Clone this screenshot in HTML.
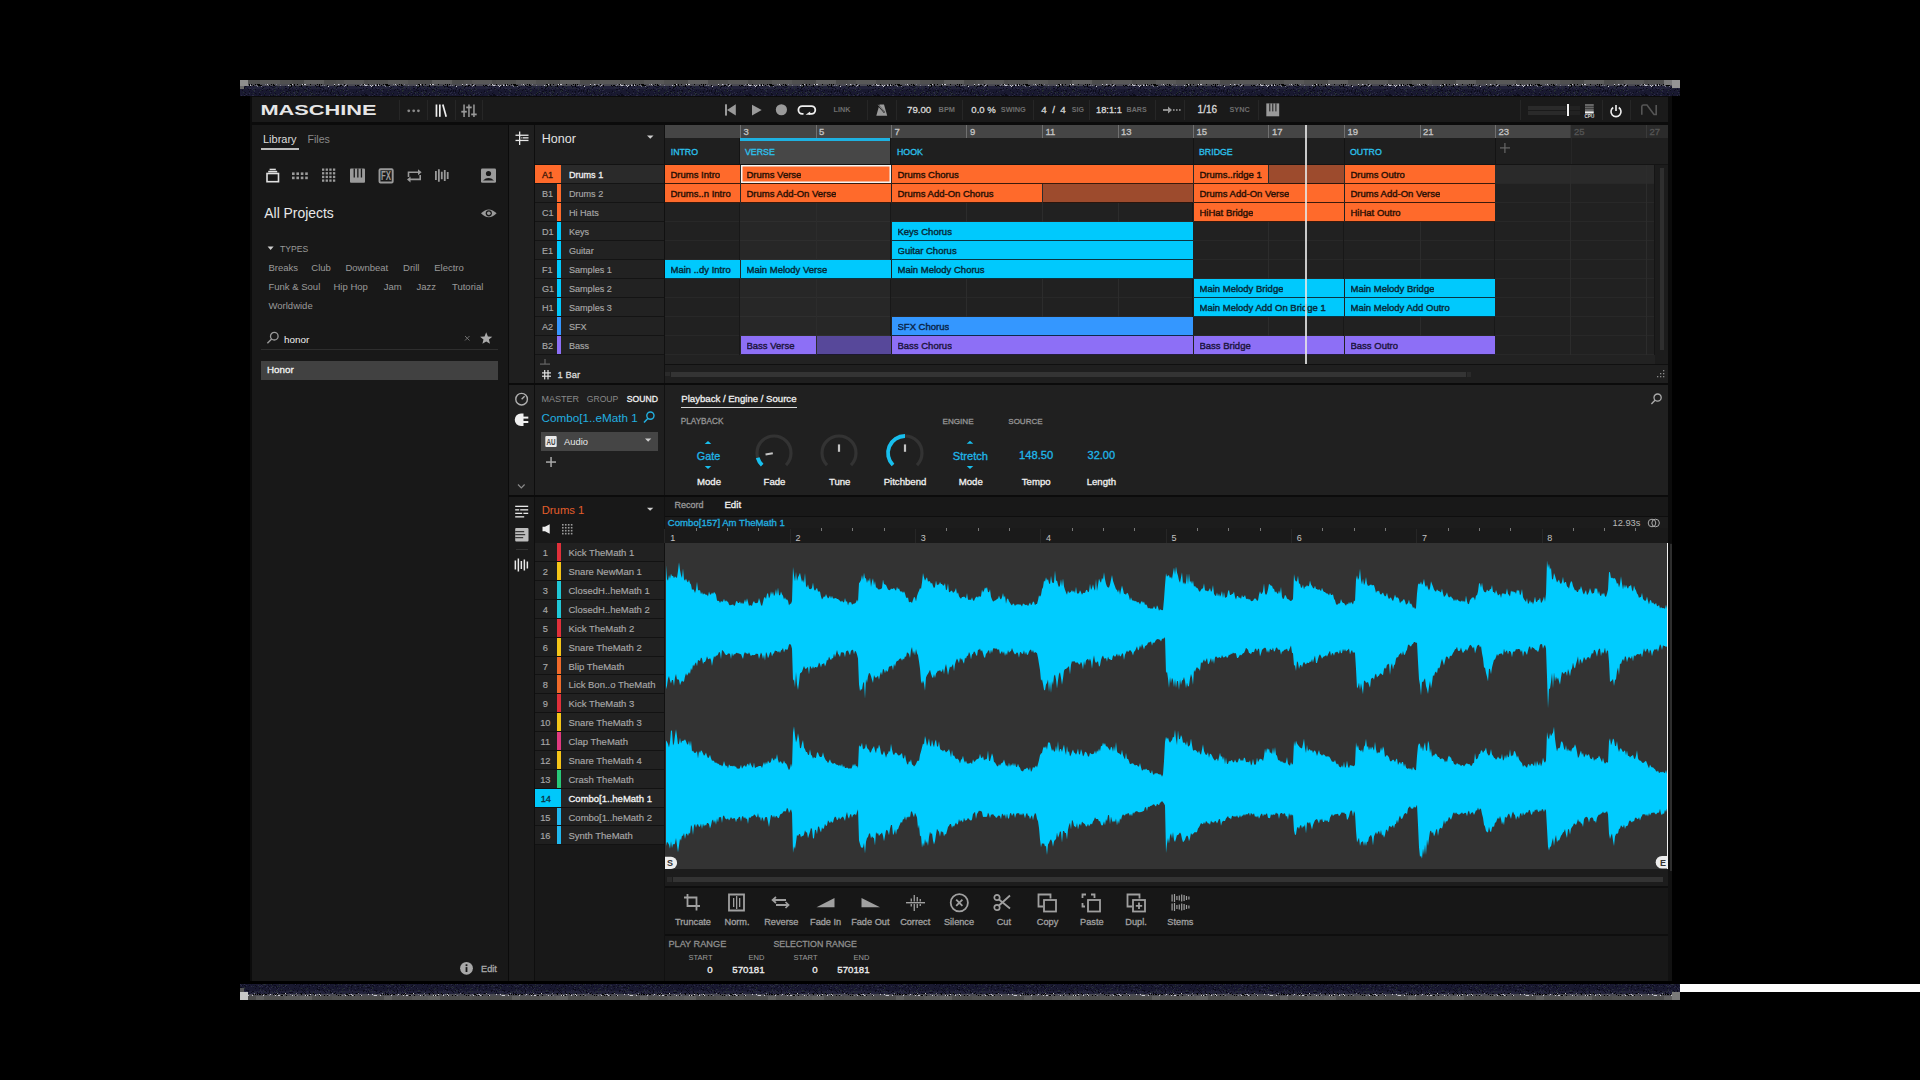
<!DOCTYPE html><html><head><meta charset="utf-8"><title>Maschine</title><style>html,body{margin:0;padding:0;background:#000;width:1920px;height:1080px;overflow:hidden}.t{position:absolute;line-height:1;white-space:nowrap;font-family:"Liberation Sans",sans-serif}.r{position:absolute}.s{position:absolute;overflow:visible}</style></head><body><svg class="s" style="left:240px;top:80px;" width="1440" height="16" viewBox="0 0 1440 16"><defs><pattern id="nz11" x="0" y="0" width="128" height="16" patternUnits="userSpaceOnUse"><rect x="0" y="0" width="20" height="4" fill="#505050"/><rect x="20" y="0" width="20" height="4" fill="#585858"/><rect x="40" y="0" width="12" height="4" fill="#505050"/><rect x="52" y="0" width="12" height="4" fill="#4c4c4c"/><rect x="64" y="0" width="20" height="4" fill="#5e5e5e"/><rect x="84" y="0" width="12" height="4" fill="#4c4c4c"/><rect x="96" y="0" width="8" height="4" fill="#505050"/><rect x="104" y="0" width="20" height="4" fill="#585858"/><rect x="124" y="0" width="8" height="4" fill="#4c4c4c"/><rect x="15" y="4" width="1" height="1" fill="#000"/><rect x="61" y="6" width="1" height="1" fill="#000"/><rect x="118" y="5" width="1" height="1" fill="#000"/><rect x="50" y="6" width="1" height="1" fill="#000"/><rect x="75" y="5" width="1" height="1" fill="#000"/><rect x="21" y="5" width="1" height="1" fill="#c8c8d0"/><rect x="104" y="6" width="1" height="1" fill="#7a7a88"/><rect x="21" y="5" width="1" height="1" fill="#000"/><rect x="58" y="6" width="1" height="1" fill="#000"/><rect x="17" y="6" width="1" height="1" fill="#7a7a88"/><rect x="102" y="4" width="1" height="1" fill="#7a7a88"/><rect x="98" y="4" width="1" height="1" fill="#7a7a88"/><rect x="0" y="4" width="1" height="1" fill="#000"/><rect x="13" y="5" width="1" height="1" fill="#000"/><rect x="101" y="5" width="1" height="1" fill="#000"/><rect x="50" y="5" width="1" height="1" fill="#000"/><rect x="79" y="5" width="1" height="1" fill="#000"/><rect x="104" y="4" width="1" height="1" fill="#000"/><rect x="25" y="4" width="1" height="1" fill="#000"/><rect x="124" y="4" width="1" height="1" fill="#c8c8d0"/><rect x="48" y="5" width="1" height="1" fill="#c8c8d0"/><rect x="33" y="5" width="1" height="1" fill="#c8c8d0"/><rect x="29" y="5" width="1" height="1" fill="#000"/><rect x="54" y="4" width="1" height="1" fill="#000"/><rect x="77" y="4" width="1" height="1" fill="#000"/><rect x="100" y="6" width="1" height="1" fill="#c8c8d0"/><rect x="25" y="4" width="1" height="1" fill="#7a7a88"/><rect x="54" y="5" width="1" height="1" fill="#000"/><rect x="84" y="5" width="1" height="1" fill="#000"/><rect x="19" y="4" width="1" height="1" fill="#000"/><rect x="62" y="4" width="1" height="1" fill="#c8c8d0"/><rect x="95" y="6" width="1" height="1" fill="#000"/><rect x="123" y="6" width="1" height="1" fill="#000"/><rect x="98" y="4" width="1" height="1" fill="#c8c8d0"/><rect x="79" y="4" width="1" height="1" fill="#7a7a88"/><rect x="63" y="4" width="1" height="1" fill="#000"/><rect x="50" y="5" width="1" height="1" fill="#7a7a88"/><rect x="20" y="5" width="1" height="1" fill="#000"/><rect x="27" y="4" width="1" height="1" fill="#c8c8d0"/><rect x="65" y="4" width="1" height="1" fill="#c8c8d0"/><rect x="100" y="5" width="1" height="1" fill="#000"/><rect x="125" y="5" width="1" height="1" fill="#c8c8d0"/><rect x="17" y="4" width="1" height="1" fill="#000"/><rect x="18" y="5" width="1" height="1" fill="#000"/><rect x="52" y="4" width="1" height="1" fill="#000"/><rect x="105" y="5" width="1" height="1" fill="#000"/><rect x="11" y="4" width="1" height="1" fill="#000"/><rect x="33" y="4" width="1" height="1" fill="#000"/><rect x="115" y="5" width="1" height="1" fill="#c8c8d0"/><rect x="35" y="6" width="1" height="1" fill="#000"/><rect x="4" y="5" width="1" height="1" fill="#7a7a88"/><rect x="79" y="4" width="1" height="1" fill="#000"/><rect x="19" y="5" width="1" height="1" fill="#000"/><rect x="79" y="5" width="1" height="1" fill="#000"/><rect x="18" y="4" width="1" height="1" fill="#000"/><rect x="94" y="4" width="1" height="1" fill="#7a7a88"/><rect x="33" y="5" width="1" height="1" fill="#000"/><rect x="121" y="4" width="1" height="1" fill="#7a7a88"/><rect x="106" y="4" width="1" height="1" fill="#7a7a88"/><rect x="3" y="6" width="1" height="1" fill="#c8c8d0"/><rect x="97" y="6" width="1" height="1" fill="#000"/><rect x="18" y="4" width="1" height="1" fill="#000"/><rect x="29" y="5" width="1" height="1" fill="#7a7a88"/><rect x="84" y="5" width="1" height="1" fill="#7a7a88"/><rect x="117" y="5" width="1" height="1" fill="#000"/><rect x="21" y="6" width="1" height="1" fill="#7a7a88"/><rect x="7" y="5" width="1" height="1" fill="#c8c8d0"/><rect x="123" y="4" width="1" height="1" fill="#000"/><rect x="28" y="5" width="1" height="1" fill="#7a7a88"/><rect x="124" y="5" width="1" height="1" fill="#7a7a88"/><rect x="94" y="5" width="1" height="1" fill="#000"/><rect x="51" y="6" width="1" height="1" fill="#000"/><rect x="87" y="5" width="1" height="1" fill="#000"/><rect x="61" y="5" width="1" height="1" fill="#000"/><rect x="64" y="4" width="1" height="1" fill="#c8c8d0"/><rect x="51" y="4" width="1" height="1" fill="#000"/><rect x="81" y="4" width="1" height="1" fill="#000"/><rect x="127" y="5" width="1" height="1" fill="#7a7a88"/><rect x="10" y="4" width="1" height="1" fill="#7a7a88"/><rect x="70" y="4" width="1" height="1" fill="#000"/><rect x="120" y="5" width="1" height="1" fill="#7a7a88"/><rect x="105" y="5" width="1" height="1" fill="#c8c8d0"/><rect x="126" y="5" width="1" height="1" fill="#c8c8d0"/><rect x="115" y="5" width="1" height="1" fill="#000"/><rect x="8" y="5" width="1" height="1" fill="#7a7a88"/><rect x="10" y="5" width="1" height="1" fill="#c8c8d0"/><rect x="79" y="6" width="1" height="1" fill="#000"/><rect x="34" y="5" width="1" height="1" fill="#000"/><rect x="6" y="5" width="1" height="1" fill="#000"/><rect x="36" y="4" width="1" height="1" fill="#7a7a88"/><rect x="29" y="5" width="1" height="1" fill="#000"/><rect x="94" y="4" width="1" height="1" fill="#c8c8d0"/><rect x="51" y="5" width="1" height="1" fill="#000"/><rect x="2" y="5" width="1" height="1" fill="#c8c8d0"/><rect x="9" y="4" width="1" height="1" fill="#000"/><rect x="88" y="6" width="1" height="1" fill="#c8c8d0"/><rect x="40" y="5" width="1" height="1" fill="#7a7a88"/><rect x="57" y="4" width="1" height="1" fill="#000"/><rect x="99" y="4" width="1" height="1" fill="#000"/><rect x="50" y="4" width="1" height="1" fill="#000"/><rect x="87" y="5" width="1" height="1" fill="#000"/><rect x="52" y="4" width="1" height="1" fill="#c8c8d0"/><rect x="31" y="4" width="1" height="1" fill="#000"/><rect x="99" y="4" width="1" height="1" fill="#7a7a88"/><rect x="82" y="5" width="1" height="1" fill="#7a7a88"/><rect x="4" y="5" width="1" height="1" fill="#c8c8d0"/><rect x="9" y="5" width="1" height="1" fill="#000"/><rect x="107" y="5" width="1" height="1" fill="#000"/><rect x="7" y="4" width="1" height="1" fill="#7a7a88"/><rect x="16" y="5" width="1" height="1" fill="#7a7a88"/><rect x="44" y="14" width="1" height="1" fill="#0c0c1a"/><rect x="35" y="13" width="1" height="1" fill="#0c0c1a"/><rect x="112" y="13" width="1" height="1" fill="#2c2c46"/><rect x="22" y="9" width="1" height="1" fill="#2c2c46"/><rect x="74" y="14" width="1" height="1" fill="#263030"/><rect x="65" y="10" width="1" height="1" fill="#263030"/><rect x="53" y="10" width="1" height="1" fill="#12122a"/><rect x="69" y="15" width="1" height="1" fill="#2c2c46"/><rect x="105" y="14" width="1" height="1" fill="#0c0c1a"/><rect x="1" y="15" width="1" height="1" fill="#2c2c46"/><rect x="11" y="14" width="1" height="1" fill="#12122a"/><rect x="31" y="13" width="1" height="1" fill="#0c0c1a"/><rect x="42" y="7" width="1" height="1" fill="#12122a"/><rect x="117" y="12" width="1" height="1" fill="#12122a"/><rect x="103" y="10" width="1" height="1" fill="#0c0c1a"/><rect x="126" y="8" width="1" height="1" fill="#0c0c1a"/><rect x="121" y="14" width="1" height="1" fill="#0c0c1a"/><rect x="49" y="12" width="1" height="1" fill="#263030"/><rect x="66" y="8" width="1" height="1" fill="#263030"/><rect x="5" y="6" width="1" height="1" fill="#0c0c1a"/><rect x="58" y="6" width="1" height="1" fill="#263030"/><rect x="82" y="11" width="1" height="1" fill="#0c0c1a"/><rect x="127" y="7" width="1" height="1" fill="#2c2c46"/><rect x="31" y="14" width="1" height="1" fill="#263030"/><rect x="50" y="14" width="1" height="1" fill="#12122a"/><rect x="5" y="12" width="1" height="1" fill="#263030"/><rect x="40" y="14" width="1" height="1" fill="#0c0c1a"/><rect x="55" y="14" width="1" height="1" fill="#0c0c1a"/><rect x="34" y="9" width="1" height="1" fill="#12122a"/><rect x="88" y="8" width="1" height="1" fill="#0c0c1a"/><rect x="80" y="9" width="1" height="1" fill="#0c0c1a"/><rect x="49" y="7" width="1" height="1" fill="#0c0c1a"/><rect x="61" y="8" width="1" height="1" fill="#263030"/><rect x="66" y="12" width="1" height="1" fill="#0c0c1a"/><rect x="107" y="14" width="1" height="1" fill="#12122a"/><rect x="32" y="9" width="1" height="1" fill="#2c2c46"/><rect x="4" y="7" width="1" height="1" fill="#0c0c1a"/><rect x="91" y="11" width="1" height="1" fill="#0c0c1a"/><rect x="87" y="14" width="1" height="1" fill="#12122a"/><rect x="48" y="7" width="1" height="1" fill="#2c2c46"/><rect x="6" y="6" width="1" height="1" fill="#12122a"/><rect x="123" y="8" width="1" height="1" fill="#0c0c1a"/><rect x="29" y="9" width="1" height="1" fill="#0c0c1a"/><rect x="40" y="10" width="1" height="1" fill="#12122a"/><rect x="24" y="15" width="1" height="1" fill="#0c0c1a"/><rect x="118" y="7" width="1" height="1" fill="#12122a"/><rect x="83" y="12" width="1" height="1" fill="#2c2c46"/><rect x="90" y="12" width="1" height="1" fill="#0c0c1a"/><rect x="95" y="6" width="1" height="1" fill="#263030"/><rect x="10" y="9" width="1" height="1" fill="#0c0c1a"/><rect x="116" y="11" width="1" height="1" fill="#263030"/><rect x="103" y="9" width="1" height="1" fill="#263030"/><rect x="24" y="14" width="1" height="1" fill="#12122a"/><rect x="82" y="7" width="1" height="1" fill="#12122a"/><rect x="103" y="15" width="1" height="1" fill="#2c2c46"/><rect x="87" y="10" width="1" height="1" fill="#0c0c1a"/><rect x="29" y="8" width="1" height="1" fill="#12122a"/><rect x="103" y="8" width="1" height="1" fill="#12122a"/><rect x="94" y="12" width="1" height="1" fill="#12122a"/><rect x="103" y="9" width="1" height="1" fill="#263030"/><rect x="18" y="11" width="1" height="1" fill="#0c0c1a"/><rect x="25" y="6" width="1" height="1" fill="#12122a"/><rect x="12" y="9" width="1" height="1" fill="#0c0c1a"/><rect x="76" y="11" width="1" height="1" fill="#0c0c1a"/><rect x="103" y="15" width="1" height="1" fill="#0c0c1a"/><rect x="19" y="12" width="1" height="1" fill="#2c2c46"/><rect x="127" y="9" width="1" height="1" fill="#263030"/><rect x="101" y="15" width="1" height="1" fill="#0c0c1a"/><rect x="27" y="9" width="1" height="1" fill="#0c0c1a"/><rect x="102" y="14" width="1" height="1" fill="#0c0c1a"/><rect x="50" y="12" width="1" height="1" fill="#0c0c1a"/><rect x="66" y="10" width="1" height="1" fill="#0c0c1a"/><rect x="87" y="14" width="1" height="1" fill="#2c2c46"/><rect x="106" y="14" width="1" height="1" fill="#2c2c46"/><rect x="25" y="13" width="1" height="1" fill="#12122a"/><rect x="19" y="14" width="1" height="1" fill="#2c2c46"/><rect x="11" y="12" width="1" height="1" fill="#12122a"/><rect x="40" y="12" width="1" height="1" fill="#2c2c46"/><rect x="43" y="13" width="1" height="1" fill="#2c2c46"/><rect x="14" y="12" width="1" height="1" fill="#12122a"/><rect x="107" y="10" width="1" height="1" fill="#2c2c46"/><rect x="79" y="11" width="1" height="1" fill="#2c2c46"/><rect x="123" y="10" width="1" height="1" fill="#2c2c46"/><rect x="72" y="10" width="1" height="1" fill="#0c0c1a"/><rect x="62" y="15" width="1" height="1" fill="#0c0c1a"/><rect x="40" y="12" width="1" height="1" fill="#12122a"/><rect x="99" y="6" width="1" height="1" fill="#12122a"/><rect x="101" y="6" width="1" height="1" fill="#2c2c46"/><rect x="81" y="7" width="1" height="1" fill="#12122a"/><rect x="57" y="12" width="1" height="1" fill="#263030"/><rect x="64" y="9" width="1" height="1" fill="#0c0c1a"/><rect x="25" y="13" width="1" height="1" fill="#0c0c1a"/><rect x="62" y="15" width="1" height="1" fill="#263030"/><rect x="12" y="15" width="1" height="1" fill="#2c2c46"/><rect x="30" y="9" width="1" height="1" fill="#12122a"/><rect x="91" y="14" width="1" height="1" fill="#0c0c1a"/><rect x="93" y="13" width="1" height="1" fill="#0c0c1a"/><rect x="106" y="13" width="1" height="1" fill="#263030"/><rect x="107" y="11" width="1" height="1" fill="#12122a"/><rect x="35" y="10" width="1" height="1" fill="#263030"/><rect x="61" y="13" width="1" height="1" fill="#0c0c1a"/><rect x="79" y="14" width="1" height="1" fill="#263030"/><rect x="91" y="10" width="1" height="1" fill="#0c0c1a"/><rect x="48" y="10" width="1" height="1" fill="#12122a"/><rect x="48" y="9" width="1" height="1" fill="#2c2c46"/><rect x="50" y="6" width="1" height="1" fill="#263030"/><rect x="2" y="10" width="1" height="1" fill="#0c0c1a"/><rect x="6" y="15" width="1" height="1" fill="#0c0c1a"/><rect x="56" y="14" width="1" height="1" fill="#0c0c1a"/><rect x="22" y="8" width="1" height="1" fill="#2c2c46"/><rect x="95" y="13" width="1" height="1" fill="#2c2c46"/><rect x="53" y="11" width="1" height="1" fill="#0c0c1a"/><rect x="34" y="7" width="1" height="1" fill="#12122a"/><rect x="114" y="15" width="1" height="1" fill="#12122a"/><rect x="54" y="13" width="1" height="1" fill="#2c2c46"/><rect x="66" y="12" width="1" height="1" fill="#12122a"/><rect x="94" y="8" width="1" height="1" fill="#263030"/><rect x="83" y="10" width="1" height="1" fill="#2c2c46"/><rect x="47" y="12" width="1" height="1" fill="#263030"/><rect x="24" y="13" width="1" height="1" fill="#12122a"/><rect x="20" y="14" width="1" height="1" fill="#0c0c1a"/><rect x="124" y="13" width="1" height="1" fill="#0c0c1a"/><rect x="2" y="7" width="1" height="1" fill="#0c0c1a"/><rect x="20" y="10" width="1" height="1" fill="#2c2c46"/><rect x="83" y="10" width="1" height="1" fill="#12122a"/><rect x="56" y="11" width="1" height="1" fill="#263030"/><rect x="83" y="11" width="1" height="1" fill="#12122a"/><rect x="82" y="13" width="1" height="1" fill="#2c2c46"/><rect x="71" y="13" width="1" height="1" fill="#2c2c46"/><rect x="78" y="13" width="1" height="1" fill="#0c0c1a"/><rect x="102" y="14" width="1" height="1" fill="#0c0c1a"/><rect x="92" y="11" width="1" height="1" fill="#0c0c1a"/><rect x="101" y="15" width="1" height="1" fill="#2c2c46"/><rect x="49" y="15" width="1" height="1" fill="#2c2c46"/><rect x="99" y="14" width="1" height="1" fill="#0c0c1a"/><rect x="45" y="8" width="1" height="1" fill="#0c0c1a"/><rect x="116" y="10" width="1" height="1" fill="#12122a"/><rect x="56" y="14" width="1" height="1" fill="#0c0c1a"/><rect x="40" y="15" width="1" height="1" fill="#0c0c1a"/><rect x="5" y="12" width="1" height="1" fill="#0c0c1a"/><rect x="78" y="14" width="1" height="1" fill="#0c0c1a"/><rect x="20" y="10" width="1" height="1" fill="#263030"/><rect x="80" y="7" width="1" height="1" fill="#0c0c1a"/><rect x="36" y="7" width="1" height="1" fill="#263030"/><rect x="108" y="9" width="1" height="1" fill="#263030"/><rect x="125" y="14" width="1" height="1" fill="#0c0c1a"/><rect x="117" y="12" width="1" height="1" fill="#2c2c46"/><rect x="85" y="8" width="1" height="1" fill="#2c2c46"/><rect x="18" y="15" width="1" height="1" fill="#12122a"/><rect x="105" y="11" width="1" height="1" fill="#12122a"/><rect x="96" y="7" width="1" height="1" fill="#12122a"/><rect x="6" y="14" width="1" height="1" fill="#2c2c46"/><rect x="2" y="7" width="1" height="1" fill="#2c2c46"/><rect x="107" y="8" width="1" height="1" fill="#0c0c1a"/><rect x="41" y="12" width="1" height="1" fill="#263030"/><rect x="82" y="9" width="1" height="1" fill="#2c2c46"/><rect x="74" y="10" width="1" height="1" fill="#12122a"/><rect x="15" y="13" width="1" height="1" fill="#0c0c1a"/><rect x="29" y="10" width="1" height="1" fill="#263030"/><rect x="45" y="6" width="1" height="1" fill="#12122a"/><rect x="4" y="15" width="1" height="1" fill="#2c2c46"/><rect x="9" y="11" width="1" height="1" fill="#0c0c1a"/><rect x="47" y="11" width="1" height="1" fill="#0c0c1a"/><rect x="60" y="15" width="1" height="1" fill="#263030"/><rect x="57" y="13" width="1" height="1" fill="#0c0c1a"/><rect x="71" y="12" width="1" height="1" fill="#0c0c1a"/><rect x="79" y="14" width="1" height="1" fill="#12122a"/><rect x="122" y="10" width="1" height="1" fill="#2c2c46"/><rect x="103" y="11" width="1" height="1" fill="#263030"/><rect x="23" y="13" width="1" height="1" fill="#12122a"/><rect x="102" y="6" width="1" height="1" fill="#0c0c1a"/><rect x="34" y="12" width="1" height="1" fill="#12122a"/><rect x="70" y="6" width="1" height="1" fill="#263030"/><rect x="60" y="6" width="1" height="1" fill="#12122a"/><rect x="95" y="13" width="1" height="1" fill="#12122a"/><rect x="107" y="15" width="1" height="1" fill="#12122a"/><rect x="106" y="8" width="1" height="1" fill="#12122a"/><rect x="37" y="10" width="1" height="1" fill="#12122a"/><rect x="33" y="15" width="1" height="1" fill="#0c0c1a"/><rect x="13" y="8" width="1" height="1" fill="#2c2c46"/><rect x="45" y="6" width="1" height="1" fill="#0c0c1a"/><rect x="38" y="8" width="1" height="1" fill="#0c0c1a"/><rect x="69" y="15" width="1" height="1" fill="#263030"/><rect x="24" y="13" width="1" height="1" fill="#263030"/><rect x="21" y="15" width="1" height="1" fill="#2c2c46"/><rect x="77" y="6" width="1" height="1" fill="#12122a"/><rect x="106" y="9" width="1" height="1" fill="#12122a"/><rect x="23" y="13" width="1" height="1" fill="#0c0c1a"/><rect x="105" y="14" width="1" height="1" fill="#2c2c46"/><rect x="79" y="11" width="1" height="1" fill="#0c0c1a"/><rect x="19" y="14" width="1" height="1" fill="#0c0c1a"/><rect x="119" y="7" width="1" height="1" fill="#2c2c46"/><rect x="35" y="7" width="1" height="1" fill="#263030"/><rect x="118" y="7" width="1" height="1" fill="#263030"/><rect x="3" y="12" width="1" height="1" fill="#263030"/><rect x="121" y="9" width="1" height="1" fill="#0c0c1a"/><rect x="29" y="13" width="1" height="1" fill="#12122a"/><rect x="52" y="15" width="1" height="1" fill="#0c0c1a"/><rect x="96" y="14" width="1" height="1" fill="#263030"/><rect x="86" y="12" width="1" height="1" fill="#2c2c46"/><rect x="22" y="10" width="1" height="1" fill="#0c0c1a"/><rect x="96" y="7" width="1" height="1" fill="#0c0c1a"/><rect x="70" y="15" width="1" height="1" fill="#2c2c46"/><rect x="84" y="13" width="1" height="1" fill="#12122a"/><rect x="23" y="7" width="1" height="1" fill="#0c0c1a"/><rect x="24" y="8" width="1" height="1" fill="#263030"/><rect x="45" y="8" width="1" height="1" fill="#0c0c1a"/><rect x="9" y="13" width="1" height="1" fill="#2c2c46"/><rect x="23" y="7" width="1" height="1" fill="#0c0c1a"/><rect x="40" y="7" width="1" height="1" fill="#2c2c46"/><rect x="18" y="11" width="1" height="1" fill="#12122a"/><rect x="109" y="14" width="1" height="1" fill="#0c0c1a"/><rect x="52" y="8" width="1" height="1" fill="#12122a"/><rect x="98" y="13" width="1" height="1" fill="#0c0c1a"/><rect x="105" y="15" width="1" height="1" fill="#0c0c1a"/><rect x="102" y="15" width="1" height="1" fill="#263030"/><rect x="62" y="15" width="1" height="1" fill="#2c2c46"/><rect x="66" y="11" width="1" height="1" fill="#0c0c1a"/><rect x="78" y="13" width="1" height="1" fill="#0c0c1a"/><rect x="96" y="9" width="1" height="1" fill="#2c2c46"/><rect x="75" y="7" width="1" height="1" fill="#263030"/><rect x="40" y="10" width="1" height="1" fill="#12122a"/><rect x="76" y="14" width="1" height="1" fill="#0c0c1a"/><rect x="36" y="15" width="1" height="1" fill="#263030"/><rect x="50" y="15" width="1" height="1" fill="#12122a"/><rect x="50" y="7" width="1" height="1" fill="#0c0c1a"/><rect x="122" y="15" width="1" height="1" fill="#2c2c46"/><rect x="85" y="11" width="1" height="1" fill="#0c0c1a"/><rect x="92" y="10" width="1" height="1" fill="#2c2c46"/><rect x="31" y="13" width="1" height="1" fill="#12122a"/><rect x="34" y="9" width="1" height="1" fill="#12122a"/><rect x="16" y="14" width="1" height="1" fill="#12122a"/><rect x="43" y="11" width="1" height="1" fill="#263030"/><rect x="31" y="6" width="1" height="1" fill="#0c0c1a"/><rect x="93" y="9" width="1" height="1" fill="#12122a"/><rect x="92" y="8" width="1" height="1" fill="#0c0c1a"/><rect x="19" y="13" width="1" height="1" fill="#0c0c1a"/><rect x="46" y="8" width="1" height="1" fill="#0c0c1a"/><rect x="97" y="15" width="1" height="1" fill="#2c2c46"/><rect x="4" y="8" width="1" height="1" fill="#0c0c1a"/><rect x="119" y="6" width="1" height="1" fill="#0c0c1a"/><rect x="98" y="7" width="1" height="1" fill="#2c2c46"/><rect x="44" y="11" width="1" height="1" fill="#2c2c46"/><rect x="67" y="9" width="1" height="1" fill="#2c2c46"/><rect x="85" y="6" width="1" height="1" fill="#263030"/><rect x="9" y="8" width="1" height="1" fill="#2c2c46"/><rect x="127" y="15" width="1" height="1" fill="#0c0c1a"/><rect x="88" y="12" width="1" height="1" fill="#12122a"/><rect x="104" y="10" width="1" height="1" fill="#2c2c46"/><rect x="118" y="12" width="1" height="1" fill="#12122a"/><rect x="30" y="15" width="1" height="1" fill="#0c0c1a"/><rect x="84" y="14" width="1" height="1" fill="#2c2c46"/><rect x="107" y="6" width="1" height="1" fill="#0c0c1a"/><rect x="13" y="10" width="1" height="1" fill="#263030"/><rect x="110" y="12" width="1" height="1" fill="#2c2c46"/><rect x="78" y="15" width="1" height="1" fill="#12122a"/><rect x="62" y="7" width="1" height="1" fill="#12122a"/><rect x="62" y="14" width="1" height="1" fill="#12122a"/><rect x="13" y="13" width="1" height="1" fill="#263030"/><rect x="61" y="14" width="1" height="1" fill="#0c0c1a"/><rect x="101" y="9" width="1" height="1" fill="#12122a"/><rect x="94" y="14" width="1" height="1" fill="#2c2c46"/><rect x="42" y="9" width="1" height="1" fill="#263030"/><rect x="107" y="15" width="1" height="1" fill="#0c0c1a"/><rect x="18" y="7" width="1" height="1" fill="#2c2c46"/><rect x="33" y="7" width="1" height="1" fill="#12122a"/><rect x="116" y="6" width="1" height="1" fill="#0c0c1a"/><rect x="76" y="6" width="1" height="1" fill="#0c0c1a"/><rect x="16" y="13" width="1" height="1" fill="#12122a"/><rect x="101" y="8" width="1" height="1" fill="#2c2c46"/><rect x="59" y="6" width="1" height="1" fill="#0c0c1a"/><rect x="116" y="11" width="1" height="1" fill="#0c0c1a"/><rect x="127" y="8" width="1" height="1" fill="#12122a"/><rect x="120" y="9" width="1" height="1" fill="#0c0c1a"/><rect x="15" y="9" width="1" height="1" fill="#0c0c1a"/><rect x="90" y="13" width="1" height="1" fill="#0c0c1a"/><rect x="51" y="14" width="1" height="1" fill="#263030"/><rect x="49" y="6" width="1" height="1" fill="#263030"/><rect x="78" y="11" width="1" height="1" fill="#12122a"/><rect x="70" y="12" width="1" height="1" fill="#263030"/><rect x="34" y="11" width="1" height="1" fill="#263030"/><rect x="113" y="12" width="1" height="1" fill="#0c0c1a"/><rect x="57" y="10" width="1" height="1" fill="#0c0c1a"/><rect x="50" y="10" width="1" height="1" fill="#0c0c1a"/><rect x="60" y="14" width="1" height="1" fill="#263030"/><rect x="69" y="11" width="1" height="1" fill="#12122a"/><rect x="29" y="15" width="1" height="1" fill="#2c2c46"/><rect x="77" y="8" width="1" height="1" fill="#263030"/><rect x="70" y="8" width="1" height="1" fill="#263030"/><rect x="23" y="13" width="1" height="1" fill="#12122a"/><rect x="112" y="14" width="1" height="1" fill="#0c0c1a"/><rect x="11" y="6" width="1" height="1" fill="#2c2c46"/><rect x="72" y="14" width="1" height="1" fill="#0c0c1a"/><rect x="22" y="8" width="1" height="1" fill="#0c0c1a"/><rect x="48" y="9" width="1" height="1" fill="#0c0c1a"/><rect x="7" y="8" width="1" height="1" fill="#12122a"/><rect x="38" y="6" width="1" height="1" fill="#263030"/><rect x="98" y="6" width="1" height="1" fill="#12122a"/><rect x="127" y="6" width="1" height="1" fill="#0c0c1a"/><rect x="92" y="11" width="1" height="1" fill="#263030"/><rect x="8" y="14" width="1" height="1" fill="#0c0c1a"/><rect x="44" y="15" width="1" height="1" fill="#12122a"/><rect x="42" y="7" width="1" height="1" fill="#263030"/><rect x="60" y="13" width="1" height="1" fill="#2c2c46"/><rect x="65" y="9" width="1" height="1" fill="#0c0c1a"/><rect x="56" y="15" width="1" height="1" fill="#263030"/><rect x="66" y="6" width="1" height="1" fill="#0c0c1a"/><rect x="13" y="15" width="1" height="1" fill="#2c2c46"/><rect x="46" y="11" width="1" height="1" fill="#0c0c1a"/><rect x="4" y="15" width="1" height="1" fill="#2c2c46"/><rect x="111" y="14" width="1" height="1" fill="#2c2c46"/><rect x="67" y="6" width="1" height="1" fill="#0c0c1a"/><rect x="45" y="15" width="1" height="1" fill="#263030"/><rect x="60" y="15" width="1" height="1" fill="#0c0c1a"/><rect x="79" y="12" width="1" height="1" fill="#0c0c1a"/><rect x="80" y="15" width="1" height="1" fill="#263030"/><rect x="67" y="15" width="1" height="1" fill="#2c2c46"/><rect x="43" y="12" width="1" height="1" fill="#0c0c1a"/><rect x="40" y="13" width="1" height="1" fill="#263030"/><rect x="116" y="6" width="1" height="1" fill="#0c0c1a"/><rect x="119" y="11" width="1" height="1" fill="#263030"/><rect x="10" y="8" width="1" height="1" fill="#2c2c46"/><rect x="34" y="8" width="1" height="1" fill="#263030"/><rect x="10" y="6" width="1" height="1" fill="#0c0c1a"/><rect x="36" y="7" width="1" height="1" fill="#2c2c46"/><rect x="76" y="13" width="1" height="1" fill="#2c2c46"/><rect x="19" y="6" width="1" height="1" fill="#263030"/><rect x="58" y="10" width="1" height="1" fill="#0c0c1a"/><rect x="61" y="12" width="1" height="1" fill="#2c2c46"/><rect x="58" y="11" width="1" height="1" fill="#0c0c1a"/><rect x="55" y="6" width="1" height="1" fill="#0c0c1a"/><rect x="14" y="11" width="1" height="1" fill="#2c2c46"/><rect x="45" y="13" width="1" height="1" fill="#12122a"/><rect x="54" y="12" width="1" height="1" fill="#2c2c46"/><rect x="12" y="9" width="1" height="1" fill="#2c2c46"/><rect x="63" y="8" width="1" height="1" fill="#12122a"/><rect x="41" y="13" width="1" height="1" fill="#0c0c1a"/><rect x="54" y="15" width="1" height="1" fill="#2c2c46"/><rect x="78" y="13" width="1" height="1" fill="#2c2c46"/><rect x="46" y="13" width="1" height="1" fill="#0c0c1a"/><rect x="98" y="12" width="1" height="1" fill="#0c0c1a"/><rect x="70" y="11" width="1" height="1" fill="#12122a"/><rect x="4" y="14" width="1" height="1" fill="#0c0c1a"/><rect x="67" y="14" width="1" height="1" fill="#2c2c46"/><rect x="55" y="10" width="1" height="1" fill="#0c0c1a"/><rect x="14" y="8" width="1" height="1" fill="#263030"/><rect x="92" y="8" width="1" height="1" fill="#12122a"/><rect x="30" y="6" width="1" height="1" fill="#12122a"/><rect x="98" y="13" width="1" height="1" fill="#0c0c1a"/><rect x="97" y="11" width="1" height="1" fill="#0c0c1a"/><rect x="14" y="10" width="1" height="1" fill="#2c2c46"/><rect x="61" y="13" width="1" height="1" fill="#0c0c1a"/><rect x="38" y="14" width="1" height="1" fill="#2c2c46"/><rect x="8" y="9" width="1" height="1" fill="#0c0c1a"/><rect x="108" y="13" width="1" height="1" fill="#2c2c46"/><rect x="34" y="14" width="1" height="1" fill="#263030"/><rect x="66" y="11" width="1" height="1" fill="#263030"/><rect x="96" y="8" width="1" height="1" fill="#12122a"/><rect x="71" y="14" width="1" height="1" fill="#263030"/><rect x="103" y="8" width="1" height="1" fill="#2c2c46"/><rect x="91" y="9" width="1" height="1" fill="#0c0c1a"/><rect x="94" y="11" width="1" height="1" fill="#263030"/><rect x="35" y="6" width="1" height="1" fill="#12122a"/><rect x="123" y="15" width="1" height="1" fill="#0c0c1a"/><rect x="76" y="7" width="1" height="1" fill="#12122a"/><rect x="55" y="14" width="1" height="1" fill="#263030"/><rect x="31" y="11" width="1" height="1" fill="#0c0c1a"/><rect x="66" y="7" width="1" height="1" fill="#12122a"/><rect x="30" y="12" width="1" height="1" fill="#2c2c46"/><rect x="125" y="12" width="1" height="1" fill="#12122a"/><rect x="72" y="13" width="1" height="1" fill="#263030"/><rect x="56" y="8" width="1" height="1" fill="#12122a"/><rect x="51" y="13" width="1" height="1" fill="#12122a"/><rect x="89" y="9" width="1" height="1" fill="#2c2c46"/><rect x="87" y="12" width="1" height="1" fill="#12122a"/><rect x="122" y="15" width="1" height="1" fill="#0c0c1a"/><rect x="78" y="6" width="1" height="1" fill="#12122a"/><rect x="30" y="11" width="1" height="1" fill="#12122a"/><rect x="103" y="10" width="1" height="1" fill="#0c0c1a"/><rect x="126" y="15" width="1" height="1" fill="#0c0c1a"/><rect x="83" y="10" width="1" height="1" fill="#0c0c1a"/><rect x="9" y="11" width="1" height="1" fill="#0c0c1a"/><rect x="95" y="15" width="1" height="1" fill="#0c0c1a"/><rect x="47" y="13" width="1" height="1" fill="#2c2c46"/><rect x="87" y="11" width="1" height="1" fill="#0c0c1a"/><rect x="55" y="7" width="1" height="1" fill="#263030"/><rect x="105" y="15" width="1" height="1" fill="#2c2c46"/><rect x="70" y="7" width="1" height="1" fill="#12122a"/><rect x="115" y="12" width="1" height="1" fill="#12122a"/><rect x="98" y="6" width="1" height="1" fill="#12122a"/><rect x="69" y="10" width="1" height="1" fill="#2c2c46"/><rect x="121" y="6" width="1" height="1" fill="#0c0c1a"/><rect x="49" y="10" width="1" height="1" fill="#0c0c1a"/><rect x="56" y="9" width="1" height="1" fill="#2c2c46"/><rect x="100" y="6" width="1" height="1" fill="#0c0c1a"/><rect x="126" y="14" width="1" height="1" fill="#0c0c1a"/><rect x="85" y="10" width="1" height="1" fill="#0c0c1a"/><rect x="4" y="11" width="1" height="1" fill="#12122a"/><rect x="53" y="12" width="1" height="1" fill="#263030"/><rect x="49" y="8" width="1" height="1" fill="#0c0c1a"/><rect x="125" y="15" width="1" height="1" fill="#0c0c1a"/><rect x="106" y="10" width="1" height="1" fill="#2c2c46"/><rect x="127" y="9" width="1" height="1" fill="#263030"/><rect x="92" y="11" width="1" height="1" fill="#263030"/><rect x="32" y="7" width="1" height="1" fill="#12122a"/><rect x="26" y="10" width="1" height="1" fill="#0c0c1a"/><rect x="115" y="14" width="1" height="1" fill="#12122a"/><rect x="123" y="6" width="1" height="1" fill="#0c0c1a"/><rect x="105" y="13" width="1" height="1" fill="#0c0c1a"/><rect x="64" y="12" width="1" height="1" fill="#2c2c46"/><rect x="100" y="10" width="1" height="1" fill="#263030"/><rect x="64" y="11" width="1" height="1" fill="#263030"/><rect x="83" y="8" width="1" height="1" fill="#0c0c1a"/><rect x="52" y="15" width="1" height="1" fill="#12122a"/><rect x="107" y="8" width="1" height="1" fill="#263030"/><rect x="68" y="8" width="1" height="1" fill="#0c0c1a"/><rect x="96" y="15" width="1" height="1" fill="#263030"/><rect x="59" y="8" width="1" height="1" fill="#12122a"/><rect x="120" y="15" width="1" height="1" fill="#263030"/><rect x="34" y="10" width="1" height="1" fill="#263030"/></pattern></defs><rect x="0" y="0" width="1440" height="4" fill="#535353"/><rect x="0" y="4" width="1440" height="2" fill="#4a4a52"/><rect x="0" y="6" width="1440" height="3" fill="#22223a"/><rect x="0" y="9" width="1440" height="7" fill="#191930"/><rect x="0" y="0" width="1440" height="16" fill="url(#nz11)"/><rect x="0" y="0" width="8" height="6" fill="#8e8e8e"/><rect x="0" y="6" width="4" height="3" fill="#6a6a6a"/><rect x="1424" y="0" width="16" height="5" fill="#7a7a7a"/><rect x="1432" y="0" width="8" height="8" fill="#959595"/></svg>
<svg class="s" style="left:240px;top:984px;" width="1440" height="16" viewBox="0 0 1440 16"><defs><pattern id="nz23" x="0" y="0" width="128" height="16" patternUnits="userSpaceOnUse"><rect x="0" y="12" width="16" height="4" fill="#4c4c4c"/><rect x="16" y="12" width="8" height="4" fill="#5e5e5e"/><rect x="24" y="12" width="20" height="4" fill="#505050"/><rect x="44" y="12" width="16" height="4" fill="#585858"/><rect x="60" y="12" width="12" height="4" fill="#5e5e5e"/><rect x="72" y="12" width="20" height="4" fill="#4c4c4c"/><rect x="92" y="12" width="12" height="4" fill="#505050"/><rect x="104" y="12" width="8" height="4" fill="#4c4c4c"/><rect x="112" y="12" width="8" height="4" fill="#505050"/><rect x="120" y="12" width="20" height="4" fill="#4c4c4c"/><rect x="110" y="10" width="1" height="1" fill="#7a7a88"/><rect x="52" y="11" width="1" height="1" fill="#c8c8d0"/><rect x="44" y="9" width="1" height="1" fill="#000"/><rect x="92" y="9" width="1" height="1" fill="#7a7a88"/><rect x="94" y="9" width="1" height="1" fill="#000"/><rect x="80" y="9" width="1" height="1" fill="#000"/><rect x="121" y="11" width="1" height="1" fill="#c8c8d0"/><rect x="114" y="11" width="1" height="1" fill="#000"/><rect x="45" y="9" width="1" height="1" fill="#000"/><rect x="50" y="9" width="1" height="1" fill="#000"/><rect x="25" y="10" width="1" height="1" fill="#000"/><rect x="70" y="9" width="1" height="1" fill="#000"/><rect x="84" y="11" width="1" height="1" fill="#000"/><rect x="73" y="9" width="1" height="1" fill="#000"/><rect x="116" y="9" width="1" height="1" fill="#000"/><rect x="38" y="11" width="1" height="1" fill="#c8c8d0"/><rect x="30" y="10" width="1" height="1" fill="#000"/><rect x="36" y="9" width="1" height="1" fill="#000"/><rect x="98" y="11" width="1" height="1" fill="#000"/><rect x="8" y="11" width="1" height="1" fill="#c8c8d0"/><rect x="100" y="11" width="1" height="1" fill="#000"/><rect x="57" y="11" width="1" height="1" fill="#7a7a88"/><rect x="14" y="9" width="1" height="1" fill="#7a7a88"/><rect x="113" y="11" width="1" height="1" fill="#000"/><rect x="96" y="10" width="1" height="1" fill="#000"/><rect x="19" y="10" width="1" height="1" fill="#000"/><rect x="50" y="10" width="1" height="1" fill="#7a7a88"/><rect x="55" y="11" width="1" height="1" fill="#000"/><rect x="43" y="9" width="1" height="1" fill="#c8c8d0"/><rect x="61" y="10" width="1" height="1" fill="#000"/><rect x="42" y="11" width="1" height="1" fill="#000"/><rect x="87" y="10" width="1" height="1" fill="#7a7a88"/><rect x="105" y="11" width="1" height="1" fill="#c8c8d0"/><rect x="61" y="9" width="1" height="1" fill="#000"/><rect x="104" y="10" width="1" height="1" fill="#7a7a88"/><rect x="13" y="10" width="1" height="1" fill="#000"/><rect x="35" y="10" width="1" height="1" fill="#7a7a88"/><rect x="110" y="11" width="1" height="1" fill="#000"/><rect x="20" y="10" width="1" height="1" fill="#c8c8d0"/><rect x="29" y="11" width="1" height="1" fill="#7a7a88"/><rect x="120" y="10" width="1" height="1" fill="#7a7a88"/><rect x="69" y="11" width="1" height="1" fill="#000"/><rect x="6" y="11" width="1" height="1" fill="#c8c8d0"/><rect x="102" y="11" width="1" height="1" fill="#7a7a88"/><rect x="7" y="11" width="1" height="1" fill="#c8c8d0"/><rect x="108" y="11" width="1" height="1" fill="#000"/><rect x="70" y="10" width="1" height="1" fill="#c8c8d0"/><rect x="45" y="9" width="1" height="1" fill="#c8c8d0"/><rect x="67" y="11" width="1" height="1" fill="#000"/><rect x="15" y="10" width="1" height="1" fill="#000"/><rect x="4" y="10" width="1" height="1" fill="#c8c8d0"/><rect x="74" y="10" width="1" height="1" fill="#000"/><rect x="77" y="10" width="1" height="1" fill="#7a7a88"/><rect x="87" y="11" width="1" height="1" fill="#000"/><rect x="107" y="10" width="1" height="1" fill="#7a7a88"/><rect x="65" y="9" width="1" height="1" fill="#000"/><rect x="22" y="10" width="1" height="1" fill="#000"/><rect x="67" y="11" width="1" height="1" fill="#c8c8d0"/><rect x="28" y="9" width="1" height="1" fill="#000"/><rect x="30" y="10" width="1" height="1" fill="#c8c8d0"/><rect x="113" y="11" width="1" height="1" fill="#7a7a88"/><rect x="66" y="11" width="1" height="1" fill="#000"/><rect x="120" y="11" width="1" height="1" fill="#000"/><rect x="20" y="10" width="1" height="1" fill="#000"/><rect x="37" y="9" width="1" height="1" fill="#7a7a88"/><rect x="23" y="11" width="1" height="1" fill="#c8c8d0"/><rect x="101" y="9" width="1" height="1" fill="#c8c8d0"/><rect x="75" y="11" width="1" height="1" fill="#c8c8d0"/><rect x="43" y="11" width="1" height="1" fill="#7a7a88"/><rect x="46" y="11" width="1" height="1" fill="#000"/><rect x="35" y="10" width="1" height="1" fill="#000"/><rect x="75" y="9" width="1" height="1" fill="#7a7a88"/><rect x="12" y="11" width="1" height="1" fill="#c8c8d0"/><rect x="26" y="10" width="1" height="1" fill="#000"/><rect x="89" y="11" width="1" height="1" fill="#000"/><rect x="54" y="11" width="1" height="1" fill="#7a7a88"/><rect x="81" y="9" width="1" height="1" fill="#000"/><rect x="111" y="10" width="1" height="1" fill="#c8c8d0"/><rect x="56" y="9" width="1" height="1" fill="#7a7a88"/><rect x="79" y="10" width="1" height="1" fill="#7a7a88"/><rect x="33" y="10" width="1" height="1" fill="#000"/><rect x="79" y="11" width="1" height="1" fill="#000"/><rect x="89" y="11" width="1" height="1" fill="#7a7a88"/><rect x="41" y="11" width="1" height="1" fill="#000"/><rect x="108" y="11" width="1" height="1" fill="#000"/><rect x="109" y="10" width="1" height="1" fill="#7a7a88"/><rect x="106" y="10" width="1" height="1" fill="#000"/><rect x="80" y="11" width="1" height="1" fill="#c8c8d0"/><rect x="114" y="11" width="1" height="1" fill="#000"/><rect x="94" y="9" width="1" height="1" fill="#000"/><rect x="4" y="9" width="1" height="1" fill="#7a7a88"/><rect x="109" y="9" width="1" height="1" fill="#000"/><rect x="112" y="11" width="1" height="1" fill="#c8c8d0"/><rect x="110" y="11" width="1" height="1" fill="#000"/><rect x="0" y="10" width="1" height="1" fill="#c8c8d0"/><rect x="65" y="11" width="1" height="1" fill="#c8c8d0"/><rect x="107" y="10" width="1" height="1" fill="#000"/><rect x="69" y="11" width="1" height="1" fill="#000"/><rect x="16" y="9" width="1" height="1" fill="#7a7a88"/><rect x="118" y="9" width="1" height="1" fill="#7a7a88"/><rect x="17" y="10" width="1" height="1" fill="#000"/><rect x="37" y="10" width="1" height="1" fill="#000"/><rect x="4" y="9" width="1" height="1" fill="#c8c8d0"/><rect x="50" y="10" width="1" height="1" fill="#7a7a88"/><rect x="79" y="10" width="1" height="1" fill="#c8c8d0"/><rect x="110" y="10" width="1" height="1" fill="#7a7a88"/><rect x="75" y="10" width="1" height="1" fill="#7a7a88"/><rect x="5" y="11" width="1" height="1" fill="#7a7a88"/><rect x="39" y="11" width="1" height="1" fill="#c8c8d0"/><rect x="35" y="11" width="1" height="1" fill="#c8c8d0"/><rect x="79" y="5" width="1" height="1" fill="#0c0c1a"/><rect x="20" y="8" width="1" height="1" fill="#12122a"/><rect x="8" y="2" width="1" height="1" fill="#12122a"/><rect x="9" y="1" width="1" height="1" fill="#0c0c1a"/><rect x="107" y="9" width="1" height="1" fill="#12122a"/><rect x="50" y="8" width="1" height="1" fill="#263030"/><rect x="33" y="7" width="1" height="1" fill="#12122a"/><rect x="125" y="9" width="1" height="1" fill="#263030"/><rect x="36" y="5" width="1" height="1" fill="#12122a"/><rect x="0" y="0" width="1" height="1" fill="#12122a"/><rect x="11" y="0" width="1" height="1" fill="#12122a"/><rect x="107" y="9" width="1" height="1" fill="#263030"/><rect x="35" y="7" width="1" height="1" fill="#12122a"/><rect x="90" y="0" width="1" height="1" fill="#12122a"/><rect x="106" y="9" width="1" height="1" fill="#12122a"/><rect x="20" y="2" width="1" height="1" fill="#0c0c1a"/><rect x="8" y="7" width="1" height="1" fill="#0c0c1a"/><rect x="29" y="7" width="1" height="1" fill="#0c0c1a"/><rect x="28" y="0" width="1" height="1" fill="#12122a"/><rect x="50" y="7" width="1" height="1" fill="#2c2c46"/><rect x="52" y="8" width="1" height="1" fill="#0c0c1a"/><rect x="25" y="0" width="1" height="1" fill="#263030"/><rect x="32" y="8" width="1" height="1" fill="#2c2c46"/><rect x="91" y="8" width="1" height="1" fill="#0c0c1a"/><rect x="96" y="4" width="1" height="1" fill="#12122a"/><rect x="25" y="6" width="1" height="1" fill="#0c0c1a"/><rect x="108" y="2" width="1" height="1" fill="#0c0c1a"/><rect x="63" y="4" width="1" height="1" fill="#0c0c1a"/><rect x="24" y="7" width="1" height="1" fill="#263030"/><rect x="39" y="8" width="1" height="1" fill="#2c2c46"/><rect x="8" y="9" width="1" height="1" fill="#2c2c46"/><rect x="13" y="7" width="1" height="1" fill="#12122a"/><rect x="67" y="4" width="1" height="1" fill="#263030"/><rect x="118" y="4" width="1" height="1" fill="#0c0c1a"/><rect x="109" y="2" width="1" height="1" fill="#12122a"/><rect x="26" y="3" width="1" height="1" fill="#2c2c46"/><rect x="96" y="3" width="1" height="1" fill="#263030"/><rect x="4" y="7" width="1" height="1" fill="#2c2c46"/><rect x="17" y="9" width="1" height="1" fill="#0c0c1a"/><rect x="84" y="7" width="1" height="1" fill="#0c0c1a"/><rect x="85" y="3" width="1" height="1" fill="#263030"/><rect x="36" y="3" width="1" height="1" fill="#0c0c1a"/><rect x="70" y="1" width="1" height="1" fill="#2c2c46"/><rect x="102" y="7" width="1" height="1" fill="#263030"/><rect x="103" y="4" width="1" height="1" fill="#263030"/><rect x="2" y="4" width="1" height="1" fill="#12122a"/><rect x="20" y="2" width="1" height="1" fill="#2c2c46"/><rect x="13" y="3" width="1" height="1" fill="#263030"/><rect x="20" y="5" width="1" height="1" fill="#0c0c1a"/><rect x="4" y="0" width="1" height="1" fill="#263030"/><rect x="93" y="3" width="1" height="1" fill="#12122a"/><rect x="62" y="0" width="1" height="1" fill="#0c0c1a"/><rect x="66" y="5" width="1" height="1" fill="#12122a"/><rect x="51" y="6" width="1" height="1" fill="#263030"/><rect x="37" y="2" width="1" height="1" fill="#263030"/><rect x="104" y="4" width="1" height="1" fill="#2c2c46"/><rect x="56" y="0" width="1" height="1" fill="#2c2c46"/><rect x="13" y="3" width="1" height="1" fill="#12122a"/><rect x="29" y="8" width="1" height="1" fill="#0c0c1a"/><rect x="29" y="7" width="1" height="1" fill="#0c0c1a"/><rect x="111" y="5" width="1" height="1" fill="#12122a"/><rect x="90" y="7" width="1" height="1" fill="#0c0c1a"/><rect x="93" y="4" width="1" height="1" fill="#0c0c1a"/><rect x="116" y="0" width="1" height="1" fill="#0c0c1a"/><rect x="101" y="0" width="1" height="1" fill="#263030"/><rect x="72" y="1" width="1" height="1" fill="#0c0c1a"/><rect x="41" y="9" width="1" height="1" fill="#12122a"/><rect x="101" y="9" width="1" height="1" fill="#0c0c1a"/><rect x="3" y="4" width="1" height="1" fill="#12122a"/><rect x="112" y="6" width="1" height="1" fill="#2c2c46"/><rect x="36" y="6" width="1" height="1" fill="#263030"/><rect x="71" y="0" width="1" height="1" fill="#0c0c1a"/><rect x="78" y="2" width="1" height="1" fill="#2c2c46"/><rect x="0" y="5" width="1" height="1" fill="#0c0c1a"/><rect x="123" y="7" width="1" height="1" fill="#12122a"/><rect x="111" y="3" width="1" height="1" fill="#12122a"/><rect x="29" y="6" width="1" height="1" fill="#12122a"/><rect x="0" y="3" width="1" height="1" fill="#0c0c1a"/><rect x="69" y="7" width="1" height="1" fill="#0c0c1a"/><rect x="57" y="6" width="1" height="1" fill="#0c0c1a"/><rect x="75" y="1" width="1" height="1" fill="#0c0c1a"/><rect x="21" y="7" width="1" height="1" fill="#2c2c46"/><rect x="50" y="9" width="1" height="1" fill="#12122a"/><rect x="54" y="8" width="1" height="1" fill="#263030"/><rect x="0" y="7" width="1" height="1" fill="#2c2c46"/><rect x="6" y="1" width="1" height="1" fill="#2c2c46"/><rect x="83" y="0" width="1" height="1" fill="#2c2c46"/><rect x="20" y="6" width="1" height="1" fill="#0c0c1a"/><rect x="34" y="9" width="1" height="1" fill="#0c0c1a"/><rect x="49" y="8" width="1" height="1" fill="#0c0c1a"/><rect x="63" y="7" width="1" height="1" fill="#12122a"/><rect x="112" y="1" width="1" height="1" fill="#0c0c1a"/><rect x="124" y="1" width="1" height="1" fill="#263030"/><rect x="11" y="9" width="1" height="1" fill="#2c2c46"/><rect x="43" y="9" width="1" height="1" fill="#0c0c1a"/><rect x="121" y="9" width="1" height="1" fill="#2c2c46"/><rect x="61" y="4" width="1" height="1" fill="#263030"/><rect x="8" y="4" width="1" height="1" fill="#12122a"/><rect x="45" y="2" width="1" height="1" fill="#2c2c46"/><rect x="52" y="5" width="1" height="1" fill="#12122a"/><rect x="80" y="0" width="1" height="1" fill="#263030"/><rect x="75" y="6" width="1" height="1" fill="#2c2c46"/><rect x="8" y="9" width="1" height="1" fill="#0c0c1a"/><rect x="83" y="3" width="1" height="1" fill="#263030"/><rect x="96" y="3" width="1" height="1" fill="#12122a"/><rect x="56" y="0" width="1" height="1" fill="#0c0c1a"/><rect x="40" y="6" width="1" height="1" fill="#0c0c1a"/><rect x="28" y="1" width="1" height="1" fill="#0c0c1a"/><rect x="13" y="2" width="1" height="1" fill="#0c0c1a"/><rect x="99" y="8" width="1" height="1" fill="#2c2c46"/><rect x="57" y="9" width="1" height="1" fill="#0c0c1a"/><rect x="45" y="1" width="1" height="1" fill="#263030"/><rect x="15" y="1" width="1" height="1" fill="#0c0c1a"/><rect x="42" y="6" width="1" height="1" fill="#0c0c1a"/><rect x="35" y="1" width="1" height="1" fill="#0c0c1a"/><rect x="95" y="2" width="1" height="1" fill="#0c0c1a"/><rect x="100" y="9" width="1" height="1" fill="#0c0c1a"/><rect x="109" y="6" width="1" height="1" fill="#2c2c46"/><rect x="91" y="7" width="1" height="1" fill="#2c2c46"/><rect x="7" y="0" width="1" height="1" fill="#12122a"/><rect x="123" y="6" width="1" height="1" fill="#0c0c1a"/><rect x="115" y="1" width="1" height="1" fill="#2c2c46"/><rect x="25" y="2" width="1" height="1" fill="#0c0c1a"/><rect x="107" y="4" width="1" height="1" fill="#0c0c1a"/><rect x="58" y="4" width="1" height="1" fill="#12122a"/><rect x="76" y="4" width="1" height="1" fill="#12122a"/><rect x="49" y="9" width="1" height="1" fill="#2c2c46"/><rect x="117" y="5" width="1" height="1" fill="#12122a"/><rect x="62" y="6" width="1" height="1" fill="#0c0c1a"/><rect x="9" y="9" width="1" height="1" fill="#12122a"/><rect x="95" y="8" width="1" height="1" fill="#0c0c1a"/><rect x="23" y="6" width="1" height="1" fill="#2c2c46"/><rect x="28" y="4" width="1" height="1" fill="#0c0c1a"/><rect x="29" y="6" width="1" height="1" fill="#2c2c46"/><rect x="32" y="0" width="1" height="1" fill="#0c0c1a"/><rect x="118" y="7" width="1" height="1" fill="#263030"/><rect x="69" y="8" width="1" height="1" fill="#0c0c1a"/><rect x="124" y="6" width="1" height="1" fill="#0c0c1a"/><rect x="110" y="1" width="1" height="1" fill="#2c2c46"/><rect x="49" y="0" width="1" height="1" fill="#12122a"/><rect x="102" y="0" width="1" height="1" fill="#12122a"/><rect x="104" y="5" width="1" height="1" fill="#12122a"/><rect x="45" y="3" width="1" height="1" fill="#0c0c1a"/><rect x="31" y="0" width="1" height="1" fill="#263030"/><rect x="23" y="0" width="1" height="1" fill="#263030"/><rect x="22" y="9" width="1" height="1" fill="#0c0c1a"/><rect x="47" y="9" width="1" height="1" fill="#12122a"/><rect x="32" y="2" width="1" height="1" fill="#263030"/><rect x="99" y="5" width="1" height="1" fill="#12122a"/><rect x="88" y="3" width="1" height="1" fill="#0c0c1a"/><rect x="89" y="6" width="1" height="1" fill="#263030"/><rect x="38" y="3" width="1" height="1" fill="#12122a"/><rect x="98" y="6" width="1" height="1" fill="#0c0c1a"/><rect x="104" y="7" width="1" height="1" fill="#263030"/><rect x="4" y="3" width="1" height="1" fill="#263030"/><rect x="19" y="7" width="1" height="1" fill="#263030"/><rect x="5" y="2" width="1" height="1" fill="#0c0c1a"/><rect x="60" y="0" width="1" height="1" fill="#0c0c1a"/><rect x="77" y="4" width="1" height="1" fill="#0c0c1a"/><rect x="59" y="2" width="1" height="1" fill="#0c0c1a"/><rect x="29" y="2" width="1" height="1" fill="#0c0c1a"/><rect x="106" y="2" width="1" height="1" fill="#2c2c46"/><rect x="1" y="6" width="1" height="1" fill="#263030"/><rect x="92" y="2" width="1" height="1" fill="#12122a"/><rect x="20" y="6" width="1" height="1" fill="#2c2c46"/><rect x="36" y="8" width="1" height="1" fill="#2c2c46"/><rect x="11" y="8" width="1" height="1" fill="#0c0c1a"/><rect x="4" y="1" width="1" height="1" fill="#0c0c1a"/><rect x="53" y="0" width="1" height="1" fill="#2c2c46"/><rect x="120" y="0" width="1" height="1" fill="#2c2c46"/><rect x="87" y="7" width="1" height="1" fill="#12122a"/><rect x="95" y="0" width="1" height="1" fill="#0c0c1a"/><rect x="79" y="3" width="1" height="1" fill="#0c0c1a"/><rect x="57" y="7" width="1" height="1" fill="#0c0c1a"/><rect x="30" y="1" width="1" height="1" fill="#12122a"/><rect x="114" y="1" width="1" height="1" fill="#263030"/><rect x="33" y="1" width="1" height="1" fill="#12122a"/><rect x="109" y="5" width="1" height="1" fill="#263030"/><rect x="112" y="8" width="1" height="1" fill="#0c0c1a"/><rect x="13" y="9" width="1" height="1" fill="#2c2c46"/><rect x="31" y="3" width="1" height="1" fill="#2c2c46"/><rect x="53" y="6" width="1" height="1" fill="#0c0c1a"/><rect x="46" y="2" width="1" height="1" fill="#0c0c1a"/><rect x="66" y="5" width="1" height="1" fill="#2c2c46"/><rect x="15" y="8" width="1" height="1" fill="#0c0c1a"/><rect x="114" y="5" width="1" height="1" fill="#12122a"/><rect x="93" y="4" width="1" height="1" fill="#12122a"/><rect x="56" y="4" width="1" height="1" fill="#12122a"/><rect x="9" y="6" width="1" height="1" fill="#12122a"/><rect x="100" y="2" width="1" height="1" fill="#12122a"/><rect x="18" y="9" width="1" height="1" fill="#12122a"/><rect x="111" y="3" width="1" height="1" fill="#0c0c1a"/><rect x="21" y="1" width="1" height="1" fill="#2c2c46"/><rect x="80" y="7" width="1" height="1" fill="#2c2c46"/><rect x="37" y="5" width="1" height="1" fill="#2c2c46"/><rect x="1" y="9" width="1" height="1" fill="#0c0c1a"/><rect x="11" y="2" width="1" height="1" fill="#2c2c46"/><rect x="88" y="9" width="1" height="1" fill="#263030"/><rect x="0" y="5" width="1" height="1" fill="#2c2c46"/><rect x="85" y="8" width="1" height="1" fill="#0c0c1a"/><rect x="16" y="6" width="1" height="1" fill="#0c0c1a"/><rect x="63" y="1" width="1" height="1" fill="#12122a"/><rect x="102" y="5" width="1" height="1" fill="#263030"/><rect x="117" y="9" width="1" height="1" fill="#0c0c1a"/><rect x="26" y="7" width="1" height="1" fill="#0c0c1a"/><rect x="78" y="4" width="1" height="1" fill="#0c0c1a"/><rect x="19" y="4" width="1" height="1" fill="#0c0c1a"/><rect x="115" y="9" width="1" height="1" fill="#12122a"/><rect x="35" y="3" width="1" height="1" fill="#2c2c46"/><rect x="63" y="7" width="1" height="1" fill="#12122a"/><rect x="65" y="7" width="1" height="1" fill="#12122a"/><rect x="33" y="3" width="1" height="1" fill="#0c0c1a"/><rect x="77" y="6" width="1" height="1" fill="#2c2c46"/><rect x="71" y="0" width="1" height="1" fill="#12122a"/><rect x="84" y="4" width="1" height="1" fill="#2c2c46"/><rect x="87" y="6" width="1" height="1" fill="#0c0c1a"/><rect x="55" y="5" width="1" height="1" fill="#12122a"/><rect x="13" y="1" width="1" height="1" fill="#12122a"/><rect x="126" y="7" width="1" height="1" fill="#0c0c1a"/><rect x="118" y="8" width="1" height="1" fill="#0c0c1a"/><rect x="42" y="9" width="1" height="1" fill="#0c0c1a"/><rect x="73" y="3" width="1" height="1" fill="#12122a"/><rect x="94" y="1" width="1" height="1" fill="#263030"/><rect x="120" y="3" width="1" height="1" fill="#2c2c46"/><rect x="97" y="2" width="1" height="1" fill="#12122a"/><rect x="78" y="4" width="1" height="1" fill="#2c2c46"/><rect x="17" y="9" width="1" height="1" fill="#0c0c1a"/><rect x="28" y="4" width="1" height="1" fill="#0c0c1a"/><rect x="3" y="4" width="1" height="1" fill="#0c0c1a"/><rect x="123" y="2" width="1" height="1" fill="#263030"/><rect x="69" y="4" width="1" height="1" fill="#0c0c1a"/><rect x="76" y="0" width="1" height="1" fill="#263030"/><rect x="41" y="8" width="1" height="1" fill="#12122a"/><rect x="45" y="7" width="1" height="1" fill="#12122a"/><rect x="123" y="7" width="1" height="1" fill="#0c0c1a"/><rect x="89" y="0" width="1" height="1" fill="#12122a"/><rect x="109" y="3" width="1" height="1" fill="#263030"/><rect x="55" y="1" width="1" height="1" fill="#12122a"/><rect x="46" y="9" width="1" height="1" fill="#0c0c1a"/><rect x="24" y="9" width="1" height="1" fill="#0c0c1a"/><rect x="115" y="6" width="1" height="1" fill="#0c0c1a"/><rect x="118" y="2" width="1" height="1" fill="#0c0c1a"/><rect x="102" y="7" width="1" height="1" fill="#263030"/><rect x="12" y="7" width="1" height="1" fill="#0c0c1a"/><rect x="29" y="4" width="1" height="1" fill="#0c0c1a"/><rect x="4" y="9" width="1" height="1" fill="#2c2c46"/><rect x="39" y="0" width="1" height="1" fill="#263030"/><rect x="68" y="0" width="1" height="1" fill="#0c0c1a"/><rect x="73" y="2" width="1" height="1" fill="#2c2c46"/><rect x="21" y="0" width="1" height="1" fill="#0c0c1a"/><rect x="32" y="8" width="1" height="1" fill="#263030"/><rect x="53" y="0" width="1" height="1" fill="#0c0c1a"/><rect x="81" y="1" width="1" height="1" fill="#12122a"/><rect x="75" y="8" width="1" height="1" fill="#2c2c46"/><rect x="41" y="5" width="1" height="1" fill="#263030"/><rect x="67" y="2" width="1" height="1" fill="#0c0c1a"/><rect x="62" y="8" width="1" height="1" fill="#12122a"/><rect x="29" y="4" width="1" height="1" fill="#2c2c46"/><rect x="97" y="4" width="1" height="1" fill="#263030"/><rect x="73" y="4" width="1" height="1" fill="#12122a"/><rect x="93" y="5" width="1" height="1" fill="#263030"/><rect x="34" y="1" width="1" height="1" fill="#0c0c1a"/><rect x="48" y="4" width="1" height="1" fill="#0c0c1a"/><rect x="6" y="6" width="1" height="1" fill="#0c0c1a"/><rect x="39" y="2" width="1" height="1" fill="#263030"/><rect x="59" y="1" width="1" height="1" fill="#12122a"/><rect x="107" y="4" width="1" height="1" fill="#0c0c1a"/><rect x="37" y="4" width="1" height="1" fill="#0c0c1a"/><rect x="22" y="4" width="1" height="1" fill="#0c0c1a"/><rect x="99" y="4" width="1" height="1" fill="#2c2c46"/><rect x="3" y="7" width="1" height="1" fill="#263030"/><rect x="2" y="1" width="1" height="1" fill="#0c0c1a"/><rect x="45" y="3" width="1" height="1" fill="#12122a"/><rect x="43" y="2" width="1" height="1" fill="#0c0c1a"/><rect x="15" y="8" width="1" height="1" fill="#263030"/><rect x="67" y="7" width="1" height="1" fill="#2c2c46"/><rect x="111" y="2" width="1" height="1" fill="#0c0c1a"/><rect x="90" y="5" width="1" height="1" fill="#0c0c1a"/><rect x="29" y="8" width="1" height="1" fill="#0c0c1a"/><rect x="101" y="7" width="1" height="1" fill="#2c2c46"/><rect x="41" y="1" width="1" height="1" fill="#263030"/><rect x="81" y="5" width="1" height="1" fill="#12122a"/><rect x="83" y="6" width="1" height="1" fill="#0c0c1a"/><rect x="21" y="8" width="1" height="1" fill="#2c2c46"/><rect x="6" y="7" width="1" height="1" fill="#2c2c46"/><rect x="116" y="0" width="1" height="1" fill="#12122a"/><rect x="37" y="7" width="1" height="1" fill="#263030"/><rect x="45" y="6" width="1" height="1" fill="#0c0c1a"/><rect x="17" y="8" width="1" height="1" fill="#0c0c1a"/><rect x="50" y="6" width="1" height="1" fill="#263030"/><rect x="8" y="9" width="1" height="1" fill="#12122a"/><rect x="4" y="4" width="1" height="1" fill="#263030"/><rect x="98" y="7" width="1" height="1" fill="#12122a"/><rect x="77" y="5" width="1" height="1" fill="#0c0c1a"/><rect x="38" y="7" width="1" height="1" fill="#12122a"/><rect x="84" y="1" width="1" height="1" fill="#0c0c1a"/><rect x="121" y="3" width="1" height="1" fill="#0c0c1a"/><rect x="54" y="0" width="1" height="1" fill="#12122a"/><rect x="126" y="2" width="1" height="1" fill="#2c2c46"/><rect x="125" y="5" width="1" height="1" fill="#0c0c1a"/><rect x="98" y="0" width="1" height="1" fill="#263030"/><rect x="38" y="4" width="1" height="1" fill="#2c2c46"/><rect x="75" y="9" width="1" height="1" fill="#12122a"/><rect x="100" y="5" width="1" height="1" fill="#12122a"/><rect x="103" y="3" width="1" height="1" fill="#12122a"/><rect x="61" y="5" width="1" height="1" fill="#0c0c1a"/><rect x="0" y="8" width="1" height="1" fill="#12122a"/><rect x="6" y="9" width="1" height="1" fill="#263030"/><rect x="22" y="2" width="1" height="1" fill="#2c2c46"/><rect x="94" y="7" width="1" height="1" fill="#2c2c46"/><rect x="30" y="5" width="1" height="1" fill="#2c2c46"/><rect x="1" y="1" width="1" height="1" fill="#2c2c46"/><rect x="51" y="8" width="1" height="1" fill="#0c0c1a"/><rect x="7" y="6" width="1" height="1" fill="#0c0c1a"/><rect x="6" y="5" width="1" height="1" fill="#12122a"/><rect x="4" y="0" width="1" height="1" fill="#2c2c46"/><rect x="81" y="9" width="1" height="1" fill="#2c2c46"/><rect x="43" y="3" width="1" height="1" fill="#2c2c46"/><rect x="18" y="1" width="1" height="1" fill="#2c2c46"/><rect x="28" y="9" width="1" height="1" fill="#0c0c1a"/><rect x="40" y="3" width="1" height="1" fill="#12122a"/><rect x="92" y="5" width="1" height="1" fill="#12122a"/><rect x="109" y="2" width="1" height="1" fill="#12122a"/><rect x="90" y="8" width="1" height="1" fill="#0c0c1a"/><rect x="55" y="0" width="1" height="1" fill="#2c2c46"/><rect x="126" y="1" width="1" height="1" fill="#263030"/><rect x="0" y="7" width="1" height="1" fill="#0c0c1a"/><rect x="50" y="8" width="1" height="1" fill="#0c0c1a"/><rect x="33" y="3" width="1" height="1" fill="#0c0c1a"/><rect x="125" y="5" width="1" height="1" fill="#2c2c46"/><rect x="111" y="6" width="1" height="1" fill="#12122a"/><rect x="127" y="9" width="1" height="1" fill="#0c0c1a"/><rect x="98" y="6" width="1" height="1" fill="#12122a"/><rect x="63" y="7" width="1" height="1" fill="#0c0c1a"/><rect x="107" y="9" width="1" height="1" fill="#263030"/><rect x="115" y="4" width="1" height="1" fill="#2c2c46"/><rect x="105" y="1" width="1" height="1" fill="#2c2c46"/><rect x="0" y="0" width="1" height="1" fill="#2c2c46"/><rect x="89" y="0" width="1" height="1" fill="#2c2c46"/><rect x="114" y="1" width="1" height="1" fill="#263030"/><rect x="106" y="0" width="1" height="1" fill="#2c2c46"/><rect x="125" y="2" width="1" height="1" fill="#2c2c46"/><rect x="97" y="2" width="1" height="1" fill="#0c0c1a"/><rect x="16" y="2" width="1" height="1" fill="#0c0c1a"/><rect x="39" y="8" width="1" height="1" fill="#0c0c1a"/><rect x="38" y="3" width="1" height="1" fill="#12122a"/><rect x="19" y="2" width="1" height="1" fill="#263030"/><rect x="35" y="8" width="1" height="1" fill="#2c2c46"/><rect x="87" y="5" width="1" height="1" fill="#263030"/><rect x="34" y="7" width="1" height="1" fill="#2c2c46"/><rect x="84" y="2" width="1" height="1" fill="#2c2c46"/><rect x="23" y="3" width="1" height="1" fill="#12122a"/><rect x="0" y="9" width="1" height="1" fill="#2c2c46"/><rect x="76" y="1" width="1" height="1" fill="#12122a"/><rect x="69" y="2" width="1" height="1" fill="#0c0c1a"/><rect x="122" y="1" width="1" height="1" fill="#0c0c1a"/><rect x="49" y="4" width="1" height="1" fill="#2c2c46"/><rect x="4" y="7" width="1" height="1" fill="#2c2c46"/><rect x="16" y="9" width="1" height="1" fill="#2c2c46"/><rect x="15" y="4" width="1" height="1" fill="#0c0c1a"/><rect x="117" y="5" width="1" height="1" fill="#12122a"/><rect x="57" y="8" width="1" height="1" fill="#2c2c46"/><rect x="75" y="9" width="1" height="1" fill="#12122a"/><rect x="122" y="3" width="1" height="1" fill="#12122a"/><rect x="60" y="9" width="1" height="1" fill="#0c0c1a"/><rect x="82" y="4" width="1" height="1" fill="#0c0c1a"/><rect x="64" y="9" width="1" height="1" fill="#2c2c46"/><rect x="79" y="6" width="1" height="1" fill="#0c0c1a"/><rect x="2" y="9" width="1" height="1" fill="#12122a"/><rect x="46" y="1" width="1" height="1" fill="#2c2c46"/><rect x="24" y="0" width="1" height="1" fill="#2c2c46"/><rect x="66" y="5" width="1" height="1" fill="#263030"/><rect x="44" y="1" width="1" height="1" fill="#0c0c1a"/><rect x="6" y="0" width="1" height="1" fill="#12122a"/><rect x="58" y="5" width="1" height="1" fill="#12122a"/><rect x="78" y="9" width="1" height="1" fill="#263030"/><rect x="86" y="7" width="1" height="1" fill="#2c2c46"/><rect x="126" y="5" width="1" height="1" fill="#2c2c46"/><rect x="84" y="4" width="1" height="1" fill="#2c2c46"/><rect x="1" y="3" width="1" height="1" fill="#0c0c1a"/><rect x="54" y="4" width="1" height="1" fill="#0c0c1a"/><rect x="77" y="2" width="1" height="1" fill="#0c0c1a"/><rect x="55" y="1" width="1" height="1" fill="#0c0c1a"/><rect x="36" y="2" width="1" height="1" fill="#0c0c1a"/><rect x="73" y="8" width="1" height="1" fill="#263030"/><rect x="63" y="1" width="1" height="1" fill="#2c2c46"/><rect x="79" y="2" width="1" height="1" fill="#2c2c46"/><rect x="29" y="6" width="1" height="1" fill="#0c0c1a"/><rect x="92" y="5" width="1" height="1" fill="#2c2c46"/><rect x="92" y="7" width="1" height="1" fill="#12122a"/><rect x="127" y="3" width="1" height="1" fill="#0c0c1a"/><rect x="19" y="9" width="1" height="1" fill="#0c0c1a"/><rect x="24" y="3" width="1" height="1" fill="#12122a"/><rect x="50" y="9" width="1" height="1" fill="#12122a"/><rect x="32" y="9" width="1" height="1" fill="#2c2c46"/><rect x="18" y="8" width="1" height="1" fill="#2c2c46"/><rect x="88" y="6" width="1" height="1" fill="#2c2c46"/><rect x="27" y="2" width="1" height="1" fill="#2c2c46"/><rect x="8" y="6" width="1" height="1" fill="#0c0c1a"/><rect x="111" y="1" width="1" height="1" fill="#12122a"/><rect x="86" y="0" width="1" height="1" fill="#0c0c1a"/><rect x="64" y="6" width="1" height="1" fill="#0c0c1a"/><rect x="74" y="6" width="1" height="1" fill="#12122a"/><rect x="96" y="4" width="1" height="1" fill="#12122a"/><rect x="87" y="0" width="1" height="1" fill="#263030"/><rect x="126" y="1" width="1" height="1" fill="#12122a"/><rect x="13" y="2" width="1" height="1" fill="#263030"/><rect x="53" y="0" width="1" height="1" fill="#12122a"/><rect x="65" y="3" width="1" height="1" fill="#0c0c1a"/><rect x="20" y="5" width="1" height="1" fill="#263030"/><rect x="22" y="9" width="1" height="1" fill="#2c2c46"/><rect x="89" y="4" width="1" height="1" fill="#12122a"/><rect x="96" y="0" width="1" height="1" fill="#12122a"/><rect x="99" y="8" width="1" height="1" fill="#263030"/><rect x="117" y="2" width="1" height="1" fill="#0c0c1a"/><rect x="16" y="6" width="1" height="1" fill="#12122a"/><rect x="64" y="8" width="1" height="1" fill="#0c0c1a"/><rect x="3" y="5" width="1" height="1" fill="#2c2c46"/><rect x="78" y="5" width="1" height="1" fill="#0c0c1a"/><rect x="13" y="7" width="1" height="1" fill="#0c0c1a"/></pattern></defs><rect x="0" y="12" width="1440" height="4" fill="#535353"/><rect x="0" y="10" width="1440" height="2" fill="#4a4a52"/><rect x="0" y="7" width="1440" height="3" fill="#22223a"/><rect x="0" y="0" width="1440" height="7" fill="#191930"/><rect x="0" y="0" width="1440" height="16" fill="url(#nz23)"/><rect x="0" y="8" width="8" height="8" fill="#c8c8c8"/><rect x="0" y="4" width="4" height="4" fill="#555"/><rect x="1432" y="8" width="8" height="8" fill="#7a7a7a"/></svg>
<div class="r" style="left:1680px;top:984px;width:240px;height:8px;background:#ffffff;"></div>
<div class="r" style="left:250px;top:96px;width:1422px;height:885px;background:#0b0b0b;"></div>
<div class="r" style="left:252px;top:97px;width:1416px;height:25px;background:#1a1a1a;"></div>
<svg class="s" style="left:258px;top:100px" width="122" height="20" viewBox="0 0 122 20"><text x="2.5" y="15" textLength="116" lengthAdjust="spacingAndGlyphs" style="font-family:'Liberation Sans';font-weight:700;font-size:14.2px;fill:#e6e6e6;letter-spacing:0">MASCHINE</text></svg>
<div class="r" style="left:399px;top:100px;width:1px;height:20px;background:#262626;"></div>
<div class="r" style="left:427px;top:100px;width:1px;height:20px;background:#262626;"></div>
<div class="r" style="left:455px;top:100px;width:1px;height:20px;background:#262626;"></div>
<div class="r" style="left:482px;top:100px;width:1px;height:20px;background:#262626;"></div>
<svg class="s" style="left:404px;top:106px;" width="20" height="10" viewBox="0 0 20 10"><circle cx="4.75" cy="4.8" r="1.4" fill="#8a8a8a"/><circle cx="9.7" cy="4.8" r="1.4" fill="#8a8a8a"/><circle cx="14.4" cy="4.8" r="1.4" fill="#8a8a8a"/></svg>
<svg class="s" style="left:432px;top:102px;" width="18" height="18" viewBox="0 0 18 18"><rect x="3.6" y="2.5" width="1.7" height="12.3" fill="#eee"/><rect x="7" y="2.5" width="1.7" height="12.3" fill="#eee"/><path d="M10.8 2.6 L14.2 14.8" stroke="#eee" stroke-width="1.7"/></svg>
<svg class="s" style="left:459px;top:102px;" width="20" height="18" viewBox="0 0 20 18"><g fill="#9a9a9a"><rect x="4.3" y="2.5" width="1.5" height="12.5"/><rect x="2.3" y="8.8" width="5.5" height="1.8"/><rect x="9.2" y="2.5" width="1.5" height="12.5"/><rect x="7.2" y="4.5" width="5.5" height="1.8"/><rect x="14.2" y="2.5" width="1.5" height="12.5"/><rect x="12.2" y="11.5" width="5.5" height="1.8"/></g></svg>
<svg class="s" style="left:722px;top:100px;" width="100" height="20" viewBox="0 0 100 20"><g fill="#9a9a9a"><rect x="3" y="4.3" width="2" height="11.3"/><path d="M5 10 L13.8 4.3 L13.8 15.6 Z"/><path d="M30 4.7 L39.7 10.1 L30 15.6 Z"/><circle cx="59.4" cy="9.75" r="5.6"/></g><path d="M81.5 13.9 L80.3 13.9 A3.9 3.9 0 0 1 80.3 6.1 L89.4 6.1 A3.9 3.9 0 0 1 89.4 13.9 L87 13.9" fill="none" stroke="#f0f0f0" stroke-width="1.8"/><path d="M83.6 14.8 L88.2 11.4 L88.2 14.8 Z" fill="#f0f0f0"/></svg>
<div class="t" style="left:833.60px;top:106.00px;font-size:7.2px;color:#6e6e6e;font-weight:700;">LINK</div>
<div class="r" style="left:867px;top:100px;width:1px;height:20px;background:#262626;"></div>
<div class="r" style="left:896px;top:100px;width:1px;height:20px;background:#262626;"></div>
<div class="r" style="left:962px;top:100px;width:1px;height:20px;background:#262626;"></div>
<div class="r" style="left:1033px;top:100px;width:1px;height:20px;background:#262626;"></div>
<div class="r" style="left:1089px;top:100px;width:1px;height:20px;background:#262626;"></div>
<div class="r" style="left:1155px;top:100px;width:1px;height:20px;background:#262626;"></div>
<div class="r" style="left:1184px;top:100px;width:1px;height:20px;background:#262626;"></div>
<div class="r" style="left:1258px;top:100px;width:1px;height:20px;background:#262626;"></div>
<svg class="s" style="left:874px;top:102px;" width="16" height="16" viewBox="0 0 16 16"><path d="M5.5 2.5 L10 2.5 L13.2 13.7 L2.3 13.7 Z" fill="#9a9a9a"/><path d="M4 3 L10.5 10.5" stroke="#1a1a1a" stroke-width="1.6"/><path d="M4.3 2.8 L10.3 10" stroke="#9a9a9a" stroke-width="0.8"/></svg>
<div class="t" style="left:907.00px;top:105.00px;font-size:9.7px;color:#d8d8d8;font-weight:400;-webkit-text-stroke:0.3px #d8d8d8;">79.00</div>
<div class="t" style="left:938.60px;top:106.00px;font-size:7.4px;color:#6e6e6e;font-weight:700;">BPM</div>
<div class="t" style="left:971.30px;top:105.00px;font-size:9.6px;color:#d8d8d8;font-weight:400;-webkit-text-stroke:0.3px #d8d8d8;">0.0 %</div>
<div class="t" style="left:1000.80px;top:106.00px;font-size:7.4px;color:#6e6e6e;font-weight:700;">SWING</div>
<div class="t" style="left:1041.30px;top:105.00px;font-size:9.8px;color:#d8d8d8;font-weight:400;-webkit-text-stroke:0.3px #d8d8d8;">4 &nbsp;/ &nbsp;4</div>
<div class="t" style="left:1071.80px;top:106.00px;font-size:7px;color:#6e6e6e;font-weight:700;">SIG</div>
<div class="t" style="left:1096.00px;top:106.00px;font-size:9.3px;color:#d8d8d8;font-weight:400;-webkit-text-stroke:0.3px #d8d8d8;">18:1:1</div>
<div class="t" style="left:1126.60px;top:107.00px;font-size:7.1px;color:#6e6e6e;font-weight:700;">BARS</div>
<svg class="s" style="left:1160px;top:104px;" width="22" height="12" viewBox="0 0 22 12"><path d="M3 6 L10 6" stroke="#9a9a9a" stroke-width="1.8"/><path d="M8 2.5 L12 6 L8 9.5 Z" fill="#9a9a9a"/><rect x="13" y="5.2" width="1.6" height="1.6" fill="#9a9a9a"/><rect x="16" y="5.2" width="1.6" height="1.6" fill="#9a9a9a"/><rect x="19" y="5.2" width="1.6" height="1.6" fill="#9a9a9a"/></svg>
<div class="t" style="left:1197.60px;top:105.00px;font-size:10px;color:#d8d8d8;font-weight:400;-webkit-text-stroke:0.3px #d8d8d8;">1/16</div>
<div class="t" style="left:1229.50px;top:106.00px;font-size:7.3px;color:#6e6e6e;font-weight:700;">SYNC</div>
<svg class="s" style="left:1264px;top:102px;" width="18" height="16" viewBox="0 0 18 16"><path d="M2.3 1.4 L15.2 1.4 L15.2 14.3 L2.3 14.3 Z" fill="#9a9a9a"/><g fill="#1a1a1a"><rect x="5.3" y="1.4" width="1" height="8"/><rect x="8.3" y="1.4" width="1" height="8"/><rect x="11.4" y="1.4" width="1" height="8"/></g></svg>
<div class="r" style="left:1520px;top:100px;width:1px;height:20px;background:#262626;"></div>
<div class="r" style="left:1602px;top:100px;width:1px;height:20px;background:#262626;"></div>
<div class="r" style="left:1630px;top:100px;width:1px;height:20px;background:#262626;"></div>
<div class="r" style="left:1528px;top:106px;width:38px;height:4px;background:#2a2a2a;"></div>
<div class="r" style="left:1528px;top:111px;width:38px;height:4px;background:#2a2a2a;"></div>
<div class="r" style="left:1570px;top:106px;width:10px;height:4px;background:#222;"></div>
<div class="r" style="left:1570px;top:111px;width:10px;height:4px;background:#222;"></div>
<div class="r" style="left:1567px;top:104px;width:2px;height:12px;background:#f0f0f0;"></div>
<svg class="s" style="left:1584px;top:103px;" width="12" height="16" viewBox="0 0 12 16"><g fill="#666"><rect x="1" y="1" width="8.75" height="2"/><rect x="1" y="3.5" width="8.75" height="2"/><rect x="1" y="6" width="8.75" height="2"/></g><rect x="1" y="8.3" width="8.75" height="2.2" fill="#f0f0f0"/><text x="5.4" y="15" text-anchor="middle" style="font-family:'Liberation Sans';font-size:4.6px;font-weight:700;fill:#ddd">CPU</text></svg>
<svg class="s" style="left:1608px;top:103px;" width="16" height="16" viewBox="0 0 16 16"><path d="M5.2 4.5 A5 5 0 1 0 10.8 4.5" fill="none" stroke="#f0f0f0" stroke-width="1.6"/><rect x="7.2" y="2" width="1.6" height="6" fill="#f0f0f0"/></svg>
<svg class="s" style="left:1638px;top:102px;" width="22" height="16" viewBox="0 0 22 16"><path d="M3.8 12.8 L3.8 4.5 Q4 3 5.5 3 L9 3 L16 12.5 L18.2 12.5 L18.2 3" fill="none" stroke="#555" stroke-width="1.6"/></svg>
<div class="r" style="left:252px;top:122px;width:1416px;height:3px;background:#0b0b0b;"></div>
<div class="r" style="left:252px;top:125px;width:256px;height:856px;background:#181818;"></div>
<div class="t" style="left:263.00px;top:134.00px;font-size:11px;color:#dcdcdc;font-weight:400;">Library</div>
<div class="r" style="left:261px;top:148px;width:38px;height:2px;background:#bdbdbd;"></div>
<div class="t" style="left:307.50px;top:134.00px;font-size:10.6px;color:#8a8a8a;font-weight:400;">Files</div>
<svg class="s" style="left:264px;top:166px;" width="18" height="18" viewBox="0 0 18 18"><rect x="3" y="7.5" width="11.5" height="8.2" fill="none" stroke="#e0e0e0" stroke-width="1.6"/><rect x="4.2" y="4.8" width="9" height="1.6" fill="#e0e0e0"/><rect x="5.6" y="2.7" width="6.2" height="1.5" fill="#e0e0e0"/></svg>
<svg class="s" style="left:290px;top:166px;" width="20" height="18" viewBox="0 0 20 18"><rect x="2.0" y="6.4" width="2.6" height="2.6" fill="#9a9a9a"/><rect x="2.0" y="10.6" width="2.6" height="2.6" fill="#9a9a9a"/><rect x="6.4" y="6.4" width="2.6" height="2.6" fill="#9a9a9a"/><rect x="6.4" y="10.6" width="2.6" height="2.6" fill="#9a9a9a"/><rect x="10.8" y="6.4" width="2.6" height="2.6" fill="#9a9a9a"/><rect x="10.8" y="10.6" width="2.6" height="2.6" fill="#9a9a9a"/><rect x="15.2" y="6.4" width="2.6" height="2.6" fill="#9a9a9a"/><rect x="15.2" y="10.6" width="2.6" height="2.6" fill="#9a9a9a"/></svg>
<svg class="s" style="left:320px;top:166px;" width="18" height="18" viewBox="0 0 18 18"><rect x="2.00" y="2.50" width="2.3" height="2.3" fill="#9a9a9a"/><rect x="2.00" y="6.15" width="2.3" height="2.3" fill="#9a9a9a"/><rect x="2.00" y="9.80" width="2.3" height="2.3" fill="#9a9a9a"/><rect x="2.00" y="13.45" width="2.3" height="2.3" fill="#9a9a9a"/><rect x="5.65" y="2.50" width="2.3" height="2.3" fill="#9a9a9a"/><rect x="5.65" y="6.15" width="2.3" height="2.3" fill="#9a9a9a"/><rect x="5.65" y="9.80" width="2.3" height="2.3" fill="#9a9a9a"/><rect x="5.65" y="13.45" width="2.3" height="2.3" fill="#9a9a9a"/><rect x="9.30" y="2.50" width="2.3" height="2.3" fill="#9a9a9a"/><rect x="9.30" y="6.15" width="2.3" height="2.3" fill="#9a9a9a"/><rect x="9.30" y="9.80" width="2.3" height="2.3" fill="#9a9a9a"/><rect x="9.30" y="13.45" width="2.3" height="2.3" fill="#9a9a9a"/><rect x="12.95" y="2.50" width="2.3" height="2.3" fill="#9a9a9a"/><rect x="12.95" y="6.15" width="2.3" height="2.3" fill="#9a9a9a"/><rect x="12.95" y="9.80" width="2.3" height="2.3" fill="#9a9a9a"/><rect x="12.95" y="13.45" width="2.3" height="2.3" fill="#9a9a9a"/></svg>
<svg class="s" style="left:348px;top:166px;" width="18" height="18" viewBox="0 0 18 18"><rect x="2" y="2.5" width="15" height="14.3" rx="1" fill="#9a9a9a"/><g fill="#181818"><rect x="5.6" y="2.5" width="1.3" height="9"/><rect x="9.2" y="2.5" width="1.3" height="9"/><rect x="12.8" y="2.5" width="1.3" height="9"/></g></svg>
<svg class="s" style="left:377px;top:166px;" width="18" height="18" viewBox="0 0 18 18"><rect x="2.5" y="3.3" width="13.2" height="13.2" rx="1" fill="none" stroke="#9a9a9a" stroke-width="1.9"/><text x="9.1" y="14.4" text-anchor="middle" textLength="10" lengthAdjust="spacingAndGlyphs" style="font-family:'Liberation Sans';font-size:12px;font-weight:700;fill:#9a9a9a">FX</text></svg>
<svg class="s" style="left:405px;top:166px;" width="18" height="18" viewBox="0 0 18 18"><path d="M3.5 11 L3.5 6.3 L14.5 6.3" fill="none" stroke="#9a9a9a" stroke-width="1.6"/><path d="M13 3.2 L16.6 6.3 L13 9.3 Z" fill="#9a9a9a"/><path d="M15.2 9 L15.2 13.4 L4 13.4" fill="none" stroke="#9a9a9a" stroke-width="1.6"/><path d="M5.5 10.4 L2 13.4 L5.5 16.4 Z" fill="#9a9a9a"/></svg>
<svg class="s" style="left:433px;top:166px;" width="18" height="18" viewBox="0 0 18 18"><rect x="2.00" y="5.00" width="1.8" height="9" fill="#9a9a9a"/><rect x="4.95" y="3.25" width="1.8" height="12.5" fill="#9a9a9a"/><rect x="7.90" y="5.75" width="1.8" height="7.5" fill="#9a9a9a"/><rect x="10.85" y="4.00" width="1.8" height="11" fill="#9a9a9a"/><rect x="13.80" y="6.00" width="1.8" height="7" fill="#9a9a9a"/></svg>
<svg class="s" style="left:479px;top:166px;" width="20" height="18" viewBox="0 0 20 18"><rect x="2" y="2.5" width="15" height="14.3" rx="1.3" fill="#9a9a9a"/><circle cx="9.5" cy="7.5" r="2.6" fill="#181818"/><path d="M4 14.5 Q9.5 9.6 15 14.5 Z" fill="#181818"/></svg>
<div class="t" style="left:264.30px;top:207.00px;font-size:13.9px;color:#e8e8e8;font-weight:400;">All Projects</div>
<svg class="s" style="left:479px;top:205px;" width="20" height="16" viewBox="0 0 20 16"><path d="M2 8.3 Q9.8 0.5 17.6 8.3 Q9.8 16.1 2 8.3 Z" fill="#9a9a9a"/><circle cx="9.8" cy="8.3" r="3.1" fill="#181818"/><circle cx="9.8" cy="8.3" r="1.8" fill="#9a9a9a"/></svg>
<svg class="s" style="left:265px;top:244px;" width="10" height="8" viewBox="0 0 10 8"><path d="M2.6 2.4 L8.6 2.4 L5.6 6 Z" fill="#d0d0d0"/></svg>
<div class="t" style="left:280.00px;top:245.00px;font-size:8.6px;color:#9a9a9a;font-weight:400;">TYPES</div>
<div class="t" style="left:268.50px;top:263.00px;font-size:9.5px;color:#9a9a9a;font-weight:400;">Breaks</div>
<div class="t" style="left:311.30px;top:263.00px;font-size:9.5px;color:#9a9a9a;font-weight:400;">Club</div>
<div class="t" style="left:345.40px;top:263.00px;font-size:9.5px;color:#9a9a9a;font-weight:400;">Downbeat</div>
<div class="t" style="left:403.10px;top:263.00px;font-size:9.5px;color:#9a9a9a;font-weight:400;">Drill</div>
<div class="t" style="left:434.20px;top:263.00px;font-size:9.5px;color:#9a9a9a;font-weight:400;">Electro</div>
<div class="t" style="left:268.50px;top:282.00px;font-size:9.5px;color:#9a9a9a;font-weight:400;">Funk &amp; Soul</div>
<div class="t" style="left:333.50px;top:282.00px;font-size:9.5px;color:#9a9a9a;font-weight:400;">Hip Hop</div>
<div class="t" style="left:383.80px;top:282.00px;font-size:9.5px;color:#9a9a9a;font-weight:400;">Jam</div>
<div class="t" style="left:416.50px;top:282.00px;font-size:9.5px;color:#9a9a9a;font-weight:400;">Jazz</div>
<div class="t" style="left:452.00px;top:282.00px;font-size:9.5px;color:#9a9a9a;font-weight:400;">Tutorial</div>
<div class="t" style="left:268.50px;top:301.00px;font-size:9.5px;color:#9a9a9a;font-weight:400;">Worldwide</div>
<svg class="s" style="left:264px;top:330px;" width="18" height="16" viewBox="0 0 18 16"><circle cx="10.3" cy="6.2" r="3.8" fill="none" stroke="#9a9a9a" stroke-width="1.3"/><path d="M7.6 9 L3.4 13.3" stroke="#9a9a9a" stroke-width="1.4"/></svg>
<div class="t" style="left:284.00px;top:335.00px;font-size:9.9px;color:#f0f0f0;font-weight:400;">honor</div>
<svg class="s" style="left:462px;top:333px;" width="10" height="10" viewBox="0 0 10 10"><path d="M3 3 L7.5 7.5 M7.5 3 L3 7.5" stroke="#777" stroke-width="0.9"/></svg>
<svg class="s" style="left:478px;top:330px;" width="16" height="16" viewBox="0 0 16 16"><path d="M8.2 2.3 L9.9 6.4 L14.3 6.7 L10.9 9.5 L12 13.8 L8.2 11.4 L4.4 13.8 L5.5 9.5 L2.1 6.7 L6.5 6.4 Z" fill="#aaa"/></svg>
<div class="r" style="left:261px;top:349px;width:237px;height:1px;background:#2e2e2e;"></div>
<div class="r" style="left:261px;top:361px;width:237px;height:19px;background:#414141;"></div>
<div class="t" style="left:267.00px;top:365.00px;font-size:9.8px;color:#f2f2f2;font-weight:400;-webkit-text-stroke:0.3px #f2f2f2;">Honor</div>
<svg class="s" style="left:458px;top:960px;" width="18" height="18" viewBox="0 0 18 18"><circle cx="8.5" cy="8.3" r="6.4" fill="#a8a8a8"/><rect x="7.6" y="4.3" width="1.8" height="1.8" fill="#181818"/><rect x="7.6" y="7.1" width="1.8" height="4.9" fill="#181818"/></svg>
<div class="t" style="left:481.00px;top:965.00px;font-size:9.2px;color:#a8a8a8;font-weight:400;-webkit-text-stroke:0.3px #a8a8a8;">Edit</div>
<div class="r" style="left:508px;top:125px;width:1px;height:856px;background:#0b0b0b;"></div>
<div class="r" style="left:509px;top:125px;width:25px;height:258px;background:#1f1f1f;"></div>
<svg class="s" style="left:512px;top:128px;" width="20" height="20" viewBox="0 0 20 20"><g fill="#e8e8e8"><rect x="3.5" y="6.6" width="13" height="1.3"/><rect x="3.5" y="11.8" width="13" height="1.3"/><rect x="7" y="3.5" width="1.3" height="13.5"/><rect x="11" y="9.2" width="5.5" height="1.3"/><rect x="9.4" y="9.2" width="1" height="1.3"/></g></svg>
<div class="r" style="left:534px;top:125px;width:1px;height:258px;background:#0e0e0e;"></div>
<div class="r" style="left:535px;top:125px;width:129px;height:39px;background:#1f1f1f;"></div>
<div class="t" style="left:541.80px;top:133.00px;font-size:12.5px;color:#e2e2e2;font-weight:400;">Honor</div>
<svg class="s" style="left:645px;top:133px;" width="10" height="8" viewBox="0 0 10 8"><path d="M2 2.5 L8.5 2.5 L5.25 5.8 Z" fill="#cfcfcf"/></svg>
<div class="r" style="left:535px;top:164px;width:129px;height:1px;background:#121212;"></div>
<div class="r" style="left:535px;top:165px;width:26px;height:18px;background:#ff6a2b;"></div>
<div class="r" style="left:561px;top:165px;width:103px;height:18px;background:#2a2a2a;"></div>
<div class="t" style="left:541.90px;top:171.00px;font-size:9.1px;color:#3a1606;font-weight:400;-webkit-text-stroke:0.3px #3a1606;">A1</div>
<div class="t" style="left:568.90px;top:171.00px;font-size:9.1px;color:#f0f0f0;font-weight:400;-webkit-text-stroke:0.3px #f0f0f0;">Drums 1</div>
<div class="r" style="left:535px;top:183px;width:129px;height:1px;background:#141414;"></div>
<div class="r" style="left:535px;top:184px;width:22px;height:18px;background:#212121;"></div>
<div class="r" style="left:557px;top:184px;width:4px;height:18px;background:#ff6a2b;"></div>
<div class="r" style="left:561px;top:184px;width:103px;height:18px;background:#222222;"></div>
<div class="t" style="left:541.90px;top:190.00px;font-size:9.1px;color:#a8a8a8;font-weight:400;-webkit-text-stroke:0.15px #a8a8a8;">B1</div>
<div class="t" style="left:568.90px;top:190.00px;font-size:9.1px;color:#a8a8a8;font-weight:400;-webkit-text-stroke:0.15px #a8a8a8;">Drums 2</div>
<div class="r" style="left:535px;top:202px;width:129px;height:1px;background:#141414;"></div>
<div class="r" style="left:535px;top:203px;width:22px;height:18px;background:#212121;"></div>
<div class="r" style="left:557px;top:203px;width:4px;height:18px;background:#ff6a2b;"></div>
<div class="r" style="left:561px;top:203px;width:103px;height:18px;background:#222222;"></div>
<div class="t" style="left:541.90px;top:209.00px;font-size:9.1px;color:#a8a8a8;font-weight:400;-webkit-text-stroke:0.15px #a8a8a8;">C1</div>
<div class="t" style="left:568.90px;top:209.00px;font-size:9.1px;color:#a8a8a8;font-weight:400;-webkit-text-stroke:0.15px #a8a8a8;">Hi Hats</div>
<div class="r" style="left:535px;top:221px;width:129px;height:1px;background:#141414;"></div>
<div class="r" style="left:535px;top:222px;width:22px;height:18px;background:#212121;"></div>
<div class="r" style="left:557px;top:222px;width:4px;height:18px;background:#00c9fd;"></div>
<div class="r" style="left:561px;top:222px;width:103px;height:18px;background:#222222;"></div>
<div class="t" style="left:541.90px;top:228.00px;font-size:9.1px;color:#a8a8a8;font-weight:400;-webkit-text-stroke:0.15px #a8a8a8;">D1</div>
<div class="t" style="left:568.90px;top:228.00px;font-size:9.1px;color:#a8a8a8;font-weight:400;-webkit-text-stroke:0.15px #a8a8a8;">Keys</div>
<div class="r" style="left:535px;top:240px;width:129px;height:1px;background:#141414;"></div>
<div class="r" style="left:535px;top:241px;width:22px;height:18px;background:#212121;"></div>
<div class="r" style="left:557px;top:241px;width:4px;height:18px;background:#00c9fd;"></div>
<div class="r" style="left:561px;top:241px;width:103px;height:18px;background:#222222;"></div>
<div class="t" style="left:541.90px;top:247.00px;font-size:9.1px;color:#a8a8a8;font-weight:400;-webkit-text-stroke:0.15px #a8a8a8;">E1</div>
<div class="t" style="left:568.90px;top:247.00px;font-size:9.1px;color:#a8a8a8;font-weight:400;-webkit-text-stroke:0.15px #a8a8a8;">Guitar</div>
<div class="r" style="left:535px;top:259px;width:129px;height:1px;background:#141414;"></div>
<div class="r" style="left:535px;top:260px;width:22px;height:18px;background:#212121;"></div>
<div class="r" style="left:557px;top:260px;width:4px;height:18px;background:#00c9fd;"></div>
<div class="r" style="left:561px;top:260px;width:103px;height:18px;background:#222222;"></div>
<div class="t" style="left:541.90px;top:266.00px;font-size:9.1px;color:#a8a8a8;font-weight:400;-webkit-text-stroke:0.15px #a8a8a8;">F1</div>
<div class="t" style="left:568.90px;top:266.00px;font-size:9.1px;color:#a8a8a8;font-weight:400;-webkit-text-stroke:0.15px #a8a8a8;">Samples 1</div>
<div class="r" style="left:535px;top:278px;width:129px;height:1px;background:#141414;"></div>
<div class="r" style="left:535px;top:279px;width:22px;height:18px;background:#212121;"></div>
<div class="r" style="left:557px;top:279px;width:4px;height:18px;background:#00c9fd;"></div>
<div class="r" style="left:561px;top:279px;width:103px;height:18px;background:#222222;"></div>
<div class="t" style="left:541.90px;top:285.00px;font-size:9.1px;color:#a8a8a8;font-weight:400;-webkit-text-stroke:0.15px #a8a8a8;">G1</div>
<div class="t" style="left:568.90px;top:285.00px;font-size:9.1px;color:#a8a8a8;font-weight:400;-webkit-text-stroke:0.15px #a8a8a8;">Samples 2</div>
<div class="r" style="left:535px;top:297px;width:129px;height:1px;background:#141414;"></div>
<div class="r" style="left:535px;top:298px;width:22px;height:18px;background:#212121;"></div>
<div class="r" style="left:557px;top:298px;width:4px;height:18px;background:#00c9fd;"></div>
<div class="r" style="left:561px;top:298px;width:103px;height:18px;background:#222222;"></div>
<div class="t" style="left:541.90px;top:304.00px;font-size:9.1px;color:#a8a8a8;font-weight:400;-webkit-text-stroke:0.15px #a8a8a8;">H1</div>
<div class="t" style="left:568.90px;top:304.00px;font-size:9.1px;color:#a8a8a8;font-weight:400;-webkit-text-stroke:0.15px #a8a8a8;">Samples 3</div>
<div class="r" style="left:535px;top:316px;width:129px;height:1px;background:#141414;"></div>
<div class="r" style="left:535px;top:317px;width:22px;height:18px;background:#212121;"></div>
<div class="r" style="left:557px;top:317px;width:4px;height:18px;background:#3497ff;"></div>
<div class="r" style="left:561px;top:317px;width:103px;height:18px;background:#222222;"></div>
<div class="t" style="left:541.90px;top:323.00px;font-size:9.1px;color:#a8a8a8;font-weight:400;-webkit-text-stroke:0.15px #a8a8a8;">A2</div>
<div class="t" style="left:568.90px;top:323.00px;font-size:9.1px;color:#a8a8a8;font-weight:400;-webkit-text-stroke:0.15px #a8a8a8;">SFX</div>
<div class="r" style="left:535px;top:335px;width:129px;height:1px;background:#141414;"></div>
<div class="r" style="left:535px;top:336px;width:22px;height:18px;background:#212121;"></div>
<div class="r" style="left:557px;top:336px;width:4px;height:18px;background:#8d6ff6;"></div>
<div class="r" style="left:561px;top:336px;width:103px;height:18px;background:#222222;"></div>
<div class="t" style="left:541.90px;top:342.00px;font-size:9.1px;color:#a8a8a8;font-weight:400;-webkit-text-stroke:0.15px #a8a8a8;">B2</div>
<div class="t" style="left:568.90px;top:342.00px;font-size:9.1px;color:#a8a8a8;font-weight:400;-webkit-text-stroke:0.15px #a8a8a8;">Bass</div>
<div class="r" style="left:535px;top:354px;width:129px;height:1px;background:#141414;"></div>
<div class="r" style="left:535px;top:355px;width:129px;height:28px;background:#1f1f1f;"></div>
<svg class="s" style="left:538px;top:357px;" width="14" height="10" viewBox="0 0 14 10"><rect x="2" y="6.5" width="10" height="1.2" fill="#666"/><rect x="6.4" y="2" width="1.2" height="5" fill="#666"/></svg>
<svg class="s" style="left:540px;top:368px;" width="13" height="13" viewBox="0 0 13 13"><g fill="#e0e0e0"><rect x="2" y="4.3" width="9" height="1.2"/><rect x="2" y="7.6" width="9" height="1.2"/><rect x="4.1" y="2" width="1.2" height="9.4"/><rect x="7.4" y="2" width="1.2" height="9.4"/></g></svg>
<div class="t" style="left:557.60px;top:370.00px;font-size:9.4px;color:#dadada;font-weight:400;-webkit-text-stroke:0.3px #dadada;">1 Bar</div>
<div class="r" style="left:664px;top:125px;width:1px;height:258px;background:#111;"></div>
<div class="r" style="left:665px;top:125px;width:906px;height:13px;background:#454545;"></div>
<div class="r" style="left:1571px;top:125px;width:97px;height:13px;background:#2b2b2b;"></div>
<div class="r" style="left:740px;top:125px;width:1px;height:13px;background:#707070;"></div>
<div class="t" style="left:743.50px;top:127.00px;font-size:9.5px;color:#c4c4c4;font-weight:400;-webkit-text-stroke:0.3px #c4c4c4;">3</div>
<div class="r" style="left:816px;top:125px;width:1px;height:13px;background:#707070;"></div>
<div class="t" style="left:819.00px;top:127.00px;font-size:9.5px;color:#c4c4c4;font-weight:400;-webkit-text-stroke:0.3px #c4c4c4;">5</div>
<div class="r" style="left:891px;top:125px;width:1px;height:13px;background:#707070;"></div>
<div class="t" style="left:894.50px;top:127.00px;font-size:9.5px;color:#c4c4c4;font-weight:400;-webkit-text-stroke:0.3px #c4c4c4;">7</div>
<div class="r" style="left:966px;top:125px;width:1px;height:13px;background:#707070;"></div>
<div class="t" style="left:970.00px;top:127.00px;font-size:9.5px;color:#c4c4c4;font-weight:400;-webkit-text-stroke:0.3px #c4c4c4;">9</div>
<div class="r" style="left:1042px;top:125px;width:1px;height:13px;background:#707070;"></div>
<div class="t" style="left:1045.50px;top:127.00px;font-size:9.5px;color:#c4c4c4;font-weight:400;-webkit-text-stroke:0.3px #c4c4c4;">11</div>
<div class="r" style="left:1118px;top:125px;width:1px;height:13px;background:#707070;"></div>
<div class="t" style="left:1121.00px;top:127.00px;font-size:9.5px;color:#c4c4c4;font-weight:400;-webkit-text-stroke:0.3px #c4c4c4;">13</div>
<div class="r" style="left:1193px;top:125px;width:1px;height:13px;background:#707070;"></div>
<div class="t" style="left:1196.50px;top:127.00px;font-size:9.5px;color:#c4c4c4;font-weight:400;-webkit-text-stroke:0.3px #c4c4c4;">15</div>
<div class="r" style="left:1268px;top:125px;width:1px;height:13px;background:#707070;"></div>
<div class="t" style="left:1272.00px;top:127.00px;font-size:9.5px;color:#c4c4c4;font-weight:400;-webkit-text-stroke:0.3px #c4c4c4;">17</div>
<div class="r" style="left:1344px;top:125px;width:1px;height:13px;background:#707070;"></div>
<div class="t" style="left:1347.50px;top:127.00px;font-size:9.5px;color:#c4c4c4;font-weight:400;-webkit-text-stroke:0.3px #c4c4c4;">19</div>
<div class="r" style="left:1420px;top:125px;width:1px;height:13px;background:#707070;"></div>
<div class="t" style="left:1423.00px;top:127.00px;font-size:9.5px;color:#c4c4c4;font-weight:400;-webkit-text-stroke:0.3px #c4c4c4;">21</div>
<div class="r" style="left:1495px;top:125px;width:1px;height:13px;background:#707070;"></div>
<div class="t" style="left:1498.50px;top:127.00px;font-size:9.5px;color:#c4c4c4;font-weight:400;-webkit-text-stroke:0.3px #c4c4c4;">23</div>
<div class="r" style="left:1570px;top:125px;width:1px;height:13px;background:#3a3a3a;"></div>
<div class="t" style="left:1574.00px;top:127.00px;font-size:9.5px;color:#555;font-weight:400;-webkit-text-stroke:0.3px #555;">25</div>
<div class="r" style="left:1646px;top:125px;width:1px;height:13px;background:#3a3a3a;"></div>
<div class="t" style="left:1649.50px;top:127.00px;font-size:9.5px;color:#555;font-weight:400;-webkit-text-stroke:0.3px #555;">27</div>
<div class="r" style="left:665px;top:138px;width:1003px;height:26px;background:#1f1f1f;"></div>
<div class="r" style="left:740px;top:138px;width:150px;height:26px;background:#474747;"></div>
<div class="r" style="left:740px;top:138px;width:150px;height:3px;background:#1eb2e2;"></div>
<div class="r" style="left:739px;top:138px;width:1px;height:26px;background:#141414;"></div>
<div class="r" style="left:890px;top:138px;width:1px;height:26px;background:#141414;"></div>
<div class="r" style="left:1193px;top:138px;width:1px;height:26px;background:#141414;"></div>
<div class="r" style="left:1344px;top:138px;width:1px;height:26px;background:#141414;"></div>
<div class="r" style="left:1495px;top:138px;width:1px;height:26px;background:#141414;"></div>
<div class="r" style="left:1571px;top:138px;width:1px;height:26px;background:#262626;"></div>
<div class="r" style="left:665px;top:164px;width:1003px;height:1px;background:#141414;"></div>
<div class="t" style="left:670.70px;top:148.00px;font-size:8.8px;color:#2cc2ee;font-weight:400;-webkit-text-stroke:0.3px #2cc2ee;">INTRO</div>
<div class="t" style="left:745.00px;top:148.00px;font-size:8.8px;color:#2cc2ee;font-weight:400;-webkit-text-stroke:0.3px #2cc2ee;">VERSE</div>
<div class="t" style="left:897.00px;top:148.00px;font-size:8.8px;color:#2cc2ee;font-weight:400;-webkit-text-stroke:0.3px #2cc2ee;">HOOK</div>
<div class="t" style="left:1199.00px;top:148.00px;font-size:8.8px;color:#2cc2ee;font-weight:400;-webkit-text-stroke:0.3px #2cc2ee;">BRIDGE</div>
<div class="t" style="left:1350.00px;top:148.00px;font-size:8.8px;color:#2cc2ee;font-weight:400;-webkit-text-stroke:0.3px #2cc2ee;">OUTRO</div>
<svg class="s" style="left:1498px;top:141px;" width="14" height="14" viewBox="0 0 14 14"><rect x="6.3" y="2" width="1.2" height="10" fill="#666"/><rect x="2" y="6.3" width="10" height="1.2" fill="#666"/></svg>
<div class="r" style="left:665px;top:165px;width:990px;height:18px;background:#2a2a2a;"></div>
<div class="r" style="left:665px;top:183px;width:990px;height:1px;background:#282828;"></div>
<div class="r" style="left:665px;top:184px;width:990px;height:18px;background:#212121;"></div>
<div class="r" style="left:665px;top:202px;width:990px;height:1px;background:#282828;"></div>
<div class="r" style="left:740px;top:184px;width:150px;height:18px;background:#272727;"></div>
<div class="r" style="left:740px;top:202px;width:150px;height:1px;background:#2e2e2e;"></div>
<div class="r" style="left:665px;top:203px;width:990px;height:18px;background:#212121;"></div>
<div class="r" style="left:665px;top:221px;width:990px;height:1px;background:#282828;"></div>
<div class="r" style="left:740px;top:203px;width:150px;height:18px;background:#272727;"></div>
<div class="r" style="left:740px;top:221px;width:150px;height:1px;background:#2e2e2e;"></div>
<div class="r" style="left:665px;top:222px;width:990px;height:18px;background:#212121;"></div>
<div class="r" style="left:665px;top:240px;width:990px;height:1px;background:#282828;"></div>
<div class="r" style="left:740px;top:222px;width:150px;height:18px;background:#272727;"></div>
<div class="r" style="left:740px;top:240px;width:150px;height:1px;background:#2e2e2e;"></div>
<div class="r" style="left:665px;top:241px;width:990px;height:18px;background:#212121;"></div>
<div class="r" style="left:665px;top:259px;width:990px;height:1px;background:#282828;"></div>
<div class="r" style="left:740px;top:241px;width:150px;height:18px;background:#272727;"></div>
<div class="r" style="left:740px;top:259px;width:150px;height:1px;background:#2e2e2e;"></div>
<div class="r" style="left:665px;top:260px;width:990px;height:18px;background:#212121;"></div>
<div class="r" style="left:665px;top:278px;width:990px;height:1px;background:#282828;"></div>
<div class="r" style="left:740px;top:260px;width:150px;height:18px;background:#272727;"></div>
<div class="r" style="left:740px;top:278px;width:150px;height:1px;background:#2e2e2e;"></div>
<div class="r" style="left:665px;top:279px;width:990px;height:18px;background:#212121;"></div>
<div class="r" style="left:665px;top:297px;width:990px;height:1px;background:#282828;"></div>
<div class="r" style="left:740px;top:279px;width:150px;height:18px;background:#272727;"></div>
<div class="r" style="left:740px;top:297px;width:150px;height:1px;background:#2e2e2e;"></div>
<div class="r" style="left:665px;top:298px;width:990px;height:18px;background:#212121;"></div>
<div class="r" style="left:665px;top:316px;width:990px;height:1px;background:#282828;"></div>
<div class="r" style="left:740px;top:298px;width:150px;height:18px;background:#272727;"></div>
<div class="r" style="left:740px;top:316px;width:150px;height:1px;background:#2e2e2e;"></div>
<div class="r" style="left:665px;top:317px;width:990px;height:18px;background:#212121;"></div>
<div class="r" style="left:665px;top:335px;width:990px;height:1px;background:#282828;"></div>
<div class="r" style="left:740px;top:317px;width:150px;height:18px;background:#272727;"></div>
<div class="r" style="left:740px;top:335px;width:150px;height:1px;background:#2e2e2e;"></div>
<div class="r" style="left:665px;top:336px;width:990px;height:18px;background:#212121;"></div>
<div class="r" style="left:665px;top:354px;width:990px;height:1px;background:#282828;"></div>
<div class="r" style="left:740px;top:336px;width:150px;height:18px;background:#272727;"></div>
<div class="r" style="left:740px;top:354px;width:150px;height:1px;background:#2e2e2e;"></div>
<div class="r" style="left:739px;top:165px;width:1px;height:190px;background:#181818;"></div>
<div class="r" style="left:816px;top:165px;width:1px;height:190px;background:#2c2c2c;"></div>
<div class="r" style="left:890px;top:165px;width:1px;height:190px;background:#181818;"></div>
<div class="r" style="left:966px;top:165px;width:1px;height:190px;background:#2c2c2c;"></div>
<div class="r" style="left:1042px;top:165px;width:1px;height:190px;background:#2c2c2c;"></div>
<div class="r" style="left:1118px;top:165px;width:1px;height:190px;background:#2c2c2c;"></div>
<div class="r" style="left:1192px;top:165px;width:1px;height:190px;background:#181818;"></div>
<div class="r" style="left:1268px;top:165px;width:1px;height:190px;background:#2c2c2c;"></div>
<div class="r" style="left:1343px;top:165px;width:1px;height:190px;background:#181818;"></div>
<div class="r" style="left:1420px;top:165px;width:1px;height:190px;background:#2c2c2c;"></div>
<div class="r" style="left:1494px;top:165px;width:1px;height:190px;background:#181818;"></div>
<div class="r" style="left:1570px;top:165px;width:1px;height:190px;background:#2c2c2c;"></div>
<div class="r" style="left:1646px;top:165px;width:1px;height:190px;background:#2c2c2c;"></div>
<div class="r" style="left:665px;top:355px;width:990px;height:9px;background:#222222;"></div>
<div class="r" style="left:665px;top:165px;width:75px;height:18px;background:#ff6a2b;"></div>
<div class="r" style="left:665px;top:183px;width:75px;height:1px;background:#3a1a0c;"></div>
<div class="t" style="left:670.5px;top:170px;font-size:9.5px;color:#2a1004;-webkit-text-stroke:0.4px #2a1004;max-width:69px;overflow:hidden">Drums Intro</div>
<div class="r" style="left:741px;top:165px;width:150px;height:18px;background:#ff6a2b;"></div>
<div class="r" style="left:741px;top:183px;width:150px;height:1px;background:#3a1a0c;"></div>
<div class="r" style="left:741px;top:165px;width:150px;height:18px;background:transparent;box-shadow:inset 0 0 0 1.5px #f4f4f4;"></div>
<div class="t" style="left:746.5px;top:170px;font-size:9.5px;color:#2a1004;-webkit-text-stroke:0.4px #2a1004;max-width:144px;overflow:hidden">Drums Verse</div>
<div class="r" style="left:892px;top:165px;width:301px;height:18px;background:#ff6a2b;"></div>
<div class="r" style="left:892px;top:183px;width:301px;height:1px;background:#3a1a0c;"></div>
<div class="t" style="left:897.5px;top:170px;font-size:9.5px;color:#2a1004;-webkit-text-stroke:0.4px #2a1004;max-width:295px;overflow:hidden">Drums Chorus</div>
<div class="r" style="left:1194px;top:165px;width:74px;height:18px;background:#ff6a2b;"></div>
<div class="r" style="left:1194px;top:183px;width:74px;height:1px;background:#3a1a0c;"></div>
<div class="t" style="left:1199.5px;top:170px;font-size:9.5px;color:#2a1004;-webkit-text-stroke:0.4px #2a1004;max-width:68px;overflow:hidden">Drums..ridge 1</div>
<div class="r" style="left:1269px;top:165px;width:75px;height:18px;background:#9d4b2d;"></div>
<div class="r" style="left:1269px;top:183px;width:75px;height:1px;background:#2a160e;"></div>
<div class="r" style="left:1345px;top:165px;width:150px;height:18px;background:#ff6a2b;"></div>
<div class="r" style="left:1345px;top:183px;width:150px;height:1px;background:#3a1a0c;"></div>
<div class="t" style="left:1350.5px;top:170px;font-size:9.5px;color:#2a1004;-webkit-text-stroke:0.4px #2a1004;max-width:144px;overflow:hidden">Drums Outro</div>
<div class="r" style="left:665px;top:184px;width:75px;height:18px;background:#ff6a2b;"></div>
<div class="r" style="left:665px;top:202px;width:75px;height:1px;background:#3a1a0c;"></div>
<div class="t" style="left:670.5px;top:189px;font-size:9.5px;color:#2a1004;-webkit-text-stroke:0.4px #2a1004;max-width:69px;overflow:hidden">Drums..n Intro</div>
<div class="r" style="left:741px;top:184px;width:150px;height:18px;background:#ff6a2b;"></div>
<div class="r" style="left:741px;top:202px;width:150px;height:1px;background:#3a1a0c;"></div>
<div class="t" style="left:746.5px;top:189px;font-size:9.5px;color:#2a1004;-webkit-text-stroke:0.4px #2a1004;max-width:144px;overflow:hidden">Drums Add-On Verse</div>
<div class="r" style="left:892px;top:184px;width:150px;height:18px;background:#ff6a2b;"></div>
<div class="r" style="left:892px;top:202px;width:150px;height:1px;background:#3a1a0c;"></div>
<div class="t" style="left:897.5px;top:189px;font-size:9.5px;color:#2a1004;-webkit-text-stroke:0.4px #2a1004;max-width:144px;overflow:hidden">Drums Add-On Chorus</div>
<div class="r" style="left:1043px;top:184px;width:150px;height:18px;background:#9d4b2d;"></div>
<div class="r" style="left:1043px;top:202px;width:150px;height:1px;background:#2a160e;"></div>
<div class="r" style="left:1194px;top:184px;width:150px;height:18px;background:#ff6a2b;"></div>
<div class="r" style="left:1194px;top:202px;width:150px;height:1px;background:#3a1a0c;"></div>
<div class="t" style="left:1199.5px;top:189px;font-size:9.5px;color:#2a1004;-webkit-text-stroke:0.4px #2a1004;max-width:144px;overflow:hidden">Drums Add-On Verse</div>
<div class="r" style="left:1345px;top:184px;width:150px;height:18px;background:#ff6a2b;"></div>
<div class="r" style="left:1345px;top:202px;width:150px;height:1px;background:#3a1a0c;"></div>
<div class="t" style="left:1350.5px;top:189px;font-size:9.5px;color:#2a1004;-webkit-text-stroke:0.4px #2a1004;max-width:144px;overflow:hidden">Drums Add-On Verse</div>
<div class="r" style="left:1194px;top:203px;width:150px;height:18px;background:#ff6a2b;"></div>
<div class="r" style="left:1194px;top:221px;width:150px;height:1px;background:#3a1a0c;"></div>
<div class="t" style="left:1199.5px;top:208px;font-size:9.5px;color:#2a1004;-webkit-text-stroke:0.4px #2a1004;max-width:144px;overflow:hidden">HiHat Bridge</div>
<div class="r" style="left:1345px;top:203px;width:150px;height:18px;background:#ff6a2b;"></div>
<div class="r" style="left:1345px;top:221px;width:150px;height:1px;background:#3a1a0c;"></div>
<div class="t" style="left:1350.5px;top:208px;font-size:9.5px;color:#2a1004;-webkit-text-stroke:0.4px #2a1004;max-width:144px;overflow:hidden">HiHat Outro</div>
<div class="r" style="left:892px;top:222px;width:301px;height:18px;background:#00c9fd;"></div>
<div class="r" style="left:892px;top:240px;width:301px;height:1px;background:#0a3442;"></div>
<div class="t" style="left:897.5px;top:227px;font-size:9.5px;color:#062a38;-webkit-text-stroke:0.4px #062a38;max-width:295px;overflow:hidden">Keys Chorus</div>
<div class="r" style="left:892px;top:241px;width:301px;height:18px;background:#00c9fd;"></div>
<div class="r" style="left:892px;top:259px;width:301px;height:1px;background:#0a3442;"></div>
<div class="t" style="left:897.5px;top:246px;font-size:9.5px;color:#062a38;-webkit-text-stroke:0.4px #062a38;max-width:295px;overflow:hidden">Guitar Chorus</div>
<div class="r" style="left:665px;top:260px;width:75px;height:18px;background:#00c9fd;"></div>
<div class="r" style="left:665px;top:278px;width:75px;height:1px;background:#0a3442;"></div>
<div class="t" style="left:670.5px;top:265px;font-size:9.5px;color:#062a38;-webkit-text-stroke:0.4px #062a38;max-width:69px;overflow:hidden">Main ..dy Intro</div>
<div class="r" style="left:741px;top:260px;width:150px;height:18px;background:#00c9fd;"></div>
<div class="r" style="left:741px;top:278px;width:150px;height:1px;background:#0a3442;"></div>
<div class="t" style="left:746.5px;top:265px;font-size:9.5px;color:#062a38;-webkit-text-stroke:0.4px #062a38;max-width:144px;overflow:hidden">Main Melody Verse</div>
<div class="r" style="left:892px;top:260px;width:301px;height:18px;background:#00c9fd;"></div>
<div class="r" style="left:892px;top:278px;width:301px;height:1px;background:#0a3442;"></div>
<div class="t" style="left:897.5px;top:265px;font-size:9.5px;color:#062a38;-webkit-text-stroke:0.4px #062a38;max-width:295px;overflow:hidden">Main Melody Chorus</div>
<div class="r" style="left:1194px;top:279px;width:150px;height:18px;background:#00c9fd;"></div>
<div class="r" style="left:1194px;top:297px;width:150px;height:1px;background:#0a3442;"></div>
<div class="t" style="left:1199.5px;top:284px;font-size:9.5px;color:#062a38;-webkit-text-stroke:0.4px #062a38;max-width:144px;overflow:hidden">Main Melody Bridge</div>
<div class="r" style="left:1345px;top:279px;width:150px;height:18px;background:#00c9fd;"></div>
<div class="r" style="left:1345px;top:297px;width:150px;height:1px;background:#0a3442;"></div>
<div class="t" style="left:1350.5px;top:284px;font-size:9.5px;color:#062a38;-webkit-text-stroke:0.4px #062a38;max-width:144px;overflow:hidden">Main Melody Bridge</div>
<div class="r" style="left:1194px;top:298px;width:150px;height:18px;background:#00c9fd;"></div>
<div class="r" style="left:1194px;top:316px;width:150px;height:1px;background:#0a3442;"></div>
<div class="t" style="left:1199.5px;top:303px;font-size:9.5px;color:#062a38;-webkit-text-stroke:0.4px #062a38;max-width:144px;overflow:hidden">Main Melody Add On Bridge 1</div>
<div class="r" style="left:1345px;top:298px;width:150px;height:18px;background:#00c9fd;"></div>
<div class="r" style="left:1345px;top:316px;width:150px;height:1px;background:#0a3442;"></div>
<div class="t" style="left:1350.5px;top:303px;font-size:9.5px;color:#062a38;-webkit-text-stroke:0.4px #062a38;max-width:144px;overflow:hidden">Main Melody Add Outro</div>
<div class="r" style="left:892px;top:317px;width:301px;height:18px;background:#3497ff;"></div>
<div class="r" style="left:892px;top:335px;width:301px;height:1px;background:#10284a;"></div>
<div class="t" style="left:897.5px;top:322px;font-size:9.5px;color:#0a2548;-webkit-text-stroke:0.4px #0a2548;max-width:295px;overflow:hidden">SFX Chorus</div>
<div class="r" style="left:741px;top:336px;width:75px;height:18px;background:#8d6ff6;"></div>
<div class="r" style="left:741px;top:354px;width:75px;height:1px;background:#241c40;"></div>
<div class="t" style="left:746.5px;top:341px;font-size:9.5px;color:#1d1540;-webkit-text-stroke:0.4px #1d1540;max-width:69px;overflow:hidden">Bass Verse</div>
<div class="r" style="left:817px;top:336px;width:74px;height:18px;background:#57489a;"></div>
<div class="r" style="left:817px;top:354px;width:74px;height:1px;background:#1c1830;"></div>
<div class="r" style="left:892px;top:336px;width:301px;height:18px;background:#8d6ff6;"></div>
<div class="r" style="left:892px;top:354px;width:301px;height:1px;background:#241c40;"></div>
<div class="t" style="left:897.5px;top:341px;font-size:9.5px;color:#1d1540;-webkit-text-stroke:0.4px #1d1540;max-width:295px;overflow:hidden">Bass Chorus</div>
<div class="r" style="left:1194px;top:336px;width:150px;height:18px;background:#8d6ff6;"></div>
<div class="r" style="left:1194px;top:354px;width:150px;height:1px;background:#241c40;"></div>
<div class="t" style="left:1199.5px;top:341px;font-size:9.5px;color:#1d1540;-webkit-text-stroke:0.4px #1d1540;max-width:144px;overflow:hidden">Bass Bridge</div>
<div class="r" style="left:1345px;top:336px;width:150px;height:18px;background:#8d6ff6;"></div>
<div class="r" style="left:1345px;top:354px;width:150px;height:1px;background:#241c40;"></div>
<div class="t" style="left:1350.5px;top:341px;font-size:9.5px;color:#1d1540;-webkit-text-stroke:0.4px #1d1540;max-width:144px;overflow:hidden">Bass Outro</div>
<div class="r" style="left:1305px;top:125px;width:2px;height:240px;background:#e6e6e6;opacity:0.85"></div>
<div class="r" style="left:1655px;top:165px;width:13px;height:199px;background:#1c1c1c;"></div>
<div class="r" style="left:1654px;top:165px;width:1px;height:190px;background:#151515;"></div>
<div class="r" style="left:1660px;top:168px;width:4px;height:182px;background:#2f2f2f;"></div>
<div class="r" style="left:665px;top:364px;width:1003px;height:1px;background:#101010;"></div>
<div class="r" style="left:665px;top:365px;width:1003px;height:18px;background:#1f1f1f;"></div>
<div class="r" style="left:665px;top:372px;width:5px;height:4px;background:#2a2a2a;"></div>
<div class="r" style="left:671px;top:372px;width:795px;height:5px;background:#343434;"></div>
<div class="r" style="left:1467px;top:372px;width:4px;height:5px;background:#2a2a2a;"></div>
<svg class="s" style="left:1656px;top:369px;" width="10" height="10" viewBox="0 0 10 10"><rect x="7" y="1" width="1.3" height="1.3" fill="#8a8a8a"/><rect x="7" y="4" width="1.3" height="1.3" fill="#8a8a8a"/><rect x="4" y="4" width="1.3" height="1.3" fill="#8a8a8a"/><rect x="7" y="7" width="1.3" height="1.3" fill="#8a8a8a"/><rect x="4" y="7" width="1.3" height="1.3" fill="#8a8a8a"/><rect x="1" y="7" width="1.3" height="1.3" fill="#8a8a8a"/></svg>
<div class="r" style="left:509px;top:383px;width:1159px;height:2px;background:#0b0b0b;"></div>
<div class="r" style="left:509px;top:385px;width:25px;height:110px;background:#1f1f1f;"></div>
<svg class="s" style="left:512px;top:389px;" width="20" height="20" viewBox="0 0 20 20"><circle cx="9.6" cy="10.2" r="5.8" fill="none" stroke="#b0b0b0" stroke-width="1.4"/><path d="M9.6 10.2 L12.6 7.2" stroke="#b0b0b0" stroke-width="1.4"/></svg>
<svg class="s" style="left:512px;top:410px;" width="20" height="20" viewBox="0 0 20 20"><path d="M9 3.5 L11.5 3.5 L11.5 16 L9 16 A6.25 6.25 0 0 1 9 3.5 Z" fill="#f0f0f0"/><rect x="11" y="6.6" width="5.3" height="2" fill="#f0f0f0"/><rect x="11" y="11" width="5.3" height="2" fill="#f0f0f0"/></svg>
<svg class="s" style="left:514px;top:480px;" width="14" height="12" viewBox="0 0 14 12"><path d="M4 4.5 L7.3 7.8 L10.6 4.5" fill="none" stroke="#8a8a8a" stroke-width="1.2"/></svg>
<div class="r" style="left:534px;top:385px;width:1px;height:110px;background:#0e0e0e;"></div>
<div class="r" style="left:535px;top:385px;width:129px;height:110px;background:#1f1f1f;"></div>
<div class="t" style="left:541.50px;top:395.00px;font-size:9px;color:#8a8a8a;font-weight:400;">MASTER</div>
<div class="t" style="left:586.80px;top:395.00px;font-size:8.6px;color:#8a8a8a;font-weight:400;">GROUP</div>
<div class="t" style="left:626.80px;top:395.00px;font-size:8.6px;color:#f0f0f0;font-weight:400;-webkit-text-stroke:0.3px #f0f0f0;">SOUND</div>
<div class="t" style="left:541.50px;top:412.00px;font-size:11.7px;color:#22b0e0;font-weight:400;">Combo[1..eMath 1</div>
<svg class="s" style="left:641px;top:409px;" width="16" height="16" viewBox="0 0 16 16"><circle cx="9.4" cy="6.6" r="3.6" fill="none" stroke="#22b0e0" stroke-width="1.4"/><path d="M6.8 9.4 L3 13.6" stroke="#22b0e0" stroke-width="1.5"/></svg>
<div class="r" style="left:541px;top:432px;width:117px;height:19px;background:#454545;"></div>
<svg class="s" style="left:544px;top:435px;" width="14" height="14" viewBox="0 0 14 14"><rect x="1.3" y="1" width="11.4" height="11" rx="1" fill="#eaeaea"/><text x="7" y="10.3" text-anchor="middle" textLength="9" lengthAdjust="spacingAndGlyphs" style="font-family:'Liberation Sans';font-size:9.5px;font-weight:700;fill:#454545">AU</text></svg>
<div class="t" style="left:564.00px;top:437.00px;font-size:9.4px;color:#e8e8e8;font-weight:400;">Audio</div>
<svg class="s" style="left:643px;top:436px;" width="10" height="8" viewBox="0 0 10 8"><path d="M2 2.6 L8.3 2.6 L5.15 5.7 Z" fill="#cfcfcf"/></svg>
<svg class="s" style="left:544px;top:455px;" width="14" height="14" viewBox="0 0 14 14"><rect x="6.3" y="2" width="1.5" height="10" fill="#aaa"/><rect x="2" y="6.3" width="10" height="1.5" fill="#aaa"/></svg>
<div class="r" style="left:664px;top:385px;width:1px;height:110px;background:#111;"></div>
<div class="r" style="left:665px;top:385px;width:1003px;height:110px;background:#202020;"></div>
<div class="t" style="left:681.30px;top:394.00px;font-size:9.6px;color:#efefef;font-weight:400;-webkit-text-stroke:0.3px #efefef;">Playback / Engine / Source</div>
<div class="r" style="left:681px;top:406.5px;width:116px;height:1.5px;background:#d8d8d8;"></div>
<div class="t" style="left:680.80px;top:418.00px;font-size:8.2px;color:#959595;font-weight:400;-webkit-text-stroke:0.3px #959595;">PLAYBACK</div>
<div class="t" style="left:942.50px;top:418.00px;font-size:8.1px;color:#959595;font-weight:400;-webkit-text-stroke:0.3px #959595;">ENGINE</div>
<div class="t" style="left:1008.30px;top:418.00px;font-size:8.0px;color:#959595;font-weight:400;-webkit-text-stroke:0.3px #959595;">SOURCE</div>
<svg class="s" style="left:700px;top:438px;" width="16" height="34" viewBox="0 0 16 34"><path d="M4.7 6 L8 3 L11.3 6 Z" fill="#18bfee"/><path d="M4.7 28 L8 31 L11.3 28 Z" fill="#18bfee"/></svg>
<div class="t" style="left:708.50px;top:451.00px;font-size:10.8px;color:#1fb6e8;font-weight:400;transform:translateX(-50%);-webkit-text-stroke:0.3px #1fb6e8;">Gate</div>
<div class="t" style="left:709.00px;top:477.00px;font-size:9.6px;color:#f0f0f0;font-weight:400;transform:translateX(-50%);-webkit-text-stroke:0.3px #f0f0f0;">Mode</div>
<svg class="s" style="left:752px;top:431.2px;" width="44" height="44" viewBox="0 0 44 44"><path d="M9.98 34.02 A17 17 0 1 1 34.02 34.02" fill="none" stroke="#333" stroke-width="3.2"/><path d="M10.19 34.23 A17 17 0 0 1 5.66 26.69" fill="none" stroke="#18bfee" stroke-width="3.8"/><path d="M20.82 22.21 L13.53 23.49" stroke="#c4c4c4" stroke-width="2.2"/></svg>
<div class="t" style="left:774.50px;top:477.00px;font-size:9.6px;color:#f0f0f0;font-weight:400;transform:translateX(-50%);-webkit-text-stroke:0.3px #f0f0f0;">Fade</div>
<svg class="s" style="left:817.4px;top:431.2px;" width="44" height="44" viewBox="0 0 44 44"><path d="M9.98 34.02 A17 17 0 1 1 34.02 34.02" fill="none" stroke="#333" stroke-width="3.2"/><path d="M22.00 20.80 L22.00 13.40" stroke="#c4c4c4" stroke-width="2.2"/></svg>
<div class="t" style="left:839.70px;top:477.00px;font-size:9.6px;color:#f0f0f0;font-weight:400;transform:translateX(-50%);-webkit-text-stroke:0.3px #f0f0f0;">Tune</div>
<svg class="s" style="left:883px;top:431.2px;" width="44" height="44" viewBox="0 0 44 44"><path d="M9.98 34.02 A17 17 0 1 1 34.02 34.02" fill="none" stroke="#333" stroke-width="3.2"/><path d="M9.98 34.02 A17 17 0 0 1 22.00 5.00" fill="none" stroke="#18bfee" stroke-width="3.8"/><path d="M22.00 20.80 L22.00 13.40" stroke="#c4c4c4" stroke-width="2.2"/></svg>
<div class="t" style="left:905.00px;top:477.00px;font-size:9.6px;color:#f0f0f0;font-weight:400;transform:translateX(-50%);-webkit-text-stroke:0.3px #f0f0f0;">Pitchbend</div>
<svg class="s" style="left:962px;top:438px;" width="16" height="34" viewBox="0 0 16 34"><path d="M4.7 5.8 L8 2.8 L11.3 5.8 Z" fill="#18bfee"/><path d="M4.7 28 L8 31 L11.3 28 Z" fill="#18bfee"/></svg>
<div class="t" style="left:970.40px;top:451.00px;font-size:11.1px;color:#1fb6e8;font-weight:400;transform:translateX(-50%);-webkit-text-stroke:0.3px #1fb6e8;">Stretch</div>
<div class="t" style="left:970.80px;top:477.00px;font-size:9.6px;color:#f0f0f0;font-weight:400;transform:translateX(-50%);-webkit-text-stroke:0.3px #f0f0f0;">Mode</div>
<div class="t" style="left:1036.20px;top:450.00px;font-size:11.2px;color:#1fb6e8;font-weight:400;transform:translateX(-50%);-webkit-text-stroke:0.3px #1fb6e8;">148.50</div>
<div class="t" style="left:1036.20px;top:477.00px;font-size:9.6px;color:#f0f0f0;font-weight:400;transform:translateX(-50%);-webkit-text-stroke:0.3px #f0f0f0;">Tempo</div>
<div class="t" style="left:1101.30px;top:450.00px;font-size:11px;color:#1fb6e8;font-weight:400;transform:translateX(-50%);-webkit-text-stroke:0.3px #1fb6e8;">32.00</div>
<div class="t" style="left:1101.30px;top:477.00px;font-size:9.6px;color:#f0f0f0;font-weight:400;transform:translateX(-50%);-webkit-text-stroke:0.3px #f0f0f0;">Length</div>
<svg class="s" style="left:1648px;top:391px;" width="16" height="16" viewBox="0 0 16 16"><circle cx="9.6" cy="6.6" r="3.6" fill="none" stroke="#aaa" stroke-width="1.3"/><path d="M7 9.3 L3.4 12.9" stroke="#aaa" stroke-width="1.4"/></svg>
<div class="r" style="left:509px;top:495px;width:1159px;height:2px;background:#0b0b0b;"></div>
<div class="r" style="left:509px;top:497px;width:25px;height:484px;background:#1a1a1a;"></div>
<svg class="s" style="left:512px;top:502px;" width="20" height="20" viewBox="0 0 20 20"><g fill="#e8e8e8"><rect x="3.2" y="3.7" width="13" height="1.3"/><rect x="3.2" y="7.2" width="4" height="1.3"/><rect x="8.2" y="7.2" width="8" height="1.3"/><rect x="3.2" y="10.7" width="7" height="1.3"/><rect x="11.4" y="10.7" width="4.8" height="1.3"/><rect x="3.2" y="14.2" width="9" height="1.3"/></g></svg>
<svg class="s" style="left:512px;top:525px;" width="20" height="20" viewBox="0 0 20 20"><rect x="3.2" y="3" width="13.3" height="13.5" rx="1" fill="#bdbdbd"/><g fill="#1a1a1a"><rect x="3.2" y="6.2" width="9" height="1"/><rect x="3.2" y="9.2" width="10" height="1"/><rect x="3.2" y="12.2" width="8" height="1"/></g></svg>
<div class="r" style="left:516px;top:549px;width:12px;height:1px;background:#333;"></div>
<svg class="s" style="left:512px;top:555px;" width="20" height="20" viewBox="0 0 20 20"><rect x="2.6" y="5.5" width="1.5" height="9" fill="#e8e8e8"/><rect x="5.6" y="3.5" width="1.5" height="13" fill="#e8e8e8"/><rect x="8.6" y="6.0" width="1.5" height="8" fill="#e8e8e8"/><rect x="11.6" y="4.5" width="1.5" height="11" fill="#e8e8e8"/><rect x="14.6" y="6.5" width="1.5" height="7" fill="#e8e8e8"/></svg>
<div class="r" style="left:534px;top:497px;width:1px;height:484px;background:#0e0e0e;"></div>
<div class="r" style="left:535px;top:497px;width:129px;height:484px;background:#181818;"></div>
<div class="t" style="left:541.70px;top:505.00px;font-size:11.3px;color:#e35d2b;font-weight:400;">Drums 1</div>
<svg class="s" style="left:645px;top:505px;" width="10" height="8" viewBox="0 0 10 8"><path d="M2 2.8 L8.3 2.8 L5.15 5.8 Z" fill="#cfcfcf"/></svg>
<svg class="s" style="left:540px;top:522px;" width="14" height="14" viewBox="0 0 14 14"><path d="M2.5 4.8 L5 4.8 L9.7 2.3 L9.7 11.8 L5 9.3 L2.5 9.3 Z" fill="#ececec"/></svg>
<svg class="s" style="left:560px;top:522px;" width="16" height="16" viewBox="0 0 16 16"><rect x="2.00" y="2.00" width="1.6" height="1.6" fill="#9a9a9a"/><rect x="2.00" y="4.95" width="1.6" height="1.6" fill="#9a9a9a"/><rect x="2.00" y="7.90" width="1.6" height="1.6" fill="#9a9a9a"/><rect x="2.00" y="10.85" width="1.6" height="1.6" fill="#9a9a9a"/><rect x="4.95" y="2.00" width="1.6" height="1.6" fill="#9a9a9a"/><rect x="4.95" y="4.95" width="1.6" height="1.6" fill="#9a9a9a"/><rect x="4.95" y="7.90" width="1.6" height="1.6" fill="#9a9a9a"/><rect x="4.95" y="10.85" width="1.6" height="1.6" fill="#9a9a9a"/><rect x="7.90" y="2.00" width="1.6" height="1.6" fill="#9a9a9a"/><rect x="7.90" y="4.95" width="1.6" height="1.6" fill="#9a9a9a"/><rect x="7.90" y="7.90" width="1.6" height="1.6" fill="#9a9a9a"/><rect x="7.90" y="10.85" width="1.6" height="1.6" fill="#9a9a9a"/><rect x="10.85" y="2.00" width="1.6" height="1.6" fill="#9a9a9a"/><rect x="10.85" y="4.95" width="1.6" height="1.6" fill="#9a9a9a"/><rect x="10.85" y="7.90" width="1.6" height="1.6" fill="#9a9a9a"/><rect x="10.85" y="10.85" width="1.6" height="1.6" fill="#9a9a9a"/></svg>
<div class="r" style="left:535px;top:543px;width:22px;height:18px;background:#1f1f1f;"></div>
<div class="r" style="left:557px;top:543px;width:4px;height:18px;background:#e0303a;"></div>
<div class="r" style="left:561px;top:543px;width:103px;height:18px;background:#212121;"></div>
<div class="t" style="left:545.30px;top:549.00px;font-size:9.3px;color:#a8a8a8;font-weight:400;transform:translateX(-50%);-webkit-text-stroke:0.15px #a8a8a8;">1</div>
<div class="t" style="left:568.50px;top:548.00px;font-size:9.5px;color:#a8a8a8;font-weight:400;-webkit-text-stroke:0.15px #a8a8a8;">Kick TheMath 1</div>
<div class="r" style="left:535px;top:561px;width:129px;height:1px;background:#121212;"></div>
<div class="r" style="left:535px;top:562px;width:22px;height:18px;background:#1f1f1f;"></div>
<div class="r" style="left:557px;top:562px;width:4px;height:18px;background:#f5c518;"></div>
<div class="r" style="left:561px;top:562px;width:103px;height:18px;background:#212121;"></div>
<div class="t" style="left:545.30px;top:568.00px;font-size:9.3px;color:#a8a8a8;font-weight:400;transform:translateX(-50%);-webkit-text-stroke:0.15px #a8a8a8;">2</div>
<div class="t" style="left:568.50px;top:567.00px;font-size:9.5px;color:#a8a8a8;font-weight:400;-webkit-text-stroke:0.15px #a8a8a8;">Snare NewMan 1</div>
<div class="r" style="left:535px;top:580px;width:129px;height:1px;background:#121212;"></div>
<div class="r" style="left:535px;top:581px;width:22px;height:18px;background:#1f1f1f;"></div>
<div class="r" style="left:557px;top:581px;width:4px;height:18px;background:#20c8d8;"></div>
<div class="r" style="left:561px;top:581px;width:103px;height:18px;background:#212121;"></div>
<div class="t" style="left:545.30px;top:587.00px;font-size:9.3px;color:#a8a8a8;font-weight:400;transform:translateX(-50%);-webkit-text-stroke:0.15px #a8a8a8;">3</div>
<div class="t" style="left:568.50px;top:586.00px;font-size:9.5px;color:#a8a8a8;font-weight:400;-webkit-text-stroke:0.15px #a8a8a8;">ClosedH..heMath 1</div>
<div class="r" style="left:535px;top:599px;width:129px;height:1px;background:#121212;"></div>
<div class="r" style="left:535px;top:600px;width:22px;height:18px;background:#1f1f1f;"></div>
<div class="r" style="left:557px;top:600px;width:4px;height:18px;background:#20c8d8;"></div>
<div class="r" style="left:561px;top:600px;width:103px;height:18px;background:#212121;"></div>
<div class="t" style="left:545.30px;top:606.00px;font-size:9.3px;color:#a8a8a8;font-weight:400;transform:translateX(-50%);-webkit-text-stroke:0.15px #a8a8a8;">4</div>
<div class="t" style="left:568.50px;top:605.00px;font-size:9.5px;color:#a8a8a8;font-weight:400;-webkit-text-stroke:0.15px #a8a8a8;">ClosedH..heMath 2</div>
<div class="r" style="left:535px;top:618px;width:129px;height:1px;background:#121212;"></div>
<div class="r" style="left:535px;top:619px;width:22px;height:18px;background:#1f1f1f;"></div>
<div class="r" style="left:557px;top:619px;width:4px;height:18px;background:#e0303a;"></div>
<div class="r" style="left:561px;top:619px;width:103px;height:18px;background:#212121;"></div>
<div class="t" style="left:545.30px;top:625.00px;font-size:9.3px;color:#a8a8a8;font-weight:400;transform:translateX(-50%);-webkit-text-stroke:0.15px #a8a8a8;">5</div>
<div class="t" style="left:568.50px;top:624.00px;font-size:9.5px;color:#a8a8a8;font-weight:400;-webkit-text-stroke:0.15px #a8a8a8;">Kick TheMath 2</div>
<div class="r" style="left:535px;top:637px;width:129px;height:1px;background:#121212;"></div>
<div class="r" style="left:535px;top:638px;width:22px;height:18px;background:#1f1f1f;"></div>
<div class="r" style="left:557px;top:638px;width:4px;height:18px;background:#f5c518;"></div>
<div class="r" style="left:561px;top:638px;width:103px;height:18px;background:#212121;"></div>
<div class="t" style="left:545.30px;top:644.00px;font-size:9.3px;color:#a8a8a8;font-weight:400;transform:translateX(-50%);-webkit-text-stroke:0.15px #a8a8a8;">6</div>
<div class="t" style="left:568.50px;top:643.00px;font-size:9.5px;color:#a8a8a8;font-weight:400;-webkit-text-stroke:0.15px #a8a8a8;">Snare TheMath 2</div>
<div class="r" style="left:535px;top:656px;width:129px;height:1px;background:#121212;"></div>
<div class="r" style="left:535px;top:657px;width:22px;height:17px;background:#1f1f1f;"></div>
<div class="r" style="left:557px;top:657px;width:4px;height:17px;background:#f06a2a;"></div>
<div class="r" style="left:561px;top:657px;width:103px;height:17px;background:#212121;"></div>
<div class="t" style="left:545.30px;top:663.00px;font-size:9.3px;color:#a8a8a8;font-weight:400;transform:translateX(-50%);-webkit-text-stroke:0.15px #a8a8a8;">7</div>
<div class="t" style="left:568.50px;top:662.00px;font-size:9.5px;color:#a8a8a8;font-weight:400;-webkit-text-stroke:0.15px #a8a8a8;">Blip TheMath</div>
<div class="r" style="left:535px;top:674px;width:129px;height:1px;background:#121212;"></div>
<div class="r" style="left:535px;top:675px;width:22px;height:18px;background:#1f1f1f;"></div>
<div class="r" style="left:557px;top:675px;width:4px;height:18px;background:#f06a2a;"></div>
<div class="r" style="left:561px;top:675px;width:103px;height:18px;background:#212121;"></div>
<div class="t" style="left:545.30px;top:681.00px;font-size:9.3px;color:#a8a8a8;font-weight:400;transform:translateX(-50%);-webkit-text-stroke:0.15px #a8a8a8;">8</div>
<div class="t" style="left:568.50px;top:680.00px;font-size:9.5px;color:#a8a8a8;font-weight:400;-webkit-text-stroke:0.15px #a8a8a8;">Lick Bon..o TheMath</div>
<div class="r" style="left:535px;top:693px;width:129px;height:1px;background:#121212;"></div>
<div class="r" style="left:535px;top:694px;width:22px;height:18px;background:#1f1f1f;"></div>
<div class="r" style="left:557px;top:694px;width:4px;height:18px;background:#e0303a;"></div>
<div class="r" style="left:561px;top:694px;width:103px;height:18px;background:#212121;"></div>
<div class="t" style="left:545.30px;top:700.00px;font-size:9.3px;color:#a8a8a8;font-weight:400;transform:translateX(-50%);-webkit-text-stroke:0.15px #a8a8a8;">9</div>
<div class="t" style="left:568.50px;top:699.00px;font-size:9.5px;color:#a8a8a8;font-weight:400;-webkit-text-stroke:0.15px #a8a8a8;">Kick TheMath 3</div>
<div class="r" style="left:535px;top:712px;width:129px;height:1px;background:#121212;"></div>
<div class="r" style="left:535px;top:713px;width:22px;height:18px;background:#1f1f1f;"></div>
<div class="r" style="left:557px;top:713px;width:4px;height:18px;background:#f5c518;"></div>
<div class="r" style="left:561px;top:713px;width:103px;height:18px;background:#212121;"></div>
<div class="t" style="left:545.30px;top:719.00px;font-size:9.3px;color:#a8a8a8;font-weight:400;transform:translateX(-50%);-webkit-text-stroke:0.15px #a8a8a8;">10</div>
<div class="t" style="left:568.50px;top:718.00px;font-size:9.5px;color:#a8a8a8;font-weight:400;-webkit-text-stroke:0.15px #a8a8a8;">Snare TheMath 3</div>
<div class="r" style="left:535px;top:731px;width:129px;height:1px;background:#121212;"></div>
<div class="r" style="left:535px;top:732px;width:22px;height:18px;background:#1f1f1f;"></div>
<div class="r" style="left:557px;top:732px;width:4px;height:18px;background:#e03a80;"></div>
<div class="r" style="left:561px;top:732px;width:103px;height:18px;background:#212121;"></div>
<div class="t" style="left:545.30px;top:738.00px;font-size:9.3px;color:#a8a8a8;font-weight:400;transform:translateX(-50%);-webkit-text-stroke:0.15px #a8a8a8;">11</div>
<div class="t" style="left:568.50px;top:737.00px;font-size:9.5px;color:#a8a8a8;font-weight:400;-webkit-text-stroke:0.15px #a8a8a8;">Clap TheMath</div>
<div class="r" style="left:535px;top:750px;width:129px;height:1px;background:#121212;"></div>
<div class="r" style="left:535px;top:751px;width:22px;height:18px;background:#1f1f1f;"></div>
<div class="r" style="left:557px;top:751px;width:4px;height:18px;background:#f5c518;"></div>
<div class="r" style="left:561px;top:751px;width:103px;height:18px;background:#212121;"></div>
<div class="t" style="left:545.30px;top:757.00px;font-size:9.3px;color:#a8a8a8;font-weight:400;transform:translateX(-50%);-webkit-text-stroke:0.15px #a8a8a8;">12</div>
<div class="t" style="left:568.50px;top:756.00px;font-size:9.5px;color:#a8a8a8;font-weight:400;-webkit-text-stroke:0.15px #a8a8a8;">Snare TheMath 4</div>
<div class="r" style="left:535px;top:769px;width:129px;height:1px;background:#121212;"></div>
<div class="r" style="left:535px;top:770px;width:22px;height:18px;background:#1f1f1f;"></div>
<div class="r" style="left:557px;top:770px;width:4px;height:18px;background:#28c878;"></div>
<div class="r" style="left:561px;top:770px;width:103px;height:18px;background:#212121;"></div>
<div class="t" style="left:545.30px;top:776.00px;font-size:9.3px;color:#a8a8a8;font-weight:400;transform:translateX(-50%);-webkit-text-stroke:0.15px #a8a8a8;">13</div>
<div class="t" style="left:568.50px;top:775.00px;font-size:9.5px;color:#a8a8a8;font-weight:400;-webkit-text-stroke:0.15px #a8a8a8;">Crash TheMath</div>
<div class="r" style="left:535px;top:788px;width:129px;height:1px;background:#121212;"></div>
<div class="r" style="left:535px;top:789px;width:26px;height:18px;background:#00c8fa;"></div>
<div class="r" style="left:561px;top:789px;width:103px;height:18px;background:#262626;"></div>
<div class="t" style="left:545.80px;top:795.00px;font-size:9.3px;color:#08303e;font-weight:400;transform:translateX(-50%);-webkit-text-stroke:0.3px #08303e;">14</div>
<div class="t" style="left:568.50px;top:794.00px;font-size:9.5px;color:#f4f4f4;font-weight:400;-webkit-text-stroke:0.3px #f4f4f4;">Combo[1..heMath 1</div>
<div class="r" style="left:535px;top:807px;width:129px;height:1px;background:#121212;"></div>
<div class="r" style="left:535px;top:808px;width:22px;height:17px;background:#1f1f1f;"></div>
<div class="r" style="left:557px;top:808px;width:4px;height:17px;background:#20b8f0;"></div>
<div class="r" style="left:561px;top:808px;width:103px;height:17px;background:#212121;"></div>
<div class="t" style="left:545.30px;top:814.00px;font-size:9.3px;color:#a8a8a8;font-weight:400;transform:translateX(-50%);-webkit-text-stroke:0.15px #a8a8a8;">15</div>
<div class="t" style="left:568.50px;top:813.00px;font-size:9.5px;color:#a8a8a8;font-weight:400;-webkit-text-stroke:0.15px #a8a8a8;">Combo[1..heMath 2</div>
<div class="r" style="left:535px;top:825px;width:129px;height:1px;background:#121212;"></div>
<div class="r" style="left:535px;top:826px;width:22px;height:18px;background:#1f1f1f;"></div>
<div class="r" style="left:557px;top:826px;width:4px;height:18px;background:#20b8f0;"></div>
<div class="r" style="left:561px;top:826px;width:103px;height:18px;background:#212121;"></div>
<div class="t" style="left:545.30px;top:832.00px;font-size:9.3px;color:#a8a8a8;font-weight:400;transform:translateX(-50%);-webkit-text-stroke:0.15px #a8a8a8;">16</div>
<div class="t" style="left:568.50px;top:831.00px;font-size:9.5px;color:#a8a8a8;font-weight:400;-webkit-text-stroke:0.15px #a8a8a8;">Synth TheMath</div>
<div class="r" style="left:535px;top:844px;width:129px;height:1px;background:#121212;"></div>
<div class="r" style="left:664px;top:497px;width:1px;height:484px;background:#111;"></div>
<div class="r" style="left:665px;top:497px;width:1003px;height:19px;background:#181818;"></div>
<div class="t" style="left:674.60px;top:501.00px;font-size:9px;color:#9a9a9a;font-weight:400;-webkit-text-stroke:0.3px #9a9a9a;">Record</div>
<div class="t" style="left:724.40px;top:500.00px;font-size:9.7px;color:#f2f2f2;font-weight:400;-webkit-text-stroke:0.3px #f2f2f2;">Edit</div>
<div class="r" style="left:665px;top:516px;width:1003px;height:1px;background:#0e0e0e;"></div>
<div class="r" style="left:665px;top:517px;width:1003px;height:11px;background:#1c1c1c;"></div>
<div class="t" style="left:667.80px;top:518.00px;font-size:9.6px;color:#22b0e0;font-weight:400;-webkit-text-stroke:0.3px #22b0e0;">Combo[157] Am TheMath 1</div>
<div class="t" style="left:1612.50px;top:519.00px;font-size:9.3px;color:#b8b8b8;font-weight:400;">12.93s</div>
<svg class="s" style="left:1647px;top:517px;" width="14" height="12" viewBox="0 0 14 12"><circle cx="5" cy="6" r="3.8" fill="none" stroke="#aaa" stroke-width="1"/><circle cx="8.6" cy="6" r="3.8" fill="none" stroke="#aaa" stroke-width="1"/></svg>
<div class="r" style="left:665px;top:528px;width:1003px;height:15px;background:#1a1a1a;"></div>
<div class="r" style="left:664px;top:529px;width:1px;height:14px;background:#262626;"></div>
<div class="t" style="left:670.20px;top:534.00px;font-size:9px;color:#c4c4c4;font-weight:400;">1</div>
<div class="r" style="left:696px;top:528px;width:1px;height:3px;background:#777;"></div>
<div class="r" style="left:727px;top:528px;width:1px;height:3px;background:#777;"></div>
<div class="r" style="left:758px;top:528px;width:1px;height:3px;background:#777;"></div>
<div class="r" style="left:790px;top:529px;width:1px;height:14px;background:#262626;"></div>
<div class="t" style="left:795.50px;top:534.00px;font-size:9px;color:#c4c4c4;font-weight:400;">2</div>
<div class="r" style="left:821px;top:528px;width:1px;height:3px;background:#777;"></div>
<div class="r" style="left:852px;top:528px;width:1px;height:3px;background:#777;"></div>
<div class="r" style="left:884px;top:528px;width:1px;height:3px;background:#777;"></div>
<div class="r" style="left:915px;top:529px;width:1px;height:14px;background:#262626;"></div>
<div class="t" style="left:920.80px;top:534.00px;font-size:9px;color:#c4c4c4;font-weight:400;">3</div>
<div class="r" style="left:946px;top:528px;width:1px;height:3px;background:#777;"></div>
<div class="r" style="left:978px;top:528px;width:1px;height:3px;background:#777;"></div>
<div class="r" style="left:1009px;top:528px;width:1px;height:3px;background:#777;"></div>
<div class="r" style="left:1040px;top:529px;width:1px;height:14px;background:#262626;"></div>
<div class="t" style="left:1046.10px;top:534.00px;font-size:9px;color:#c4c4c4;font-weight:400;">4</div>
<div class="r" style="left:1072px;top:528px;width:1px;height:3px;background:#777;"></div>
<div class="r" style="left:1103px;top:528px;width:1px;height:3px;background:#777;"></div>
<div class="r" style="left:1134px;top:528px;width:1px;height:3px;background:#777;"></div>
<div class="r" style="left:1166px;top:529px;width:1px;height:14px;background:#262626;"></div>
<div class="t" style="left:1171.40px;top:534.00px;font-size:9px;color:#c4c4c4;font-weight:400;">5</div>
<div class="r" style="left:1197px;top:528px;width:1px;height:3px;background:#777;"></div>
<div class="r" style="left:1228px;top:528px;width:1px;height:3px;background:#777;"></div>
<div class="r" style="left:1260px;top:528px;width:1px;height:3px;background:#777;"></div>
<div class="r" style="left:1291px;top:529px;width:1px;height:14px;background:#262626;"></div>
<div class="t" style="left:1296.70px;top:534.00px;font-size:9px;color:#c4c4c4;font-weight:400;">6</div>
<div class="r" style="left:1322px;top:528px;width:1px;height:3px;background:#777;"></div>
<div class="r" style="left:1354px;top:528px;width:1px;height:3px;background:#777;"></div>
<div class="r" style="left:1385px;top:528px;width:1px;height:3px;background:#777;"></div>
<div class="r" style="left:1416px;top:529px;width:1px;height:14px;background:#262626;"></div>
<div class="t" style="left:1422.00px;top:534.00px;font-size:9px;color:#c4c4c4;font-weight:400;">7</div>
<div class="r" style="left:1448px;top:528px;width:1px;height:3px;background:#777;"></div>
<div class="r" style="left:1479px;top:528px;width:1px;height:3px;background:#777;"></div>
<div class="r" style="left:1510px;top:528px;width:1px;height:3px;background:#777;"></div>
<div class="r" style="left:1542px;top:529px;width:1px;height:14px;background:#262626;"></div>
<div class="t" style="left:1547.30px;top:534.00px;font-size:9px;color:#c4c4c4;font-weight:400;">8</div>
<div class="r" style="left:1573px;top:528px;width:1px;height:3px;background:#777;"></div>
<div class="r" style="left:1604px;top:528px;width:1px;height:3px;background:#777;"></div>
<div class="r" style="left:1635px;top:528px;width:1px;height:3px;background:#777;"></div>
<div class="r" style="left:665px;top:543px;width:1003px;height:326px;background:#333333;"></div>
<svg class="s" style="left:665px;top:543px;" width="1003" height="326" viewBox="0 0 1003 326"><path d="M1 22.2 L2 35.9 L3 37.7 L4 32.1 L5 35.8 L6 30.7 L7 33.3 L8 32.7 L9 35.3 L10 33.3 L11 34.5 L12 34.8 L13 28.0 L14 19.2 L15 27.0 L16 32.2 L17 35.1 L18 25.3 L19 36.2 L20 37.7 L21 35.4 L22 38.3 L23 39.4 L24 36.7 L25 40.3 L26 41.5 L27 47.1 L28 46.0 L29 47.2 L30 50.1 L31 46.5 L32 38.7 L33 47.1 L34 47.6 L35 47.1 L36 51.2 L37 49.0 L38 51.7 L39 50.2 L40 51.2 L41 51.7 L42 51.7 L43 53.4 L44 48.5 L45 51.6 L46 51.5 L47 49.5 L48 51.0 L49 49.0 L50 50.1 L51 51.8 L52 57.4 L53 58.1 L54 57.7 L55 59.9 L56 58.0 L57 58.7 L58 58.4 L59 55.7 L60 58.8 L61 57.3 L62 58.4 L63 58.7 L64 61.5 L65 62.6 L66 61.7 L67 62.1 L68 61.2 L69 62.7 L70 62.6 L71 58.5 L72 57.9 L73 60.0 L74 60.1 L75 58.4 L76 60.9 L77 59.3 L78 61.2 L79 59.5 L80 56.2 L81 59.4 L82 55.2 L83 59.1 L84 63.1 L85 62.1 L86 62.4 L87 62.7 L88 59.5 L89 57.9 L90 60.2 L91 60.1 L92 60.3 L93 59.3 L94 55.0 L95 58.2 L96 62.1 L97 63.0 L98 59.2 L99 54.8 L100 54.0 L101 56.0 L102 51.1 L103 50.1 L104 55.6 L105 53.2 L106 48.2 L107 51.7 L108 48.6 L109 53.3 L110 51.2 L111 46.0 L112 51.9 L113 44.5 L114 52.0 L115 52.6 L116 48.4 L117 51.2 L118 52.7 L119 56.4 L120 54.3 L121 56.7 L122 56.2 L123 57.8 L124 62.4 L125 60.7 L126 60.8 L127 57.9 L128 24.0 L129 32.5 L130 38.4 L131 28.8 L132 38.0 L133 34.3 L134 32.3 L135 29.8 L136 34.8 L137 39.0 L138 36.5 L139 39.9 L140 30.0 L141 43.1 L142 44.4 L143 41.3 L144 45.5 L145 46.3 L146 46.0 L147 45.0 L148 39.5 L149 46.2 L150 47.8 L151 46.3 L152 44.8 L153 48.4 L154 48.5 L155 48.5 L156 53.4 L157 56.6 L158 55.1 L159 53.2 L160 53.9 L161 51.0 L162 53.4 L163 55.5 L164 54.4 L165 52.6 L166 55.6 L167 52.7 L168 55.4 L169 55.4 L170 55.3 L171 55.1 L172 55.9 L173 55.9 L174 57.1 L175 57.8 L176 59.0 L177 57.6 L178 59.0 L179 59.6 L180 55.1 L181 58.9 L182 58.1 L183 62.4 L184 59.3 L185 59.6 L186 59.1 L187 61.7 L188 61.1 L189 60.4 L190 60.6 L191 59.3 L192 56.5 L193 58.8 L194 40.3 L195 38.9 L196 36.9 L197 32.1 L198 37.0 L199 29.8 L200 35.0 L201 35.6 L202 40.0 L203 36.3 L204 38.7 L205 34.6 L206 44.0 L207 38.6 L208 35.2 L209 42.2 L210 37.9 L211 44.8 L212 44.5 L213 46.2 L214 46.6 L215 46.2 L216 46.1 L217 44.9 L218 36.6 L219 40.9 L220 41.4 L221 41.9 L222 44.2 L223 46.6 L224 46.9 L225 47.3 L226 45.5 L227 46.1 L228 45.8 L229 45.1 L230 46.4 L231 47.8 L232 43.7 L233 46.3 L234 45.2 L235 47.9 L236 48.7 L237 48.3 L238 50.1 L239 48.3 L240 50.4 L241 54.2 L242 55.3 L243 54.2 L244 59.4 L245 58.7 L246 59.0 L247 59.9 L248 57.1 L249 54.1 L250 54.6 L251 58.5 L252 53.0 L253 50.0 L254 47.7 L255 45.0 L256 45.9 L257 39.4 L258 29.9 L259 34.4 L260 37.7 L261 35.7 L262 34.3 L263 38.7 L264 37.9 L265 38.4 L266 40.8 L267 39.7 L268 43.0 L269 45.2 L270 43.7 L271 37.6 L272 42.3 L273 41.4 L274 41.6 L275 39.1 L276 41.0 L277 41.0 L278 42.4 L279 42.5 L280 40.1 L281 47.2 L282 46.5 L283 40.3 L284 49.3 L285 49.0 L286 47.7 L287 47.7 L288 49.7 L289 49.2 L290 47.7 L291 45.0 L292 51.1 L293 49.3 L294 53.2 L295 54.7 L296 55.8 L297 53.9 L298 53.9 L299 53.4 L300 54.3 L301 55.6 L302 50.0 L303 56.5 L304 56.9 L305 56.6 L306 57.1 L307 54.2 L308 57.2 L309 58.0 L310 55.5 L311 54.0 L312 53.5 L313 54.8 L314 52.8 L315 54.0 L316 53.2 L317 46.4 L318 49.4 L319 47.6 L320 44.5 L321 45.7 L322 44.1 L323 48.9 L324 49.2 L325 46.3 L326 53.8 L327 56.4 L328 58.5 L329 58.3 L330 57.2 L331 57.3 L332 55.8 L333 55.8 L334 52.5 L335 55.6 L336 56.6 L337 54.2 L338 50.0 L339 54.7 L340 52.5 L341 60.8 L342 55.9 L343 55.6 L344 58.3 L345 59.8 L346 61.6 L347 62.5 L348 60.5 L349 61.0 L350 63.1 L351 61.5 L352 61.8 L353 61.1 L354 61.7 L355 61.2 L356 61.9 L357 63.4 L358 60.5 L359 61.0 L360 61.7 L361 62.3 L362 61.5 L363 63.2 L364 61.3 L365 59.5 L366 62.2 L367 61.2 L368 58.4 L369 59.1 L370 62.3 L371 61.0 L372 60.9 L373 57.2 L374 52.3 L375 53.7 L376 51.9 L377 46.3 L378 44.3 L379 37.5 L380 38.7 L381 34.3 L382 37.5 L383 36.1 L384 40.3 L385 41.2 L386 32.8 L387 39.1 L388 40.3 L389 39.4 L390 27.5 L391 37.9 L392 37.6 L393 41.8 L394 44.3 L395 42.5 L396 36.2 L397 43.5 L398 35.2 L399 43.6 L400 46.8 L401 49.6 L402 51.7 L403 47.6 L404 49.7 L405 49.6 L406 48.8 L407 47.0 L408 49.2 L409 47.5 L410 50.3 L411 43.8 L412 50.4 L413 50.5 L414 50.3 L415 47.2 L416 49.2 L417 51.8 L418 50.0 L419 49.7 L420 49.9 L421 47.2 L422 46.8 L423 49.2 L424 48.4 L425 40.8 L426 47.0 L427 45.1 L428 41.3 L429 45.4 L430 47.7 L431 36.0 L432 48.1 L433 42.0 L434 35.6 L435 38.2 L436 39.7 L437 34.8 L438 36.8 L439 29.3 L440 36.3 L441 40.7 L442 43.5 L443 44.6 L444 44.4 L445 41.5 L446 36.8 L447 31.9 L448 37.7 L449 40.7 L450 43.6 L451 46.2 L452 47.1 L453 49.4 L454 46.3 L455 51.7 L456 46.5 L457 42.4 L458 46.3 L459 50.7 L460 50.9 L461 51.8 L462 49.7 L463 50.4 L464 53.2 L465 57.4 L466 54.2 L467 56.9 L468 57.7 L469 57.4 L470 58.5 L471 57.8 L472 59.4 L473 59.0 L474 59.4 L475 61.4 L476 59.0 L477 58.0 L478 60.0 L479 58.5 L480 62.0 L481 61.2 L482 62.6 L483 65.4 L484 64.7 L485 65.5 L486 65.6 L487 65.6 L488 65.6 L489 63.1 L490 65.2 L491 66.2 L492 62.3 L493 64.2 L494 67.8 L495 66.2 L496 66.7 L497 67.2 L498 66.9 L499 56.3 L500 42.3 L501 30.2 L502 33.8 L503 32.4 L504 32.3 L505 35.2 L506 33.6 L507 36.0 L508 30.1 L509 24.6 L510 31.8 L511 23.6 L512 29.4 L513 32.7 L514 37.6 L515 39.8 L516 34.5 L517 29.2 L518 40.9 L519 38.9 L520 41.4 L521 39.5 L522 30.2 L523 41.2 L524 30.3 L525 39.6 L526 37.4 L527 40.9 L528 37.6 L529 43.7 L530 42.8 L531 44.4 L532 44.7 L533 45.7 L534 48.3 L535 48.8 L536 46.8 L537 45.6 L538 45.5 L539 40.2 L540 47.2 L541 47.7 L542 47.8 L543 48.4 L544 46.9 L545 45.1 L546 49.1 L547 47.4 L548 42.1 L549 50.8 L550 52.4 L551 53.0 L552 49.6 L553 53.4 L554 50.5 L555 53.8 L556 51.7 L557 48.1 L558 54.9 L559 49.1 L560 54.8 L561 54.6 L562 53.7 L563 48.6 L564 46.8 L565 52.1 L566 51.9 L567 51.1 L568 50.7 L569 48.5 L570 53.9 L571 56.4 L572 53.0 L573 53.1 L574 54.9 L575 54.2 L576 56.1 L577 51.9 L578 54.2 L579 53.7 L580 52.1 L581 55.5 L582 56.2 L583 55.4 L584 56.8 L585 55.9 L586 58.2 L587 58.1 L588 57.7 L589 55.9 L590 55.3 L591 56.1 L592 57.8 L593 57.4 L594 51.5 L595 48.2 L596 51.0 L597 50.6 L598 48.5 L599 40.3 L600 50.2 L601 51.9 L602 50.4 L603 46.6 L604 40.7 L605 41.8 L606 42.8 L607 42.7 L608 45.7 L609 45.7 L610 49.5 L611 48.3 L612 50.0 L613 50.9 L614 47.6 L615 50.7 L616 43.8 L617 53.7 L618 56.3 L619 55.2 L620 51.8 L621 53.0 L622 55.6 L623 56.2 L624 56.5 L625 57.7 L626 58.0 L627 57.3 L628 56.0 L629 31.0 L630 37.0 L631 38.6 L632 38.3 L633 32.7 L634 40.7 L635 40.6 L636 44.8 L637 44.5 L638 41.6 L639 46.5 L640 43.6 L641 43.8 L642 42.0 L643 43.5 L644 42.8 L645 37.4 L646 41.4 L647 42.9 L648 45.1 L649 45.4 L650 42.7 L651 46.0 L652 46.1 L653 47.1 L654 46.2 L655 46.7 L656 48.3 L657 44.7 L658 47.6 L659 49.1 L660 48.9 L661 50.2 L662 50.4 L663 50.7 L664 52.6 L665 49.8 L666 52.1 L667 51.9 L668 51.3 L669 55.8 L670 57.3 L671 61.1 L672 62.0 L673 60.9 L674 60.2 L675 60.4 L676 55.9 L677 58.8 L678 60.1 L679 60.1 L680 61.5 L681 62.7 L682 60.4 L683 61.5 L684 59.0 L685 60.9 L686 58.7 L687 60.1 L688 61.4 L689 57.6 L690 58.3 L691 36.7 L692 32.3 L693 36.9 L694 34.8 L695 25.7 L696 36.9 L697 41.5 L698 35.5 L699 42.3 L700 39.7 L701 34.0 L702 40.7 L703 42.9 L704 42.4 L705 42.2 L706 41.2 L707 42.5 L708 42.1 L709 42.3 L710 45.6 L711 49.9 L712 47.8 L713 48.6 L714 47.5 L715 50.7 L716 51.8 L717 50.6 L718 49.6 L719 52.0 L720 53.6 L721 52.7 L722 49.7 L723 54.0 L724 56.3 L725 54.7 L726 54.4 L727 56.8 L728 58.2 L729 55.0 L730 51.5 L731 54.6 L732 54.5 L733 54.6 L734 56.3 L735 60.4 L736 58.5 L737 58.5 L738 57.1 L739 56.1 L740 58.1 L741 61.7 L742 61.0 L743 60.0 L744 56.6 L745 61.2 L746 60.2 L747 62.3 L748 64.9 L749 64.1 L750 65.9 L751 65.1 L752 50.6 L753 41.4 L754 40.3 L755 41.5 L756 38.6 L757 41.9 L758 40.3 L759 35.7 L760 42.0 L761 44.3 L762 41.7 L763 45.2 L764 47.5 L765 45.0 L766 38.3 L767 40.9 L768 43.5 L769 46.5 L770 48.1 L771 48.7 L772 46.2 L773 47.8 L774 48.0 L775 48.7 L776 49.6 L777 45.5 L778 50.5 L779 53.9 L780 52.9 L781 51.8 L782 49.2 L783 52.9 L784 54.5 L785 54.1 L786 53.3 L787 55.1 L788 55.8 L789 58.2 L790 56.0 L791 57.9 L792 56.0 L793 57.3 L794 58.1 L795 58.4 L796 58.5 L797 57.2 L798 59.1 L799 57.5 L800 59.6 L801 52.6 L802 58.3 L803 61.2 L804 60.7 L805 56.9 L806 56.1 L807 54.5 L808 54.5 L809 54.4 L810 57.4 L811 52.6 L812 52.3 L813 48.6 L814 40.6 L815 40.3 L816 44.8 L817 39.6 L818 45.9 L819 48.5 L820 49.3 L821 49.2 L822 46.4 L823 47.8 L824 48.3 L825 46.1 L826 46.2 L827 42.0 L828 49.0 L829 49.0 L830 50.8 L831 47.0 L832 49.8 L833 52.6 L834 51.7 L835 50.7 L836 55.0 L837 50.3 L838 50.8 L839 50.3 L840 51.4 L841 50.4 L842 45.3 L843 50.8 L844 52.1 L845 53.4 L846 47.6 L847 49.0 L848 48.0 L849 49.4 L850 48.7 L851 51.1 L852 46.5 L853 48.3 L854 46.7 L855 52.6 L856 50.8 L857 46.0 L858 53.9 L859 56.2 L860 57.6 L861 59.0 L862 54.9 L863 61.0 L864 60.1 L865 57.1 L866 60.0 L867 58.5 L868 61.5 L869 58.2 L870 53.6 L871 58.7 L872 59.0 L873 56.7 L874 56.9 L875 54.5 L876 60.1 L877 58.9 L878 56.8 L879 53.6 L880 58.8 L881 51.0 L882 17.6 L883 25.0 L884 20.8 L885 26.7 L886 24.4 L887 36.1 L888 36.4 L889 29.9 L890 32.8 L891 36.3 L892 39.6 L893 38.0 L894 36.5 L895 39.9 L896 40.9 L897 39.1 L898 33.8 L899 40.4 L900 39.1 L901 38.9 L902 43.6 L903 43.9 L904 45.7 L905 40.9 L906 38.3 L907 38.7 L908 43.0 L909 45.3 L910 47.6 L911 47.0 L912 49.1 L913 49.0 L914 46.0 L915 46.7 L916 43.0 L917 46.3 L918 50.0 L919 51.4 L920 49.0 L921 46.9 L922 51.9 L923 51.0 L924 48.7 L925 45.1 L926 47.9 L927 50.7 L928 50.3 L929 50.0 L930 44.8 L931 46.6 L932 45.0 L933 51.2 L934 48.0 L935 52.2 L936 53.2 L937 50.0 L938 51.8 L939 49.6 L940 53.5 L941 53.8 L942 50.8 L943 46.8 L944 29.1 L945 29.2 L946 35.3 L947 34.6 L948 35.6 L949 35.3 L950 35.2 L951 37.5 L952 41.0 L953 39.8 L954 44.6 L955 41.0 L956 33.3 L957 40.4 L958 46.4 L959 41.3 L960 44.9 L961 41.7 L962 44.2 L963 45.7 L964 42.9 L965 43.3 L966 41.4 L967 46.9 L968 48.5 L969 42.6 L970 45.7 L971 47.6 L972 50.6 L973 51.8 L974 55.1 L975 54.0 L976 54.3 L977 49.7 L978 55.7 L979 57.2 L980 57.8 L981 57.4 L982 53.4 L983 58.0 L984 61.4 L985 57.2 L986 57.2 L987 60.4 L988 59.3 L989 61.0 L990 61.5 L991 59.7 L992 62.9 L993 63.3 L994 61.7 L995 65.6 L996 63.9 L997 65.2 L998 65.0 L999 65.2 L1000 65.7 L1001 61.8 L1002 66.1 L1002 103.3 L1001 104.0 L1000 102.9 L999 103.0 L998 102.2 L997 107.0 L996 102.7 L995 101.3 L994 105.1 L993 108.8 L992 105.4 L991 107.0 L990 106.0 L989 107.1 L988 109.0 L987 113.2 L986 108.3 L985 106.4 L984 110.7 L983 106.6 L982 105.5 L981 108.6 L980 108.4 L979 105.2 L978 109.7 L977 114.4 L976 110.3 L975 111.3 L974 111.6 L973 111.0 L972 111.2 L971 112.3 L970 113.5 L969 112.1 L968 118.5 L967 112.8 L966 115.8 L965 115.1 L964 113.4 L963 115.5 L962 119.3 L961 114.3 L960 113.1 L959 118.2 L958 115.7 L957 117.8 L956 121.3 L955 120.3 L954 132.3 L953 124.5 L952 128.3 L951 136.3 L950 137.0 L949 143.0 L948 135.7 L947 137.5 L946 138.0 L945 139.2 L944 119.1 L943 107.5 L942 107.7 L941 111.1 L940 104.4 L939 108.8 L938 110.7 L937 108.6 L936 113.3 L935 105.7 L934 105.8 L933 108.3 L932 113.7 L931 109.8 L930 107.2 L929 106.8 L928 110.9 L927 109.8 L926 112.5 L925 115.9 L924 114.3 L923 114.3 L922 114.7 L921 117.6 L920 115.8 L919 114.0 L918 117.6 L917 120.8 L916 117.4 L915 115.8 L914 122.3 L913 113.3 L912 117.6 L911 120.9 L910 125.5 L909 124.3 L908 119.4 L907 125.2 L906 127.2 L905 133.3 L904 129.1 L903 125.9 L902 132.9 L901 128.7 L900 128.9 L899 130.9 L898 130.0 L897 128.8 L896 134.5 L895 141.7 L894 138.3 L893 134.5 L892 136.7 L891 133.6 L890 138.6 L889 129.2 L888 145.3 L887 130.0 L886 139.1 L885 145.5 L884 146.1 L883 165.2 L882 133.9 L881 105.4 L880 101.9 L879 103.1 L878 105.7 L877 101.1 L876 101.3 L875 101.6 L874 106.4 L873 109.3 L872 107.6 L871 107.2 L870 106.5 L869 105.3 L868 104.8 L867 103.9 L866 107.0 L865 103.3 L864 103.9 L863 107.6 L862 112.1 L861 109.9 L860 108.0 L859 108.9 L858 113.7 L857 107.1 L856 109.2 L855 106.5 L854 105.9 L853 106.1 L852 106.4 L851 106.0 L850 108.5 L849 108.6 L848 108.8 L847 114.3 L846 109.6 L845 108.0 L844 108.0 L843 111.6 L842 107.2 L841 108.2 L840 109.7 L839 105.6 L838 112.4 L837 110.4 L836 110.6 L835 110.8 L834 111.1 L833 113.1 L832 110.9 L831 114.0 L830 116.4 L829 116.8 L828 120.5 L827 124.6 L826 131.2 L825 126.1 L824 125.8 L823 138.6 L822 133.8 L821 130.0 L820 124.6 L819 124.7 L818 115.3 L817 110.3 L816 102.9 L815 104.5 L814 101.8 L813 102.1 L812 103.2 L811 107.1 L810 110.4 L809 103.4 L808 105.5 L807 103.7 L806 102.3 L805 101.7 L804 103.7 L803 106.1 L802 108.0 L801 105.7 L800 107.5 L799 108.4 L798 110.3 L797 107.9 L796 104.6 L795 107.4 L794 108.1 L793 107.8 L792 103.7 L791 106.1 L790 106.3 L789 108.5 L788 110.1 L787 112.2 L786 113.3 L785 112.5 L784 116.5 L783 114.6 L782 113.4 L781 113.7 L780 118.0 L779 122.5 L778 119.0 L777 115.7 L776 119.2 L775 123.8 L774 125.8 L773 124.5 L772 130.4 L771 128.4 L770 129.6 L769 133.3 L768 132.0 L767 140.1 L766 145.6 L765 138.1 L764 143.6 L763 151.1 L762 146.2 L761 143.1 L760 135.3 L759 136.9 L758 139.2 L757 138.5 L756 152.4 L755 142.1 L754 136.3 L753 118.8 L752 99.4 L751 99.9 L750 98.9 L749 98.9 L748 100.7 L747 101.5 L746 103.4 L745 103.0 L744 101.5 L743 102.1 L742 106.7 L741 108.6 L740 111.5 L739 112.1 L738 107.9 L737 112.5 L736 109.5 L735 111.1 L734 111.7 L733 114.4 L732 114.1 L731 115.7 L730 121.2 L729 122.3 L728 126.6 L727 120.3 L726 122.9 L725 131.9 L724 120.6 L723 121.4 L722 121.6 L721 125.9 L720 124.5 L719 126.1 L718 132.3 L717 131.6 L716 130.4 L715 130.6 L714 132.5 L713 133.2 L712 134.6 L711 130.5 L710 132.1 L709 136.8 L708 134.8 L707 135.1 L706 135.9 L705 144.8 L704 142.0 L703 139.0 L702 139.6 L701 139.7 L700 137.8 L699 137.7 L698 151.2 L697 145.5 L696 140.2 L695 147.1 L694 139.5 L693 143.7 L692 145.4 L691 126.1 L690 109.9 L689 109.1 L688 110.1 L687 106.9 L686 108.4 L685 111.4 L684 105.6 L683 106.8 L682 107.4 L681 108.4 L680 105.9 L679 108.5 L678 105.8 L677 110.0 L676 110.3 L675 106.5 L674 110.9 L673 109.5 L672 108.5 L671 109.5 L670 109.3 L669 112.7 L668 110.3 L667 110.3 L666 112.9 L665 107.7 L664 109.5 L663 111.4 L662 113.8 L661 112.0 L660 113.2 L659 113.3 L658 114.2 L657 115.8 L656 113.2 L655 111.3 L654 112.8 L653 115.9 L652 120.0 L651 119.9 L650 112.4 L649 115.4 L648 119.8 L647 116.0 L646 119.3 L645 118.2 L644 119.9 L643 120.1 L642 119.5 L641 121.6 L640 120.6 L639 118.7 L638 120.8 L637 124.5 L636 121.7 L635 122.5 L634 125.9 L633 119.5 L632 118.2 L631 128.1 L630 122.2 L629 122.4 L628 110.2 L627 109.7 L626 102.4 L625 104.7 L624 107.6 L623 108.4 L622 105.6 L621 106.4 L620 106.4 L619 107.2 L618 108.6 L617 108.5 L616 111.8 L615 107.1 L614 106.6 L613 106.8 L612 104.5 L611 104.8 L610 107.8 L609 108.7 L608 104.5 L607 107.3 L606 106.8 L605 105.6 L604 110.1 L603 107.0 L602 109.8 L601 105.6 L600 104.6 L599 105.2 L598 105.8 L597 107.0 L596 110.6 L595 113.4 L594 105.4 L593 106.1 L592 108.6 L591 105.4 L590 106.0 L589 109.2 L588 108.9 L587 109.1 L586 111.2 L585 110.2 L584 110.1 L583 106.7 L582 105.8 L581 104.8 L580 107.7 L579 110.1 L578 110.3 L577 111.5 L576 112.4 L575 111.6 L574 113.5 L573 115.1 L572 114.9 L571 110.6 L570 110.1 L569 110.4 L568 109.6 L567 111.3 L566 110.5 L565 112.3 L564 111.6 L563 114.1 L562 114.9 L561 113.1 L560 113.7 L559 114.5 L558 114.3 L557 112.0 L556 115.3 L555 114.4 L554 114.1 L553 115.2 L552 114.2 L551 113.2 L550 114.5 L549 120.9 L548 115.5 L547 119.7 L546 115.1 L545 117.7 L544 120.4 L543 121.3 L542 115.0 L541 117.2 L540 118.9 L539 116.2 L538 118.6 L537 120.5 L536 119.0 L535 128.1 L534 125.8 L533 125.6 L532 124.0 L531 125.8 L530 129.1 L529 127.1 L528 142.0 L527 134.3 L526 131.1 L525 135.4 L524 142.8 L523 143.8 L522 139.6 L521 145.3 L520 137.9 L519 134.0 L518 137.1 L517 137.6 L516 141.9 L515 136.3 L514 147.1 L513 138.2 L512 138.0 L511 145.1 L510 136.1 L509 144.2 L508 137.1 L507 134.8 L506 140.2 L505 134.1 L504 144.9 L503 135.6 L502 128.4 L501 130.3 L500 93.9 L499 95.4 L498 95.6 L497 96.1 L496 98.6 L495 96.7 L494 96.6 L493 96.0 L492 96.2 L491 96.9 L490 98.8 L489 100.3 L488 99.3 L487 102.8 L486 98.3 L485 99.2 L484 99.2 L483 99.8 L482 102.1 L481 102.5 L480 103.3 L479 106.6 L478 103.5 L477 100.8 L476 105.0 L475 102.3 L474 106.3 L473 107.4 L472 103.3 L471 105.8 L470 107.9 L469 108.8 L468 112.5 L467 109.6 L466 107.9 L465 106.9 L464 108.0 L463 109.2 L462 107.4 L461 109.4 L460 111.7 L459 116.9 L458 110.6 L457 110.5 L456 113.1 L455 113.5 L454 110.9 L453 113.7 L452 110.6 L451 112.6 L450 113.9 L449 112.6 L448 112.4 L447 117.0 L446 117.0 L445 116.3 L444 116.1 L443 113.6 L442 118.8 L441 114.8 L440 115.7 L439 115.3 L438 112.5 L437 114.0 L436 117.1 L435 122.6 L434 123.7 L433 118.3 L432 119.0 L431 120.0 L430 118.3 L429 112.3 L428 117.3 L427 125.7 L426 118.4 L425 115.5 L424 118.1 L423 115.7 L422 116.5 L421 117.6 L420 122.8 L419 118.0 L418 126.5 L417 121.1 L416 118.7 L415 121.2 L414 121.5 L413 119.7 L412 119.2 L411 120.1 L410 119.0 L409 117.7 L408 119.1 L407 118.1 L406 121.8 L405 131.5 L404 123.1 L403 124.2 L402 125.0 L401 126.0 L400 125.9 L399 127.8 L398 135.4 L397 141.8 L396 135.0 L395 129.3 L394 130.9 L393 137.6 L392 145.4 L391 136.5 L390 131.4 L389 132.9 L388 142.1 L387 138.0 L386 150.1 L385 138.5 L384 148.9 L383 136.4 L382 140.1 L381 141.5 L380 147.4 L379 146.8 L378 141.0 L377 136.3 L376 137.7 L375 126.9 L374 121.0 L373 114.8 L372 110.3 L371 109.5 L370 108.9 L369 110.2 L368 107.1 L367 109.5 L366 106.4 L365 106.9 L364 108.7 L363 111.6 L362 111.9 L361 108.7 L360 111.7 L359 107.2 L358 110.5 L357 111.0 L356 109.2 L355 109.0 L354 114.7 L353 110.3 L352 109.3 L351 110.4 L350 111.5 L349 110.0 L348 107.8 L347 104.9 L346 108.1 L345 108.5 L344 109.7 L343 107.0 L342 112.3 L341 109.7 L340 112.9 L339 108.2 L338 110.8 L337 108.0 L336 109.4 L335 111.2 L334 105.9 L333 107.1 L332 105.9 L331 105.3 L330 105.9 L329 104.8 L328 106.1 L327 110.1 L326 106.7 L325 111.2 L324 107.1 L323 108.1 L322 109.9 L321 110.8 L320 115.0 L319 114.0 L318 110.5 L317 107.1 L316 108.5 L315 105.5 L314 107.1 L313 106.4 L312 113.2 L311 111.8 L310 109.2 L309 108.3 L308 110.7 L307 111.6 L306 116.5 L305 110.9 L304 109.0 L303 112.7 L302 112.7 L301 115.8 L300 114.5 L299 120.8 L298 118.8 L297 115.6 L296 117.1 L295 114.4 L294 120.2 L293 117.5 L292 115.5 L291 117.8 L290 121.2 L289 128.3 L288 120.9 L287 123.0 L286 124.5 L285 123.6 L284 127.3 L283 132.2 L282 125.9 L281 121.1 L280 124.8 L279 131.2 L278 125.5 L277 128.3 L276 129.0 L275 126.7 L274 128.2 L273 127.4 L272 129.3 L271 130.4 L270 134.9 L269 131.0 L268 135.3 L267 133.7 L266 130.7 L265 126.8 L264 129.0 L263 130.7 L262 132.3 L261 134.5 L260 147.7 L259 140.4 L258 137.4 L257 140.8 L256 138.1 L255 125.8 L254 118.4 L253 112.2 L252 110.2 L251 106.0 L250 112.6 L249 107.8 L248 111.0 L247 104.1 L246 107.1 L245 115.1 L244 110.9 L243 109.9 L242 109.3 L241 114.0 L240 113.3 L239 116.5 L238 115.5 L237 117.8 L236 115.4 L235 115.4 L234 116.5 L233 117.9 L232 117.8 L231 119.5 L230 123.8 L229 120.7 L228 127.3 L227 122.6 L226 123.0 L225 123.6 L224 123.6 L223 127.8 L222 129.1 L221 126.7 L220 130.3 L219 126.8 L218 125.8 L217 132.2 L216 128.8 L215 132.0 L214 136.8 L213 132.4 L212 133.9 L211 134.7 L210 134.2 L209 132.0 L208 140.1 L207 136.7 L206 133.3 L205 130.6 L204 130.0 L203 133.3 L202 140.0 L201 135.9 L200 155.7 L199 138.7 L198 140.6 L197 146.8 L196 146.1 L195 148.3 L194 141.3 L193 115.4 L192 111.5 L191 108.8 L190 107.8 L189 111.2 L188 106.5 L187 107.2 L186 107.5 L185 112.2 L184 109.9 L183 107.4 L182 107.7 L181 108.6 L180 114.2 L179 110.0 L178 109.2 L177 109.6 L176 109.3 L175 113.9 L174 112.0 L173 110.7 L172 106.9 L171 110.8 L170 114.2 L169 110.4 L168 115.5 L167 114.9 L166 117.3 L165 115.8 L164 113.5 L163 117.8 L162 116.6 L161 120.9 L160 123.6 L159 119.8 L158 121.2 L157 120.7 L156 124.6 L155 121.0 L154 119.4 L153 123.0 L152 124.8 L151 124.1 L150 123.9 L149 125.5 L148 123.2 L147 125.9 L146 124.4 L145 122.8 L144 131.6 L143 123.9 L142 124.7 L141 125.9 L140 125.5 L139 123.1 L138 125.8 L137 128.8 L136 129.8 L135 130.6 L134 139.8 L133 147.1 L132 141.5 L131 129.0 L130 144.3 L129 136.2 L128 137.8 L127 105.8 L126 102.0 L125 101.0 L124 101.4 L123 105.5 L122 107.2 L121 106.1 L120 106.7 L119 109.4 L118 105.0 L117 106.7 L116 107.6 L115 110.0 L114 108.1 L113 109.6 L112 108.1 L111 107.9 L110 107.4 L109 110.1 L108 111.0 L107 113.4 L106 108.9 L105 109.8 L104 113.0 L103 115.2 L102 111.0 L101 108.9 L100 117.8 L99 111.8 L98 116.1 L97 111.6 L96 109.4 L95 112.4 L94 116.0 L93 110.8 L92 111.1 L91 110.6 L90 111.9 L89 112.0 L88 112.3 L87 111.8 L86 113.2 L85 111.2 L84 109.2 L83 111.2 L82 110.3 L81 110.4 L80 108.9 L79 111.0 L78 115.9 L77 113.7 L76 111.1 L75 111.3 L74 110.2 L73 110.5 L72 109.8 L71 109.9 L70 111.5 L69 111.1 L68 113.3 L67 110.1 L66 116.0 L65 110.7 L64 110.5 L63 110.4 L62 111.9 L61 112.1 L60 110.9 L59 109.0 L58 107.7 L57 107.1 L56 116.2 L55 109.6 L54 108.9 L53 111.6 L52 112.7 L51 112.4 L50 114.4 L49 112.9 L48 117.2 L47 122.9 L46 117.0 L45 114.9 L44 116.2 L43 116.1 L42 113.2 L41 116.9 L40 119.1 L39 118.9 L38 121.0 L37 115.6 L36 114.5 L35 118.0 L34 117.4 L33 117.1 L32 123.2 L31 119.2 L30 120.8 L29 123.6 L28 121.5 L27 127.4 L26 125.0 L25 131.1 L24 129.1 L23 130.9 L22 132.7 L21 130.3 L20 133.5 L19 138.5 L18 138.7 L17 137.4 L16 139.6 L15 142.2 L14 137.0 L13 136.3 L12 136.4 L11 131.0 L10 134.5 L9 142.9 L8 137.0 L7 136.9 L6 140.5 L5 137.6 L4 133.1 L3 135.6 L2 142.8 L1 146.3 Z" fill="#00ccff"/><path d="M1 197.5 L2 198.7 L3 201.0 L4 204.4 L5 199.1 L6 187.3 L7 187.9 L8 202.4 L9 200.3 L10 192.4 L11 186.2 L12 193.3 L13 201.6 L14 200.5 L15 194.7 L16 200.5 L17 198.1 L18 197.8 L19 197.5 L20 196.3 L21 198.2 L22 200.9 L23 201.7 L24 197.7 L25 203.2 L26 197.4 L27 208.4 L28 207.6 L29 209.4 L30 209.9 L31 209.5 L32 208.1 L33 215.5 L34 208.1 L35 210.1 L36 207.2 L37 208.2 L38 210.6 L39 212.8 L40 211.7 L41 209.5 L42 212.9 L43 215.3 L44 214.3 L45 211.8 L46 215.3 L47 217.7 L48 217.4 L49 218.1 L50 219.9 L51 219.2 L52 220.5 L53 220.4 L54 221.2 L55 222.6 L56 221.7 L57 223.5 L58 222.1 L59 218.1 L60 221.4 L61 223.4 L62 222.4 L63 225.6 L64 221.3 L65 222.8 L66 223.3 L67 222.7 L68 223.5 L69 222.4 L70 223.7 L71 223.5 L72 225.7 L73 225.2 L74 226.1 L75 224.8 L76 221.8 L77 225.8 L78 223.9 L79 222.6 L80 222.5 L81 224.2 L82 221.5 L83 220.4 L84 222.9 L85 219.3 L86 221.4 L87 223.8 L88 224.7 L89 219.6 L90 225.3 L91 224.3 L92 224.0 L93 223.6 L94 223.0 L95 223.0 L96 223.0 L97 225.0 L98 221.7 L99 219.1 L100 221.9 L101 218.7 L102 221.2 L103 217.6 L104 219.5 L105 219.9 L106 218.4 L107 214.6 L108 216.5 L109 217.7 L110 215.1 L111 216.6 L112 211.1 L113 216.8 L114 220.0 L115 218.4 L116 218.6 L117 220.5 L118 220.6 L119 217.5 L120 219.9 L121 220.6 L122 222.1 L123 225.1 L124 227.3 L125 225.3 L126 220.6 L127 224.3 L128 189.7 L129 183.2 L130 192.6 L131 199.5 L132 196.2 L133 190.3 L134 195.5 L135 205.3 L136 204.9 L137 200.3 L138 196.9 L139 204.4 L140 206.2 L141 209.1 L142 208.9 L143 211.7 L144 212.1 L145 206.3 L146 211.8 L147 212.8 L148 215.7 L149 213.8 L150 214.9 L151 214.8 L152 209.5 L153 209.6 L154 212.5 L155 214.0 L156 214.0 L157 213.5 L158 209.3 L159 213.6 L160 215.7 L161 217.5 L162 218.3 L163 220.2 L164 218.2 L165 216.3 L166 219.3 L167 220.0 L168 220.9 L169 220.0 L170 220.3 L171 221.6 L172 221.8 L173 222.1 L174 223.1 L175 221.6 L176 223.6 L177 220.7 L178 224.5 L179 222.5 L180 225.1 L181 225.1 L182 224.4 L183 224.9 L184 225.9 L185 224.7 L186 226.1 L187 224.3 L188 221.1 L189 223.1 L190 220.5 L191 223.4 L192 222.8 L193 224.9 L194 201.9 L195 203.8 L196 203.1 L197 199.8 L198 206.6 L199 205.5 L200 205.6 L201 200.6 L202 204.5 L203 206.3 L204 206.7 L205 209.7 L206 208.9 L207 206.2 L208 204.8 L209 202.9 L210 207.6 L211 210.2 L212 204.5 L213 206.0 L214 201.6 L215 204.5 L216 210.1 L217 212.3 L218 210.7 L219 207.7 L220 211.0 L221 214.7 L222 211.5 L223 210.5 L224 207.4 L225 209.3 L226 200.8 L227 206.6 L228 210.8 L229 212.3 L230 209.9 L231 209.4 L232 210.6 L233 212.3 L234 212.5 L235 212.1 L236 211.0 L237 210.1 L238 215.4 L239 215.2 L240 211.5 L241 217.1 L242 220.8 L243 221.8 L244 217.9 L245 219.3 L246 216.2 L247 221.6 L248 222.1 L249 223.4 L250 222.5 L251 220.9 L252 218.5 L253 217.6 L254 217.9 L255 211.8 L256 208.4 L257 204.4 L258 200.4 L259 201.4 L260 193.0 L261 197.1 L262 203.1 L263 200.1 L264 195.2 L265 202.3 L266 203.8 L267 196.8 L268 201.4 L269 204.3 L270 198.8 L271 196.5 L272 203.2 L273 203.8 L274 198.2 L275 205.6 L276 207.3 L277 207.1 L278 208.5 L279 206.7 L280 207.7 L281 209.5 L282 208.4 L283 207.7 L284 206.0 L285 209.3 L286 214.2 L287 207.1 L288 213.0 L289 212.2 L290 214.4 L291 216.2 L292 215.4 L293 215.9 L294 217.4 L295 220.4 L296 216.7 L297 215.9 L298 212.7 L299 217.3 L300 219.7 L301 217.5 L302 220.6 L303 220.4 L304 220.4 L305 220.0 L306 219.4 L307 221.3 L308 216.2 L309 218.8 L310 218.6 L311 216.8 L312 216.2 L313 215.8 L314 215.2 L315 210.7 L316 214.5 L317 215.3 L318 213.0 L319 217.5 L320 216.3 L321 216.5 L322 215.6 L323 207.6 L324 217.8 L325 218.1 L326 214.0 L327 210.2 L328 213.2 L329 219.1 L330 219.6 L331 221.3 L332 223.1 L333 223.5 L334 221.1 L335 222.8 L336 220.6 L337 220.0 L338 219.3 L339 216.6 L340 219.7 L341 223.1 L342 222.1 L343 224.1 L344 219.6 L345 223.8 L346 220.9 L347 222.7 L348 219.8 L349 223.2 L350 220.0 L351 223.7 L352 223.9 L353 220.7 L354 223.8 L355 224.7 L356 227.6 L357 227.9 L358 228.4 L359 226.6 L360 225.9 L361 225.7 L362 224.6 L363 225.8 L364 227.5 L365 224.1 L366 229.0 L367 227.2 L368 223.7 L369 225.1 L370 224.0 L371 222.6 L372 224.4 L373 221.1 L374 217.1 L375 212.2 L376 210.5 L377 210.0 L378 205.6 L379 203.6 L380 205.2 L381 203.0 L382 206.7 L383 199.8 L384 199.3 L385 199.9 L386 204.3 L387 207.9 L388 206.0 L389 208.5 L390 208.5 L391 202.7 L392 208.2 L393 198.0 L394 209.6 L395 205.9 L396 206.0 L397 208.9 L398 205.0 L399 201.6 L400 208.1 L401 212.0 L402 203.0 L403 209.5 L404 207.9 L405 213.5 L406 211.7 L407 208.7 L408 206.5 L409 209.5 L410 209.9 L411 211.7 L412 209.6 L413 205.5 L414 211.5 L415 211.2 L416 206.1 L417 209.1 L418 213.6 L419 212.0 L420 208.7 L421 209.0 L422 210.4 L423 213.6 L424 213.6 L425 209.8 L426 210.7 L427 211.3 L428 210.9 L429 210.4 L430 207.6 L431 211.1 L432 207.3 L433 208.9 L434 205.4 L435 208.6 L436 202.8 L437 203.2 L438 199.4 L439 201.9 L440 199.9 L441 203.6 L442 203.2 L443 204.6 L444 205.9 L445 207.6 L446 203.7 L447 204.6 L448 208.8 L449 203.1 L450 208.2 L451 199.1 L452 208.2 L453 210.3 L454 210.0 L455 211.2 L456 211.7 L457 206.7 L458 212.0 L459 214.6 L460 216.5 L461 209.7 L462 215.9 L463 215.8 L464 218.3 L465 221.3 L466 220.7 L467 220.5 L468 220.3 L469 221.6 L470 222.4 L471 222.1 L472 222.1 L473 223.4 L474 223.6 L475 220.0 L476 224.2 L477 227.7 L478 227.0 L479 226.0 L480 227.0 L481 225.5 L482 226.7 L483 227.2 L484 227.1 L485 229.7 L486 230.2 L487 226.9 L488 231.2 L489 231.7 L490 230.0 L491 230.7 L492 229.8 L493 231.0 L494 231.3 L495 231.5 L496 231.5 L497 233.8 L498 231.6 L499 218.1 L500 198.9 L501 193.8 L502 196.3 L503 194.5 L504 198.0 L505 199.8 L506 198.2 L507 196.9 L508 193.7 L509 194.6 L510 186.8 L511 195.9 L512 201.9 L513 187.2 L514 196.2 L515 195.9 L516 192.1 L517 194.2 L518 199.8 L519 199.5 L520 199.7 L521 202.6 L522 198.0 L523 203.5 L524 203.2 L525 201.7 L526 195.4 L527 201.9 L528 207.6 L529 207.4 L530 206.8 L531 207.6 L532 208.4 L533 210.1 L534 207.4 L535 210.5 L536 211.8 L537 206.5 L538 201.2 L539 208.0 L540 210.4 L541 211.9 L542 211.6 L543 209.3 L544 214.7 L545 210.8 L546 211.0 L547 212.8 L548 214.9 L549 216.6 L550 217.8 L551 216.2 L552 215.5 L553 218.4 L554 214.2 L555 209.8 L556 214.1 L557 212.9 L558 216.9 L559 213.4 L560 221.2 L561 214.4 L562 221.1 L563 220.7 L564 217.7 L565 218.4 L566 217.6 L567 217.0 L568 219.2 L569 219.2 L570 216.5 L571 218.7 L572 219.7 L573 218.6 L574 215.2 L575 216.0 L576 218.3 L577 216.6 L578 218.2 L579 214.5 L580 215.2 L581 219.0 L582 219.2 L583 218.8 L584 219.4 L585 217.2 L586 222.5 L587 220.9 L588 215.7 L589 220.7 L590 222.2 L591 220.7 L592 214.4 L593 219.2 L594 217.3 L595 215.4 L596 216.2 L597 216.3 L598 218.3 L599 213.4 L600 205.4 L601 210.2 L602 205.1 L603 206.9 L604 205.4 L605 210.1 L606 209.3 L607 211.3 L608 204.4 L609 211.0 L610 204.1 L611 211.8 L612 212.8 L613 216.7 L614 217.5 L615 217.6 L616 219.3 L617 217.9 L618 219.7 L619 219.6 L620 220.5 L621 219.0 L622 213.9 L623 220.8 L624 222.1 L625 222.7 L626 219.1 L627 221.8 L628 220.6 L629 197.9 L630 203.3 L631 197.4 L632 200.5 L633 201.9 L634 203.3 L635 204.6 L636 205.1 L637 205.4 L638 201.0 L639 195.4 L640 205.0 L641 210.1 L642 201.8 L643 208.6 L644 206.2 L645 206.4 L646 208.1 L647 206.9 L648 210.1 L649 207.8 L650 207.5 L651 209.6 L652 213.0 L653 210.1 L654 207.1 L655 210.9 L656 211.5 L657 212.8 L658 211.4 L659 211.6 L660 212.6 L661 213.7 L662 213.3 L663 213.5 L664 213.4 L665 214.8 L666 216.7 L667 218.7 L668 218.6 L669 218.9 L670 217.0 L671 220.0 L672 221.5 L673 220.5 L674 223.3 L675 224.2 L676 224.2 L677 222.1 L678 224.8 L679 218.6 L680 225.1 L681 223.5 L682 217.6 L683 223.3 L684 225.3 L685 222.1 L686 222.6 L687 222.5 L688 223.1 L689 223.3 L690 221.6 L691 199.3 L692 205.0 L693 201.9 L694 207.1 L695 207.0 L696 208.4 L697 206.2 L698 209.7 L699 203.7 L700 202.2 L701 195.8 L702 204.4 L703 202.7 L704 207.4 L705 203.6 L706 206.8 L707 203.5 L708 205.3 L709 207.8 L710 198.7 L711 206.3 L712 210.7 L713 208.9 L714 209.9 L715 209.1 L716 204.2 L717 208.1 L718 203.3 L719 206.1 L720 214.3 L721 212.8 L722 212.0 L723 213.0 L724 214.4 L725 218.0 L726 218.6 L727 217.5 L728 216.4 L729 217.3 L730 219.2 L731 216.6 L732 215.6 L733 221.9 L734 220.0 L735 218.7 L736 221.5 L737 218.9 L738 218.9 L739 223.8 L740 220.4 L741 224.6 L742 225.6 L743 225.9 L744 224.8 L745 226.6 L746 225.1 L747 227.4 L748 223.8 L749 225.8 L750 227.0 L751 227.2 L752 213.1 L753 202.9 L754 200.3 L755 201.3 L756 206.3 L757 203.1 L758 208.6 L759 203.0 L760 199.3 L761 207.2 L762 207.9 L763 197.7 L764 200.5 L765 210.2 L766 205.4 L767 214.3 L768 211.9 L769 212.7 L770 211.0 L771 210.6 L772 212.3 L773 213.9 L774 213.9 L775 215.7 L776 216.2 L777 215.0 L778 216.0 L779 216.4 L780 219.4 L781 217.3 L782 219.3 L783 214.4 L784 212.6 L785 214.3 L786 214.6 L787 218.0 L788 218.0 L789 221.0 L790 221.6 L791 221.8 L792 220.1 L793 221.1 L794 221.5 L795 221.4 L796 223.2 L797 222.0 L798 221.9 L799 223.6 L800 222.1 L801 220.7 L802 220.2 L803 221.3 L804 220.9 L805 221.5 L806 223.2 L807 222.2 L808 219.7 L809 220.3 L810 210.0 L811 215.9 L812 216.2 L813 214.4 L814 211.0 L815 210.7 L816 207.6 L817 207.6 L818 210.1 L819 208.3 L820 207.2 L821 204.4 L822 209.7 L823 211.7 L824 212.8 L825 211.3 L826 205.9 L827 211.4 L828 212.8 L829 214.8 L830 215.2 L831 216.7 L832 215.4 L833 213.4 L834 215.2 L835 215.8 L836 215.5 L837 210.8 L838 217.7 L839 216.3 L840 212.0 L841 215.7 L842 211.0 L843 214.6 L844 213.4 L845 206.2 L846 213.6 L847 212.3 L848 212.7 L849 208.3 L850 208.3 L851 211.3 L852 214.8 L853 212.4 L854 216.2 L855 218.1 L856 219.1 L857 220.3 L858 223.9 L859 222.2 L860 222.6 L861 224.1 L862 224.7 L863 221.4 L864 221.1 L865 223.6 L866 221.2 L867 220.5 L868 221.7 L869 223.3 L870 218.0 L871 223.9 L872 217.8 L873 220.9 L874 222.8 L875 219.0 L876 223.4 L877 220.5 L878 214.4 L879 218.6 L880 219.8 L881 217.5 L882 188.9 L883 194.4 L884 196.4 L885 190.0 L886 193.3 L887 191.3 L888 189.5 L889 183.7 L890 195.7 L891 203.3 L892 208.4 L893 205.0 L894 205.6 L895 204.3 L896 198.9 L897 198.2 L898 200.6 L899 205.4 L900 207.3 L901 201.9 L902 208.6 L903 205.2 L904 208.2 L905 206.7 L906 209.1 L907 205.8 L908 204.7 L909 204.2 L910 201.3 L911 204.1 L912 209.0 L913 215.0 L914 213.5 L915 210.2 L916 207.4 L917 212.0 L918 209.7 L919 214.4 L920 212.8 L921 210.4 L922 213.0 L923 211.8 L924 211.3 L925 214.8 L926 216.3 L927 215.8 L928 213.6 L929 218.1 L930 216.1 L931 216.8 L932 215.1 L933 214.9 L934 212.4 L935 214.6 L936 216.8 L937 219.3 L938 214.7 L939 218.9 L940 220.8 L941 219.6 L942 219.1 L943 220.0 L944 198.3 L945 195.3 L946 202.2 L947 199.5 L948 195.4 L949 196.8 L950 202.7 L951 203.2 L952 198.1 L953 205.2 L954 209.0 L955 205.8 L956 205.2 L957 207.3 L958 209.3 L959 208.2 L960 207.2 L961 212.2 L962 207.5 L963 213.1 L964 212.8 L965 214.4 L966 213.2 L967 212.8 L968 211.8 L969 215.6 L970 215.9 L971 212.7 L972 207.2 L973 215.2 L974 217.2 L975 217.4 L976 218.0 L977 219.4 L978 220.0 L979 219.6 L980 218.4 L981 217.7 L982 220.3 L983 223.1 L984 225.3 L985 221.5 L986 223.6 L987 224.6 L988 224.3 L989 225.4 L990 226.3 L991 228.0 L992 228.8 L993 227.5 L994 230.0 L995 229.5 L996 228.7 L997 229.4 L998 228.5 L999 229.7 L1000 230.1 L1001 227.0 L1002 230.9 L1002 265.5 L1001 269.1 L1000 266.8 L999 271.1 L998 270.2 L997 272.0 L996 271.0 L995 265.8 L994 269.8 L993 269.6 L992 270.3 L991 271.6 L990 270.5 L989 269.2 L988 270.1 L987 269.4 L986 270.5 L985 272.6 L984 270.1 L983 273.4 L982 270.9 L981 272.9 L980 270.9 L979 271.7 L978 270.7 L977 272.8 L976 274.4 L975 277.5 L974 274.2 L973 276.2 L972 275.7 L971 274.6 L970 274.9 L969 278.5 L968 278.1 L967 279.6 L966 278.5 L965 277.2 L964 278.6 L963 282.1 L962 283.2 L961 283.0 L960 286.1 L959 281.6 L958 284.4 L957 283.5 L956 282.3 L955 285.4 L954 285.9 L953 290.5 L952 290.4 L951 291.0 L950 293.6 L949 303.0 L948 297.5 L947 290.4 L946 292.8 L945 296.0 L944 290.7 L943 271.3 L942 267.9 L941 269.6 L940 269.4 L939 270.2 L938 268.4 L937 270.2 L936 270.4 L935 271.8 L934 271.6 L933 272.7 L932 274.8 L931 280.1 L930 277.8 L929 278.6 L928 275.2 L927 274.2 L926 274.7 L925 275.6 L924 279.4 L923 275.5 L922 273.8 L921 273.9 L920 274.5 L919 276.2 L918 284.0 L917 280.6 L916 280.4 L915 278.2 L914 279.0 L913 276.1 L912 279.4 L911 282.1 L910 281.1 L909 280.2 L908 282.8 L907 284.0 L906 285.7 L905 291.8 L904 286.2 L903 286.2 L902 295.0 L901 291.4 L900 286.0 L899 288.7 L898 289.5 L897 291.6 L896 292.8 L895 295.5 L894 297.8 L893 297.1 L892 299.4 L891 292.0 L890 296.1 L889 302.9 L888 295.1 L887 298.8 L886 303.4 L885 303.7 L884 307.6 L883 303.6 L882 285.6 L881 267.4 L880 266.1 L879 269.0 L878 266.4 L877 266.0 L876 268.5 L875 267.0 L874 269.0 L873 268.5 L872 266.0 L871 267.5 L870 266.6 L869 269.4 L868 268.1 L867 271.8 L866 271.2 L865 267.6 L864 266.7 L863 269.7 L862 269.3 L861 269.5 L860 271.2 L859 271.9 L858 269.3 L857 273.3 L856 269.7 L855 271.3 L854 276.0 L853 273.0 L852 274.0 L851 276.9 L850 272.3 L849 271.1 L848 268.6 L847 271.1 L846 276.0 L845 273.1 L844 270.6 L843 271.4 L842 274.2 L841 274.7 L840 273.6 L839 282.2 L838 278.2 L837 281.6 L836 276.0 L835 273.1 L834 276.2 L833 274.6 L832 276.5 L831 279.4 L830 279.5 L829 283.9 L828 283.2 L827 284.6 L826 289.2 L825 287.9 L824 283.8 L823 289.6 L822 288.9 L821 288.1 L820 283.5 L819 281.7 L818 274.7 L817 271.0 L816 266.0 L815 265.4 L814 267.4 L813 264.5 L812 267.5 L811 267.2 L810 269.7 L809 271.9 L808 269.4 L807 269.3 L806 270.3 L805 271.8 L804 267.6 L803 269.1 L802 273.2 L801 270.1 L800 269.8 L799 270.6 L798 271.1 L797 269.3 L796 270.5 L795 270.7 L794 271.9 L793 271.1 L792 270.8 L791 269.2 L790 271.1 L789 269.2 L788 270.6 L787 273.9 L786 276.8 L785 275.3 L784 273.7 L783 276.9 L782 278.7 L781 278.1 L780 281.3 L779 276.9 L778 282.3 L777 285.8 L776 284.8 L775 285.1 L774 287.0 L773 293.0 L772 285.7 L771 287.0 L770 291.0 L769 293.4 L768 288.7 L767 290.4 L766 287.6 L765 288.6 L764 295.1 L763 303.0 L762 296.4 L761 311.9 L760 301.5 L759 312.0 L758 305.4 L757 315.8 L756 312.6 L755 313.9 L754 304.2 L753 282.0 L752 261.8 L751 264.1 L750 264.8 L749 263.5 L748 265.8 L747 265.5 L746 265.4 L745 263.2 L744 264.3 L743 265.6 L742 271.6 L741 270.1 L740 270.3 L739 271.2 L738 274.0 L737 275.9 L736 275.4 L735 272.6 L734 275.0 L733 280.2 L732 276.8 L731 280.7 L730 281.3 L729 285.2 L728 282.0 L727 283.2 L726 284.4 L725 282.8 L724 283.4 L723 289.0 L722 286.7 L721 286.8 L720 292.1 L719 294.8 L718 291.3 L717 292.8 L716 287.1 L715 291.4 L714 287.8 L713 289.2 L712 291.4 L711 288.9 L710 291.1 L709 293.4 L708 302.4 L707 294.6 L706 291.7 L705 293.0 L704 294.2 L703 298.9 L702 298.4 L701 302.9 L700 298.2 L699 302.9 L698 298.2 L697 298.7 L696 299.6 L695 302.9 L694 294.8 L693 296.9 L692 299.6 L691 287.8 L690 270.5 L689 268.1 L688 273.5 L687 268.0 L686 267.2 L685 268.9 L684 273.3 L683 275.7 L682 277.0 L681 270.8 L680 271.0 L679 269.2 L678 270.2 L677 269.1 L676 270.6 L675 272.0 L674 273.3 L673 270.7 L672 271.0 L671 271.3 L670 271.3 L669 271.9 L668 273.1 L667 271.1 L666 272.7 L665 274.7 L664 279.3 L663 278.8 L662 277.1 L661 278.4 L660 276.5 L659 279.1 L658 278.9 L657 275.4 L656 277.4 L655 276.0 L654 280.5 L653 278.0 L652 276.1 L651 276.6 L650 277.2 L649 279.4 L648 281.9 L647 286.6 L646 282.7 L645 278.8 L644 280.7 L643 279.2 L642 279.7 L641 290.4 L640 281.3 L639 284.1 L638 283.1 L637 285.6 L636 281.8 L635 282.9 L634 285.9 L633 283.7 L632 285.0 L631 291.4 L630 292.0 L629 287.6 L628 271.6 L627 272.7 L626 270.9 L625 273.1 L624 270.0 L623 276.7 L622 272.8 L621 273.8 L620 270.6 L619 270.3 L618 271.4 L617 270.0 L616 269.9 L615 271.1 L614 276.0 L613 270.6 L612 270.8 L611 269.6 L610 271.7 L609 271.8 L608 271.2 L607 272.4 L606 271.0 L605 275.3 L604 275.1 L603 274.8 L602 270.3 L601 270.9 L600 272.3 L599 271.1 L598 273.5 L597 270.4 L596 271.3 L595 273.5 L594 275.8 L593 272.5 L592 274.6 L591 273.0 L590 274.1 L589 270.2 L588 271.5 L587 271.2 L586 269.7 L585 273.1 L584 269.8 L583 270.8 L582 271.8 L581 270.8 L580 272.7 L579 270.9 L578 272.7 L577 272.4 L576 274.6 L575 272.1 L574 274.6 L573 274.4 L572 272.2 L571 274.1 L570 273.1 L569 274.0 L568 272.8 L567 273.0 L566 276.5 L565 275.0 L564 275.3 L563 272.9 L562 274.2 L561 275.5 L560 278.0 L559 278.1 L558 277.8 L557 279.2 L556 282.8 L555 276.3 L554 275.9 L553 278.6 L552 280.6 L551 278.5 L550 277.7 L549 279.7 L548 279.2 L547 279.3 L546 277.6 L545 281.7 L544 280.3 L543 280.6 L542 279.0 L541 277.9 L540 281.1 L539 279.1 L538 281.3 L537 280.8 L536 280.0 L535 282.2 L534 284.2 L533 285.5 L532 288.9 L531 289.4 L530 288.9 L529 289.8 L528 291.0 L527 291.7 L526 289.9 L525 295.3 L524 298.3 L523 293.6 L522 292.5 L521 293.8 L520 296.8 L519 298.2 L518 299.2 L517 296.1 L516 291.1 L515 289.6 L514 290.7 L513 292.3 L512 291.9 L511 295.7 L510 299.0 L509 296.9 L508 289.0 L507 295.4 L506 290.3 L505 293.1 L504 300.4 L503 294.9 L502 300.9 L501 309.9 L500 262.5 L499 260.6 L498 259.2 L497 258.0 L496 259.2 L495 259.7 L494 262.3 L493 261.6 L492 260.8 L491 263.5 L490 262.5 L489 261.2 L488 261.6 L487 262.4 L486 262.8 L485 263.3 L484 264.3 L483 263.4 L482 268.0 L481 264.3 L480 264.3 L479 267.8 L478 268.3 L477 268.7 L476 269.0 L475 269.3 L474 269.3 L473 269.0 L472 268.1 L471 268.6 L470 268.8 L469 270.8 L468 269.3 L467 273.3 L466 270.8 L465 273.0 L464 270.8 L463 269.7 L462 271.6 L461 270.6 L460 272.5 L459 272.3 L458 271.3 L457 273.0 L456 276.9 L455 275.3 L454 281.1 L453 277.3 L452 282.4 L451 275.5 L450 279.2 L449 277.4 L448 279.6 L447 277.6 L446 273.4 L445 281.3 L444 272.1 L443 272.2 L442 278.4 L441 276.0 L440 282.2 L439 278.2 L438 281.8 L437 282.8 L436 281.6 L435 278.1 L434 278.4 L433 275.9 L432 276.1 L431 275.9 L430 274.3 L429 277.1 L428 278.5 L427 281.5 L426 280.6 L425 281.7 L424 283.4 L423 280.8 L422 283.3 L421 283.4 L420 281.2 L419 280.4 L418 279.8 L417 278.6 L416 283.0 L415 280.6 L414 282.2 L413 286.6 L412 280.0 L411 284.6 L410 283.6 L409 283.0 L408 278.6 L407 276.8 L406 286.5 L405 279.7 L404 282.2 L403 286.7 L402 296.4 L401 290.0 L400 290.0 L399 288.0 L398 288.1 L397 299.7 L396 288.9 L395 288.2 L394 292.2 L393 294.7 L392 289.5 L391 296.2 L390 296.8 L389 298.6 L388 303.8 L387 298.6 L386 296.3 L385 297.6 L384 299.9 L383 301.5 L382 312.0 L381 302.7 L380 303.4 L379 300.2 L378 300.9 L377 300.0 L376 304.3 L375 296.4 L374 285.1 L373 278.3 L372 276.0 L371 270.9 L370 270.0 L369 272.7 L368 277.2 L367 272.2 L366 273.8 L365 276.3 L364 272.8 L363 272.7 L362 269.7 L361 271.4 L360 275.2 L359 271.7 L358 270.0 L357 272.4 L356 270.4 L355 272.4 L354 270.1 L353 270.4 L352 270.0 L351 271.6 L350 275.0 L349 270.3 L348 271.1 L347 272.9 L346 270.1 L345 270.6 L344 275.5 L343 275.5 L342 270.4 L341 275.9 L340 271.1 L339 273.2 L338 271.4 L337 270.6 L336 276.2 L335 273.0 L334 272.5 L333 272.8 L332 274.5 L331 274.8 L330 273.3 L329 272.4 L328 271.1 L327 271.7 L326 271.4 L325 275.1 L324 271.6 L323 269.5 L322 273.8 L321 273.7 L320 274.0 L319 273.7 L318 274.1 L317 269.3 L316 267.8 L315 268.2 L314 267.5 L313 269.6 L312 271.1 L311 276.0 L310 268.8 L309 270.0 L308 271.0 L307 276.4 L306 277.7 L305 276.9 L304 276.2 L303 274.7 L302 276.8 L301 277.4 L300 277.4 L299 274.7 L298 279.4 L297 278.1 L296 276.9 L295 279.1 L294 276.0 L293 280.7 L292 281.8 L291 279.5 L290 281.5 L289 283.7 L288 282.6 L287 285.1 L286 281.0 L285 281.0 L284 282.7 L283 284.1 L282 287.9 L281 291.5 L280 291.0 L279 293.6 L278 288.4 L277 289.4 L276 287.7 L275 293.8 L274 288.7 L273 287.4 L272 285.7 L271 291.4 L270 298.2 L269 301.4 L268 297.5 L267 290.1 L266 291.3 L265 288.7 L264 294.0 L263 303.1 L262 297.9 L261 300.4 L260 296.0 L259 303.5 L258 299.8 L257 304.8 L256 292.6 L255 293.5 L254 281.8 L253 285.7 L252 274.6 L251 272.1 L250 269.8 L249 274.2 L248 271.8 L247 268.4 L246 268.6 L245 274.5 L244 273.3 L243 274.7 L242 273.6 L241 277.5 L240 273.2 L239 276.4 L238 275.9 L237 280.0 L236 278.8 L235 281.2 L234 283.5 L233 286.4 L232 286.3 L231 291.8 L230 286.3 L229 290.2 L228 292.3 L227 282.0 L226 282.1 L225 285.8 L224 292.2 L223 288.5 L222 286.8 L221 287.5 L220 292.9 L219 298.3 L218 292.8 L217 289.6 L216 290.8 L215 291.5 L214 292.9 L213 289.9 L212 290.9 L211 288.9 L210 302.6 L209 295.2 L208 294.4 L207 293.3 L206 295.5 L205 290.2 L204 290.7 L203 294.0 L202 294.9 L201 298.8 L200 310.6 L199 300.0 L198 304.5 L197 304.7 L196 304.2 L195 301.1 L194 297.4 L193 266.2 L192 269.0 L191 272.4 L190 271.1 L189 271.4 L188 271.9 L187 274.8 L186 270.7 L185 272.1 L184 275.7 L183 273.7 L182 268.9 L181 272.6 L180 277.9 L179 275.4 L178 273.5 L177 274.1 L176 275.2 L175 276.5 L174 273.9 L173 276.6 L172 277.2 L171 274.2 L170 273.6 L169 275.6 L168 279.4 L167 279.6 L166 278.1 L165 280.3 L164 278.8 L163 277.3 L162 282.6 L161 282.9 L160 280.8 L159 285.1 L158 286.2 L157 284.2 L156 289.6 L155 287.0 L154 283.5 L153 283.7 L152 291.3 L151 287.1 L150 286.8 L149 295.2 L148 295.6 L147 286.3 L146 284.7 L145 288.8 L144 292.1 L143 295.2 L142 289.3 L141 289.5 L140 287.3 L139 291.4 L138 293.2 L137 292.8 L136 294.5 L135 291.0 L134 291.2 L133 293.2 L132 291.8 L131 299.4 L130 306.1 L129 303.3 L128 310.0 L127 270.0 L126 266.2 L125 268.0 L124 270.0 L123 266.0 L122 264.8 L121 268.1 L120 268.8 L119 267.8 L118 269.2 L117 270.8 L116 270.8 L115 271.8 L114 274.7 L113 275.3 L112 273.4 L111 272.7 L110 275.1 L109 272.3 L108 274.7 L107 272.6 L106 272.1 L105 277.7 L104 284.1 L103 278.9 L102 274.2 L101 274.0 L100 274.6 L99 278.7 L98 275.6 L97 274.0 L96 278.2 L95 273.5 L94 275.0 L93 270.1 L92 274.6 L91 273.5 L90 271.8 L89 271.6 L88 273.3 L87 272.9 L86 274.1 L85 275.2 L84 274.1 L83 281.1 L82 275.5 L81 276.1 L80 274.1 L79 275.6 L78 273.1 L77 273.8 L76 278.7 L75 274.0 L74 273.7 L73 275.7 L72 276.0 L71 279.2 L70 275.5 L69 274.9 L68 275.7 L67 275.8 L66 274.1 L65 276.1 L64 277.5 L63 275.3 L62 276.3 L61 276.3 L60 274.9 L59 272.4 L58 273.0 L57 279.9 L56 273.7 L55 274.4 L54 274.0 L53 279.5 L52 275.2 L51 281.8 L50 277.1 L49 280.0 L48 276.4 L47 277.8 L46 282.6 L45 285.5 L44 281.3 L43 280.1 L42 279.9 L41 282.7 L40 281.6 L39 283.6 L38 280.5 L37 286.0 L36 280.5 L35 283.5 L34 283.8 L33 281.2 L32 281.4 L31 284.8 L30 280.7 L29 282.8 L28 292.1 L27 283.7 L26 282.0 L25 290.9 L24 289.5 L23 293.1 L22 290.6 L21 290.9 L20 296.1 L19 290.0 L18 293.1 L17 292.5 L16 297.8 L15 295.6 L14 302.7 L13 309.2 L12 302.5 L11 295.0 L10 300.5 L9 301.6 L8 300.9 L7 305.0 L6 298.2 L5 305.8 L4 301.8 L3 299.9 L2 298.7 L1 303.1 Z" fill="#00ccff"/></svg>
<div class="r" style="left:1667px;top:543px;width:1.5px;height:326px;background:#f0f0f0;"></div>
<div class="r" style="left:1668px;top:543px;width:4px;height:438px;background:#111;"></div>
<div class="r" style="left:1670px;top:544px;width:2px;height:327px;background:#2e2e2e;"></div>
<svg class="s" style="left:665px;top:856px;" width="14" height="14" viewBox="0 0 14 14"><path d="M0 0.8 L6 0.8 A6 6 0 0 1 6 13 L0 13 Z" fill="#eeeeee"/><text x="5" y="10.3" text-anchor="middle" style="font-family:'Liberation Sans';font-size:9px;font-weight:700;fill:#333">S</text></svg>
<svg class="s" style="left:1655px;top:855px;" width="14" height="15" viewBox="0 0 14 15"><path d="M13 1 L7 1 A6.2 6.2 0 0 0 7 13.6 L13 13.6 Z" fill="#eeeeee"/><text x="8" y="10.8" text-anchor="middle" style="font-family:'Liberation Sans';font-size:9px;font-weight:700;fill:#333">E</text></svg>
<div class="r" style="left:665px;top:869px;width:1003px;height:17px;background:#1c1c1c;"></div>
<div class="r" style="left:667px;top:877px;width:5px;height:5px;background:#2a2a2a;"></div>
<div class="r" style="left:673px;top:877px;width:990px;height:5px;background:#333333;"></div>
<div class="r" style="left:665px;top:886px;width:1003px;height:2px;background:#0e0e0e;"></div>
<div class="r" style="left:665px;top:888px;width:1003px;height:46px;background:#171717;"></div>
<svg class="s" style="left:682.5px;top:892.5px;" width="21" height="20" viewBox="0 0 21 20"><path d="M4.5 1 L4.5 13 L17 13 M1 4.5 L13.5 4.5 L13.5 17.5" fill="none" stroke="#a0a0a0" stroke-width="1.8"/></svg>
<div class="t" style="left:693.00px;top:918.00px;font-size:9.2px;color:#a0a0a0;font-weight:400;transform:translateX(-50%);-webkit-text-stroke:0.3px #a0a0a0;">Truncate</div>
<svg class="s" style="left:726.5px;top:892.5px;" width="21" height="20" viewBox="0 0 21 20"><path d="M2 4 L2 1.5 L17 1.5 L17 4 M2 15 L2 17.5 L17 17.5 L17 15 M2 1.5 L2 17.5 M17 1.5 L17 17.5" fill="none" stroke="#a0a0a0" stroke-width="1.8"/><rect x="6" y="5" width="1.3" height="9" fill="#a0a0a0"/><rect x="9" y="3" width="1.3" height="13" fill="#a0a0a0"/><rect x="12" y="5" width="1.3" height="9" fill="#a0a0a0"/></svg>
<div class="t" style="left:737.00px;top:918.00px;font-size:9.2px;color:#a0a0a0;font-weight:400;transform:translateX(-50%);-webkit-text-stroke:0.3px #a0a0a0;">Norm.</div>
<svg class="s" style="left:770.8px;top:892.5px;" width="21" height="20" viewBox="0 0 21 20"><path d="M3 7 L15 7 M5 12 L17 12" stroke="#a0a0a0" stroke-width="1.8"/><path d="M5 4 L1.6 7 L5 10" fill="none" stroke="#a0a0a0" stroke-width="1.7"/><path d="M14.5 9 L17.6 12 L14.5 15" fill="none" stroke="#a0a0a0" stroke-width="1.7"/></svg>
<div class="t" style="left:781.30px;top:918.00px;font-size:9.2px;color:#a0a0a0;font-weight:400;transform:translateX(-50%);-webkit-text-stroke:0.3px #a0a0a0;">Reverse</div>
<svg class="s" style="left:815.1px;top:892.5px;" width="21" height="20" viewBox="0 0 21 20"><path d="M1.5 14.3 L19.5 14.3 L19.5 5 Z" fill="#a0a0a0"/></svg>
<div class="t" style="left:825.60px;top:918.00px;font-size:9.2px;color:#a0a0a0;font-weight:400;transform:translateX(-50%);-webkit-text-stroke:0.3px #a0a0a0;">Fade In</div>
<svg class="s" style="left:859.8px;top:892.5px;" width="21" height="20" viewBox="0 0 21 20"><path d="M1.5 14.3 L20 14.3 L1.5 5 Z" fill="#a0a0a0"/></svg>
<div class="t" style="left:870.30px;top:918.00px;font-size:9.2px;color:#a0a0a0;font-weight:400;transform:translateX(-50%);-webkit-text-stroke:0.3px #a0a0a0;">Fade Out</div>
<svg class="s" style="left:904.7px;top:892.5px;" width="21" height="20" viewBox="0 0 21 20"><rect x="1" y="9" width="19" height="1.4" fill="#a0a0a0"/><g fill="#a0a0a0"><rect x="5.6" y="5.5" width="1.3" height="3"/><rect x="8.6" y="2" width="1.3" height="6.5"/><rect x="11.6" y="4" width="1.3" height="4.5"/><rect x="14.6" y="6" width="1.3" height="2.5"/><rect x="5.6" y="11" width="1.3" height="2.5"/><rect x="8.6" y="11" width="1.3" height="7"/><rect x="11.6" y="11" width="1.3" height="4"/><rect x="14.6" y="11" width="1.3" height="2"/></g></svg>
<div class="t" style="left:915.20px;top:918.00px;font-size:9.2px;color:#a0a0a0;font-weight:400;transform:translateX(-50%);-webkit-text-stroke:0.3px #a0a0a0;">Correct</div>
<svg class="s" style="left:948.5px;top:892.5px;" width="21" height="20" viewBox="0 0 21 20"><circle cx="10.3" cy="9.7" r="8.6" fill="none" stroke="#a0a0a0" stroke-width="1.8"/><path d="M7.2 6.6 L13.4 12.8 M13.4 6.6 L7.2 12.8" stroke="#a0a0a0" stroke-width="1.8"/></svg>
<div class="t" style="left:959.00px;top:918.00px;font-size:9.2px;color:#a0a0a0;font-weight:400;transform:translateX(-50%);-webkit-text-stroke:0.3px #a0a0a0;">Silence</div>
<svg class="s" style="left:993.3px;top:892.5px;" width="21" height="20" viewBox="0 0 21 20"><circle cx="4" cy="4.5" r="2.7" fill="none" stroke="#a0a0a0" stroke-width="1.7"/><circle cx="4" cy="14.5" r="2.7" fill="none" stroke="#a0a0a0" stroke-width="1.7"/><path d="M6 6.5 L17 15.5 M6 12.5 L17 2.5" stroke="#a0a0a0" stroke-width="1.8"/></svg>
<div class="t" style="left:1003.80px;top:918.00px;font-size:9.2px;color:#a0a0a0;font-weight:400;transform:translateX(-50%);-webkit-text-stroke:0.3px #a0a0a0;">Cut</div>
<svg class="s" style="left:1037.1px;top:892.5px;" width="21" height="20" viewBox="0 0 21 20"><path d="M6 13.5 L1.5 13.5 L1.5 1.5 L13.5 1.5 L13.5 5.5" fill="none" stroke="#a0a0a0" stroke-width="1.8"/><rect x="7" y="7" width="12" height="11.5" fill="none" stroke="#a0a0a0" stroke-width="1.8"/></svg>
<div class="t" style="left:1047.60px;top:918.00px;font-size:9.2px;color:#a0a0a0;font-weight:400;transform:translateX(-50%);-webkit-text-stroke:0.3px #a0a0a0;">Copy</div>
<svg class="s" style="left:1081.3px;top:892.5px;" width="21" height="20" viewBox="0 0 21 20"><path d="M1.5 5 L1.5 1.5 L5 1.5 M10 1.5 L13.5 1.5 L13.5 5 M1.5 10 L1.5 13.5 L4 13.5" fill="none" stroke="#a0a0a0" stroke-width="1.8"/><rect x="7" y="7" width="12" height="11.5" fill="none" stroke="#a0a0a0" stroke-width="1.8"/></svg>
<div class="t" style="left:1091.80px;top:918.00px;font-size:9.2px;color:#a0a0a0;font-weight:400;transform:translateX(-50%);-webkit-text-stroke:0.3px #a0a0a0;">Paste</div>
<svg class="s" style="left:1125.6px;top:892.5px;" width="21" height="20" viewBox="0 0 21 20"><path d="M6 13.5 L1.5 13.5 L1.5 1.5 L13.5 1.5 L13.5 5.5" fill="none" stroke="#a0a0a0" stroke-width="1.8"/><rect x="7" y="7" width="12" height="11.5" fill="none" stroke="#a0a0a0" stroke-width="1.8"/><path d="M13 9.5 L13 16 M9.8 12.8 L16.2 12.8" stroke="#a0a0a0" stroke-width="1.8"/></svg>
<div class="t" style="left:1136.10px;top:918.00px;font-size:9.2px;color:#a0a0a0;font-weight:400;transform:translateX(-50%);-webkit-text-stroke:0.3px #a0a0a0;">Dupl.</div>
<svg class="s" style="left:1169.9px;top:892.5px;" width="21" height="20" viewBox="0 0 21 20"><g fill="#a0a0a0"><rect x="1.5" y="1.5" width="1.2" height="7"/><rect x="3.9" y="1.0" width="1.2" height="8"/><rect x="6.3" y="3.0" width="1.2" height="4"/><rect x="8.7" y="2.5" width="1.2" height="5"/><rect x="11.1" y="1.5" width="1.2" height="7"/><rect x="13.5" y="2.0" width="1.2" height="6"/><rect x="15.9" y="3.0" width="1.2" height="4"/><rect x="18.3" y="3.5" width="1.2" height="3"/><rect x="1.5" y="10.5" width="1.2" height="7"/><rect x="3.9" y="10.0" width="1.2" height="8"/><rect x="6.3" y="12.0" width="1.2" height="4"/><rect x="8.7" y="11.5" width="1.2" height="5"/><rect x="11.1" y="10.5" width="1.2" height="7"/><rect x="13.5" y="11.0" width="1.2" height="6"/><rect x="15.9" y="12.0" width="1.2" height="4"/><rect x="18.3" y="12.5" width="1.2" height="3"/></g></svg>
<div class="t" style="left:1180.40px;top:918.00px;font-size:9.2px;color:#a0a0a0;font-weight:400;transform:translateX(-50%);-webkit-text-stroke:0.3px #a0a0a0;">Stems</div>
<div class="r" style="left:665px;top:934px;width:1003px;height:2px;background:#0e0e0e;"></div>
<div class="r" style="left:665px;top:936px;width:1003px;height:45px;background:#181818;"></div>
<div class="t" style="left:668.40px;top:940.00px;font-size:9.2px;color:#8e8e8e;font-weight:400;-webkit-text-stroke:0.3px #8e8e8e;">PLAY RANGE</div>
<div class="t" style="left:773.40px;top:940.00px;font-size:8.8px;color:#8e8e8e;font-weight:400;-webkit-text-stroke:0.3px #8e8e8e;">SELECTION RANGE</div>
<div class="t" style="left:712.50px;top:954.00px;font-size:7.5px;color:#9a9a9a;font-weight:400;transform:translateX(-100%);">START</div>
<div class="t" style="left:764.40px;top:954.00px;font-size:7.5px;color:#9a9a9a;font-weight:400;transform:translateX(-100%);">END</div>
<div class="t" style="left:817.50px;top:954.00px;font-size:7.5px;color:#9a9a9a;font-weight:400;transform:translateX(-100%);">START</div>
<div class="t" style="left:869.40px;top:954.00px;font-size:7.5px;color:#9a9a9a;font-weight:400;transform:translateX(-100%);">END</div>
<div class="t" style="left:712.60px;top:965.00px;font-size:9.7px;color:#eeeeee;font-weight:400;transform:translateX(-100%);-webkit-text-stroke:0.3px #eeeeee;">0</div>
<div class="t" style="left:764.60px;top:965.00px;font-size:9.7px;color:#eeeeee;font-weight:400;transform:translateX(-100%);-webkit-text-stroke:0.3px #eeeeee;">570181</div>
<div class="t" style="left:817.60px;top:965.00px;font-size:9.7px;color:#eeeeee;font-weight:400;transform:translateX(-100%);-webkit-text-stroke:0.3px #eeeeee;">0</div>
<div class="t" style="left:869.60px;top:965.00px;font-size:9.7px;color:#eeeeee;font-weight:400;transform:translateX(-100%);-webkit-text-stroke:0.3px #eeeeee;">570181</div></body></html>
